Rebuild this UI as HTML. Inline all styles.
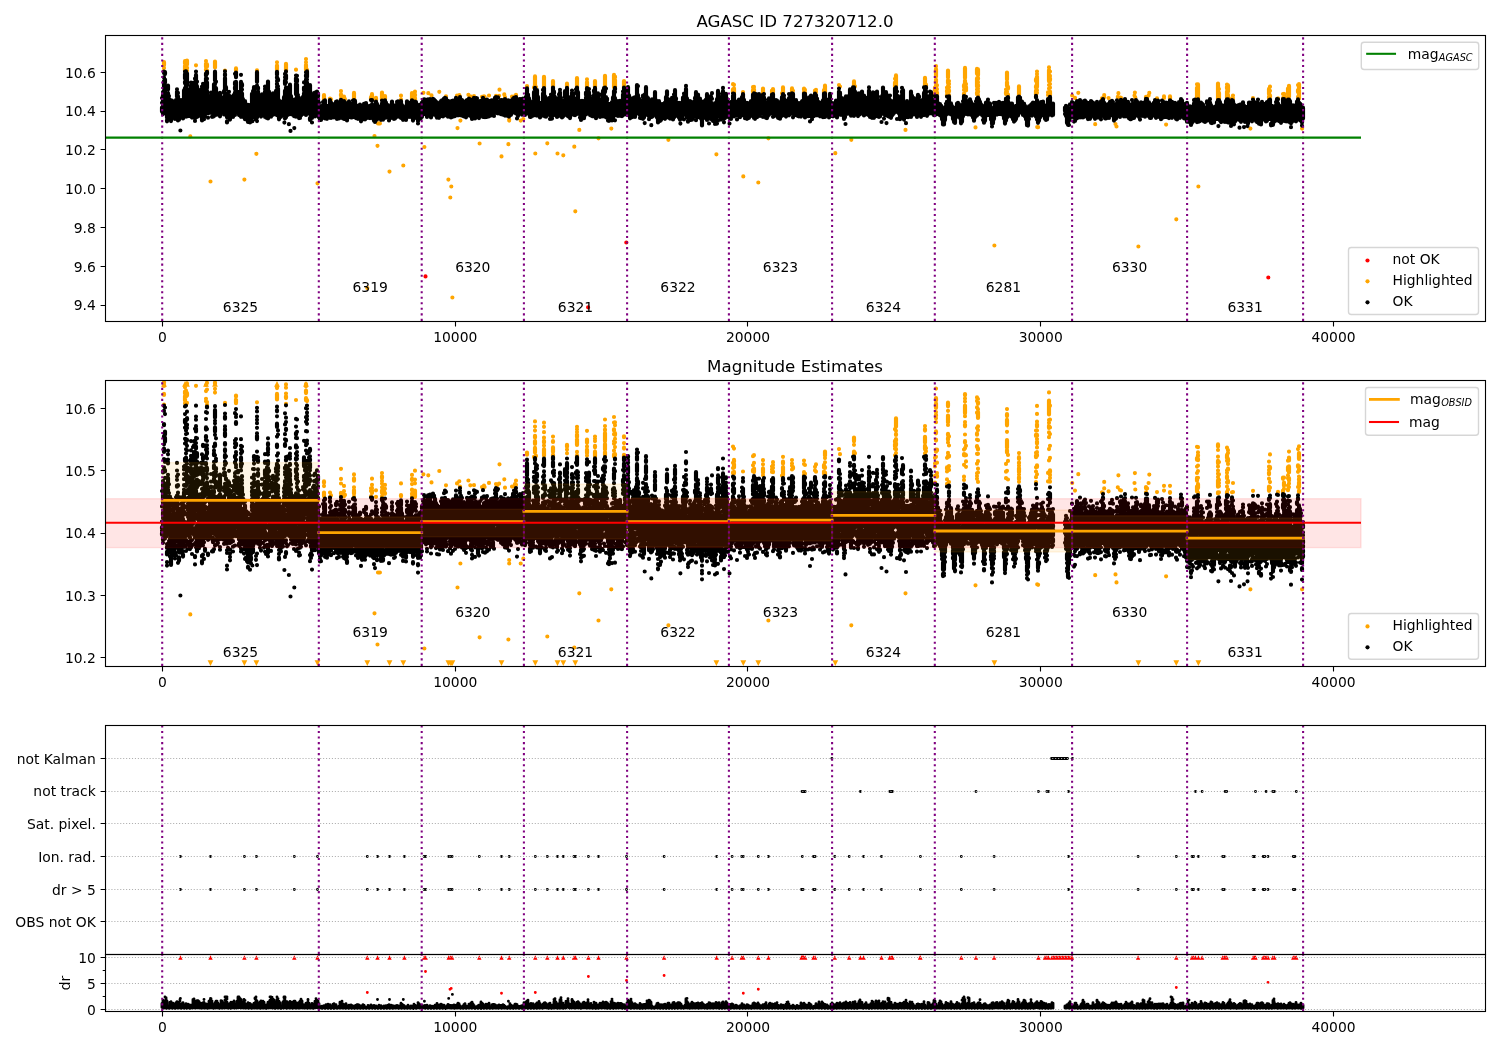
<!DOCTYPE html>
<html><head><meta charset="utf-8"><title>AGASC ID 727320712.0</title>
<style>html,body{margin:0;padding:0;background:#fff}svg{display:block}text{filter:grayscale(1)}</style></head>
<body>
<svg width="1500" height="1050" viewBox="0 0 1500 1050" style="font-family:'DejaVu Sans','Liberation Sans',sans-serif" fill="#000">
<rect width="1500" height="1050" fill="#fff"/>
<defs>
<clipPath id="c1"><rect x="105.5" y="35.5" width="1380" height="286"/></clipPath>
<clipPath id="c2"><rect x="105.5" y="380.5" width="1380" height="286"/></clipPath>
<clipPath id="c3"><rect x="105.5" y="725.5" width="1380" height="229"/></clipPath>
<clipPath id="c4"><rect x="105.5" y="954.5" width="1380" height="57"/></clipPath>
</defs>
<g clip-path="url(#c1)" fill="none" stroke-linecap="round" stroke-width="4.17">
<path d="M425.5 276.4v0M626.3 242.5v0M588.1 307.3v0M1268.3 277.5v0" stroke="#f00"/>
<path d="M164 62V65.3M164 68v0M164 71.2v0M185 61.2V63.5M185 65.8V70.7M186 66.8V68.6M186 71.2v0M187 60.6V64.6M187 67.6V68.4M187 70.6v0M196 65.3v0M206 61v0M206 63.7V67M206 69.3V70.1M207 64.4V66.5M207 70.4V71.2M215 61.6V67.4M225 70.6v0M236 68.4V70.7M257 70.4v0M277 62.3v0M277 65.5V69.6M286 63.8V70.9M296 69.7v0M306 59.1v0M306 62.3v0M306 64.8V69.8M307 69.9v0M324 95V99.7M330 98.5V99.8M331 99.4v0M341 91.1v0M341 94.3V95.7M341 98.6V99.9M344 96.5V99.7M345 99.2v0M354 92.9V99.8M371 97.2V99.8M372 94.2V98.6M376 97.8V99.8M382 92.5V99.7M384 98V98.7M385 96.1V98.9M401 95.7v0M401 99.5v0M412 93V99.8M415 91.7v0M415 94.5V95.6M415 97.9V99.9M460 96.8v0M474 96.2v0M482 96.8v0M484 96.4v0M496 95.9v0M497 96.3v0M505 97v0M512 96.7v0M515 96.2v0M516 94.8V96.1M527 86.1V86.7M534 87.4v0M535 76.4V87.5M536 87.1v0M544 76.8V87.1M553 81.1V87.3M567 83.7V86.3M577 78.1V87.3M587 79.3v0M587 82V87M595 81.1V87.2M605 75.8V86.8M614 74.9V87.3M615 76.7V77.6M615 80.1V86.9M624 81V87.4M733 84.2v0M733 89.3V92.5M734 84.8v0M734 88.4V92.5M743 92v0M753 87.2v0M753 90V92M754 86.9v0M754 89.3V92.1M763 88.5V93.2M772 90.5V92.2M773 89.1V92.2M782 93.3v0M783 87.4V93.1M792 88.4V91.4M793 90.8v0M804 88.6V89.7M804 92.2V93.2M805 89.9v0M805 92.7v0M815 90.5V91.6M816 89.8v0M816 92v0M824 90V92.7M825 85.7V93.4M839 85v0M840 86.6v0M854 81.4V86.8M855 86.3v0M895 78.8v0M895 82.5V87M896 75.4V86.2M925 77.8V87M926 84.7V85.8M935 87.7V90.4M935 93.3V95.4M936 66.2v0M936 69.1V76.6M936 79.5V82.3M936 85.2V87.4M937 85.3v0M937 89.2v0M937 92.5V93.6M947 87.7v0M947 90.7V92M947 94.4V95.8M948 70.6V77.5M948 80.2V82.9M948 86.2V87.2M949 81v0M949 83.9v0M949 87.2v0M949 90.3V91.5M949 95.2v0M964 85.2V86.9M964 89.9v0M964 93.6V94.7M965 67.9V77.9M965 80.5V86.9M966 84v0M966 86.9V90.5M977 68.9V73.7M977 78.4V86.5M977 89.5v0M977 92.5V94.2M978 69.4V75.3M978 77.9V79.1M978 82.2v0M978 84.8V86.5M978 88.8v0M978 91.1V92.3M978 95.2v0M1006 89.6v0M1006 92V94.1M1007 72.6V79.6M1007 82.2V86M1007 91.7v0M1008 86.8V88.7M1008 94.5v0M1019 86.3V95.2M1036 79.2V80.9M1036 86.2V87.5M1036 90.7V95.2M1037 71.6v0M1037 74v0M1037 76.5V87.1M1037 90.3v0M1037 92.8v0M1048 92.4v0M1048 95v0M1049 67.4v0M1049 69.9V81.3M1049 85v0M1049 88.5v0M1049 92.1v0M1050 71.5v0M1050 75.9v0M1050 78.3V80.3M1050 84v0M1050 87.7v0M1050 91.6V95.1M1102 98.4v0M1103 98.6v0M1120 97.7v0M1121 97.9v0M1146 96.8V98.4M1147 97.3v0M1157 98.4v0M1170 96.4V98.6M1197 84.3v0M1197 87.8V98.1M1198 84.4V98.5M1218 83.6V98.8M1219 89v0M1219 92.8V98.4M1227 84.6v0M1227 86.8V88.6M1227 91.6V98.8M1228 85.4V91.4M1228 94.9V97.6M1232 98.4v0M1233 95.5v0M1233 98.3v0M1253 98v0M1269 88.9V94.2M1269 96.7V98M1270 86.7v0M1270 90.8v0M1270 95.3V97M1278 98.3v0M1283 94v0M1283 98.1v0M1284 93.9V97.4M1288 88.6V94M1288 96.3V97.8M1289 85.8V96.8M1298 85v0M1298 90V92.1M1298 96.8v0M1299 84.2V88.1M1299 90.4V98.4M190.3 136.4v0M374.5 136.1v0M377.5 145.8v0M379.9 123.4v0M378 123.4v0M424.4 147v0M457.5 128.1v0M460.4 120.6v0M479.6 143.5v0M508.4 144.2v0M509.2 119.5v0M509.2 120.6v0M520.7 120.6v0M523.3 119.1v0M547.3 143.3v0M210.5 181.5v0M244.4 179.6v0M256.4 153.8v0M317.5 183.3v0M367.3 288.1v0M389.5 171.6v0M403.3 165.5v0M448.4 179.6v0M451.3 186.5v0M450.3 197.5v0M452.4 297.5v0M501.5 156.4v0M535.3 153.5v0M574.3 146.7v0M579.3 129.9v0M598.5 138.3v0M611.3 128.6v0M668.4 139.8v0M768.4 138.3v0M851.3 139.8v0M905.5 129.9v0M557.5 153.5v0M563.3 155.3v0M575.3 211.3v0M716.4 154.3v0M743.3 176.4v0M758.3 182.5v0M835.3 153.2v0M975.5 127.4v0M1038.1 127.2v0M1037.2 127.1v0M1095.2 124.2v0M1115.5 124v0M1116.5 126.5v0M1166.1 124.6v0M1250.4 128.6v0M1302.1 128.6v0M994.4 245.5v0M1138.4 246.5v0M1176.3 219.3v0M1198.4 186.5v0M423.4 92.8v0M428.3 93.2v0M431.5 95.4v0M439.3 91.8v0M446 96.3v0M457 95.7v0M459.3 95v0M468.4 94.8v0M470.3 96.3v0M484.6 96.8v0M489 95.5v0M499.5 89.7v0M499.1 95.8v0M504.3 94.4v0M1078.3 92.8v0M1072.2 95.5v0M1075 97.9v0M1104.2 95.2v0M1104.2 97.2v0M1108.6 98.1v0M1118.4 93.2v0M1117.8 96.9v0M1134.9 92.5v0M1134.5 95.5v0M1135.3 97.6v0M1149.3 92.9v0M1148.6 95.5v0M1147.1 97.2v0M1164 96.4v0M1164 97.9v0" stroke="#ffa500"/>
<path d="M162 98v0M162 102.8v0M162 107.6V111.6M163 92v0M163 94.9V101.8M163 104.1V114.1M164 71.5V73.1M164 77.4v0M164 81V88.1M164 90.7V91.9M164 97.8V98.6M164 109.6V112.8M165 72.1V74.1M165 79.5V82.7M165 88.4V89M165 91.5V96.2M165 99.8V107.3M165 109.9V112.8M166 96.3V108.6M166 112.2v0M167 97.9V112.1M167 114.5V117.8M167 120.2V121.3M168 85.5V89.4M168 93V103M168 106.3V111.5M168 114.7V115.9M169 96v0M169 98.7V111.3M169 113.6V114.7M170 99.8V118.4M171 106.5V121.1M172 100.7V101.9M172 105.8V118.1M173 102.5V114.4M174 105V114.9M175 103.5V105.4M175 108.1V119M176 100V115.8M176 118.1v0M177 89.3v0M177 91.7V96.7M177 99.5V113.6M178 92.9v0M178 96.2V113.1M178 120.4v0M179 105.8V119.7M180 104.5V117.2M181 100V115.1M182 100.8v0M182 103.2V115.7M183 101.8V104.1M183 106.7V118.4M184 90.4V105.4M184 108.2V109.7M184 113.6v0M185 71.7v0M185 74.1V78.4M185 81.8V83.3M185 88V90.6M185 102.8v0M185 105.3v0M185 107.7v0M185 110.7V112.4M185 115.4v0M186 71.4v0M186 76.1V93.6M186 96.3v0M186 98.7v0M186 107.8V116.7M187 73.4V85.4M187 88.6V98.4M187 105v0M187 111.4v0M187 114v0M188 90.8v0M188 93.4V106.1M188 108.3V111.9M188 116.1v0M189 101.1V115M190 95.4V108.3M190 112.4V116.1M191 82.5v0M191 85.4V99.8M191 102.9V106.9M191 110.9v0M191 114.9V115.6M192 91.7V93M192 97.1V115M192 117.6v0M193 84.4v0M193 87.6V89.3M193 92V111.3M194 82.6V89.5M194 92.8V96.1M194 98.3V101.5M194 104.1V104.7M194 107.7v0M194 111.7v0M194 114.6v0M195 78.7v0M195 82.3v0M195 85.7V102.4M195 106V106.8M195 109.8V114.7M195 118.5v0M195 120.9v0M196 71.5v0M196 74.9V84.8M196 88.7V92.7M196 95.7V99M196 101.8V103.4M196 106.4v0M196 109.3V115.6M197 81.7v0M197 86.2V97M197 100.2V101.7M197 105.3V106.4M197 108.9v0M197 111.6V116.9M198 91.9v0M198 96.2v0M198 99.7V116M199 92.7v0M199 95v0M199 99.1V115.8M200 102.6V115.3M201 89.3V92.7M201 95.6v0M201 99V114.6M202 86.7v0M202 89.4V92.7M202 97.4V101M202 104V113.5M202 118.2V120.5M203 83.9v0M203 87.5V99.9M203 102.6V104.3M203 107.2V110.6M203 113.8V114.9M203 117.8v0M204 96V114M204 119.2v0M205 96.7V103.4M205 105.8V112.7M205 116V116.6M206 73.5V75.7M206 78.3V93.6M206 96.3v0M206 105V110.5M207 71.8V73.7M207 78.8v0M207 82.4V87.9M207 90.8V98.5M207 101.2v0M207 103.4v0M207 106.3v0M207 109v0M207 111.3v0M208 97.5V100.5M208 103.2V113.2M208 117.7v0M209 99.6V101.1M209 103.4V113M210 99.5V112.7M211 92.7v0M211 95.1V112.6M212 98.7V99.5M212 101.7V112.6M212 116.8v0M213 98.1V114M213 116.7v0M214 84.3V100.9M214 103.2V110.6M214 116.1v0M215 71.7V80.5M215 83.3V84M215 86.9v0M215 92.3v0M215 106.9V111.6M215 114.9v0M216 81.7v0M216 88V96.9M216 99.9V110.6M216 113v0M217 101V114.6M218 101.3v0M218 104.4V114.3M219 97.8V112.1M220 92.9V101.5M220 103.9V105.2M220 109.9V113M220 115.4V116.3M221 101V112.8M222 102.8V112.7M223 100.4V113.1M224 91.1V93.1M224 96.8V112M224 114.5v0M225 71.3v0M225 73.9V75.5M225 77.9V89.9M225 92.4V93.3M225 95.8v0M225 104.8v0M225 108.6V110M225 113V114.4M226 87.2V89.4M226 94.2V99.1M226 101.4V113.1M227 101.7V105.4M227 108.1V117.3M227 121.3V122.4M228 95v0M228 97.3V115.7M229 91.8v0M229 95.4V107M229 109.9V114M230 104.3V119.6M231 99.2V111.1M231 113.3V114M232 96.5V112.1M233 101.5V108M233 110.7V116.9M234 94.9v0M234 97.2V111.9M235 73.8v0M235 82.4V84.4M235 87.1V89.2M235 92.5V97.8M235 100.2V111.2M235 115v0M236 72.6V77.2M236 81.8V92.2M236 94.6V98.2M236 104.4v0M236 107.5V109.3M236 112.1v0M237 95V108.9M238 91.8V112M239 100.6V115.1M240 94.6v0M240 98.3V111.3M240 113.7V114.4M241 74.8v0M241 81.9V91.6M241 94.5V96.1M241 99.2V101.6M241 104.3V116.8M242 84.2V85.9M242 89.6v0M242 93.4V101.3M242 103.6V113.6M243 99.2V101.7M243 104.4V114.5M244 104.6V117.5M245 101.1V115.6M245 119.2v0M246 104.3V116M246 118.8v0M247 105.5v0M247 107.9V116.8M247 119.7v0M248 104.8v0M248 108.1V121.9M249 105.2V118.8M250 105.3V119.4M250 122.5v0M251 106.5V120.5M252 93.8V111.9M252 114.5V115.8M253 91.2v0M253 93.9v0M253 98.3V100.4M253 102.9v0M253 106.5V117.1M254 87.1V100.5M254 102.8V114.4M255 98.1v0M255 102.2V113.8M256 96.1V111.2M256 113.8v0M256 118.2V119.4M257 72.2V82M257 85.7V88M257 95.3V96M257 98.7v0M257 101.2v0M257 107.2V114M257 117.5v0M257 121.1v0M258 87.6V89M258 91.3V105M258 108.2V114.4M259 96V99.2M259 101.8V114.4M260 101.4V115.7M261 101.3V114.2M261 116.6v0M262 94.3V96.1M262 98.8V109.2M262 111.9V112.7M263 100.4V114.2M264 97.2v0M264 99.6V106.2M264 108.8V112.8M264 115.6v0M265 86.6v0M265 89.1v0M265 91.6V104.7M265 107.4V108.3M265 110.6V116.9M266 96.4V107.5M266 111.2V112.7M266 117.6v0M267 90.6V109.4M267 111.8V112.4M267 114.8v0M268 81.6V96.5M268 109.4v0M268 113v0M268 115.2V118.4M269 91.7V106.3M269 109.1v0M269 111.6V113.2M270 102.5V114.4M271 101.3V114.3M271 116.7v0M272 95.5V98.2M272 101V115.2M273 93.3V110.5M273 113.2V114.6M274 101.6V114.3M275 95.5V97.8M275 100.1V111.4M276 90.9V103.8M276 106V110M276 112.9v0M277 71.8V74.8M277 77.1V78.1M277 81.1v0M277 83.6V84.4M277 87v0M277 89.6V94.6M277 106.5V108.4M277 111.8V115.2M278 79.2V80.4M278 86.3v0M278 88.6V102M278 104.4V111.5M278 114.4v0M279 100.3V119.3M280 101.5V115.8M281 104.9V116.8M282 102.9V114.7M283 101.1V115.3M284 97.2V109.7M284 112V113.9M285 73.9v0M285 77.3v0M285 80.4V84M285 90.8V102.4M285 108.5V112.1M285 118.5v0M286 71.4v0M286 75.2V79.1M286 82.3v0M286 87.5V90.1M286 92.5V96M286 107.7V114.3M286 117.3v0M287 91.9V94.6M287 96.8V98.8M287 101.1V111.3M287 115.2v0M288 87.5v0M288 90.5V106.3M288 108.8V110M288 114.8v0M289 94.5V112M290 84.7V95.4M290 99.5V100.5M290 103.4V109M291 96V114.2M292 100.5V114.4M293 99.6v0M293 103V114.5M294 100.6V116.1M295 99.9v0M295 102.2V114.4M296 75.6v0M296 78V81.5M296 83.8V94.2M296 98.8V109.3M296 112.2V116.7M297 75.8v0M297 79.6V81.6M297 84.5V96.9M297 99.1V111.5M298 95.1v0M298 97.6V113.1M298 115.9v0M299 97.9v0M299 100.2v0M299 102.6V113.7M299 117.1V118.1M300 100.2V102.7M300 105.1V115.7M300 118v0M301 99.7V115.4M302 104.5V114.3M303 96.8V113.5M304 82.4v0M304 87.6V90.3M304 93.3V96.9M304 99.5V103.9M304 106.5v0M304 109.7V112.7M305 89V105.4M305 107.9V109.7M305 114.1v0M306 72.3v0M306 75.1V76.5M306 79.4v0M306 82.6V85.5M306 89.3V96.7M306 104.2v0M306 109V111.6M306 114.9v0M307 71.4V77.1M307 79.5v0M307 82.4V83.3M307 86.4v0M307 88.7V96.1M307 98.9v0M307 102.6V105.2M307 107.9V109.1M307 111.7V113.7M308 93.3v0M308 99.1V113.3M309 86V87.6M309 92.7v0M309 95.9V112.9M310 85V95M310 97.8V105.2M310 112.8V114.1M310 118V119.9M311 98.4V99.1M311 102.8V118.8M312 103.2V118M312 122.5v0M313 96.9V111.6M313 116.1v0M314 93.2V113.8M314 116v0M315 92.6V94.8M315 97.9V116.4M316 98.9V115.3M317 91.6v0M317 94.4V111.8M317 114.3v0M318 93.3V96.6M318 98.9V112.9M319 102.8v0M319 105.4v0M319 107.8V117.5M320 108V119.9M321 106.6V119.9M322 107.3V117.2M323 102.1v0M323 105.2V117.4M324 101V109.3M324 111.9V116M325 100.4V118.5M326 107.8V117.4M327 107.9V118.8M328 105.8V115.5M328 117.9v0M329 106.2V117.5M330 100.1V117.4M331 102.6V118M332 106.9V115.7M333 104.6V115.6M334 104.2V114.9M334 117.4v0M335 108V115.9M336 101.9V116.5M337 101.4V115.7M337 118.9v0M338 105.1V117.4M339 108.4V118.5M340 102.5V103.7M340 107.4V116.8M341 99.9V112.8M341 115.7V117.3M342 102V116.8M343 108V118.5M344 101.1V111.4M344 114.3V118.9M345 102.3V116.4M346 107.7V119.2M347 109.6V120.4M348 108.3V117.2M349 101.4V115.5M350 106.9V116.9M351 110.3V117.4M352 107.9V117.4M353 100.5v0M353 102.9V114.1M354 100.2v0M354 102.4V110.4M354 113.4V114.5M354 116.8v0M355 100.8V115M356 106.5V118.1M357 105.5V116.5M358 107.5V118.8M359 106.4V118.1M360 104.7V116.7M361 106.7V116.6M361 121.3v0M362 109.2V119.5M363 107.8V117.8M364 103.9V104.6M364 107V117.4M365 107.4V119.4M366 103V115.2M367 107.8V117.9M368 106.2V117.3M369 106.2V117.8M370 108.4V118.1M371 100.1v0M371 105.3V115.8M372 100.1V100.8M372 104.4V105.2M372 108.3V117.5M373 107.5V118.6M374 112.6V120.8M375 104.9V116.7M375 122v0M376 101.5V115M376 117.2V117.8M377 103.9V119.6M378 106.2V117M379 106.6V115.5M380 109.1V117.9M381 107V119.8M382 100.6v0M382 103.3V119.5M383 101.5V104M383 107.6V119.7M384 102.1V115.2M384 118.1v0M385 100.3V117.1M386 102.7V117.6M387 105.4V116M388 105V116.5M389 107.3V117.6M389 120.5v0M390 106.8V117M391 107.8V117.9M392 101.6V112.7M392 115.4V116.6M393 105.5V116.8M394 105.4V114.9M394 117.7V118.9M395 106.2V118.6M396 107.1V108.6M396 111V117.3M397 101.9v0M397 104.2V114.2M398 101.4V114.4M399 104.1V116.7M400 101.6v0M400 104V116.5M401 101V114.2M401 117.9v0M402 105V117.7M403 106v0M403 108.2V119.8M404 107.5V117.3M405 108V118.3M406 107.6V120M407 101.3V113.6M407 115.9v0M408 106.7V117M409 103.4V115.8M410 102.5V117M411 104.5V114.4M412 100.3V116.3M413 106V120.6M414 107.5V116.8M415 101.5V103.7M415 106.5V114M416 102.1V117.9M417 106.9V117M418 105.6V121.2M418 123.4v0M419 105.2V117.2M420 104.7V118.8M421 106.5V118.1M422 102.7V114.1M422 116.8v0M423 101.2V112.7M424 99.3V114M425 99.7v0M425 102.2V114.1M426 101.5V114.6M427 104.7V116.9M428 99.4V113.5M429 100.5V111.6M429 114.2v0M430 99.2V113.1M431 102.2V117.5M432 101.7V115.2M433 98.8V99.8M433 102.9V112.7M434 99.5V114.2M435 100.5V108.4M435 111.8v0M436 101.8V115.8M437 102.4V104.6M437 106.9V117.7M438 104.3V115.2M439 103v0M439 105.2V117.8M440 103.3V116.2M441 101.2V114.9M442 100.3V114.9M443 101.5V116.4M444 98.7v0M444 101.4V114.5M445 97.9v0M445 100.1V113M446 98.3v0M446 102.3V115.3M447 100.8V112.1M447 114.8v0M448 100.9V112.4M448 116.7v0M449 101.7V112M450 102.5V115.9M451 101.3V115.3M451 117.5v0M452 101.2V113.5M453 100.7V114.1M453 116.6v0M454 101.3V113M455 103.9V116.1M456 97.9V110.1M456 112.8v0M457 99.9v0M457 102.6V114.8M458 100.3V113.1M458 115.3v0M459 101.1V114.1M460 97.2V111.8M460 115.2v0M461 99.5V114.5M462 100.2V115.6M463 101.6V114.7M464 101.5V116.4M465 101.9V114.8M466 104.9V117.3M467 100.2v0M467 103V112.8M468 100.6V113.1M469 98.6v0M469 101.2V113.1M469 115.5v0M470 100.2V113.2M471 103.7V116.3M472 99.7V119M473 101.7V114.3M474 97.8V113M475 98.9V100.1M475 103.1V115.6M475 118.5v0M476 98.2v0M476 101.3V112M476 114.5v0M477 98.3v0M477 103.8V113.9M478 103.9V117.5M479 101.9V115.4M479 118.1v0M480 101.2V115.3M481 102.9V114.1M482 100.3v0M482 103.3V115.9M483 97.8v0M483 103.1V117M484 99.7V112.2M485 102.1V112.9M485 117.2v0M486 100.4V115.7M487 99.7V102.5M487 105V112.1M487 116.8v0M488 101.7V116.3M489 101.2V116.3M490 101V112.6M491 100.5V112.5M491 115.4v0M492 100.4V115M493 101.8V115.3M494 100.3V112.8M494 116v0M495 97.8V112.7M496 97.1V110.3M497 97.9v0M497 100.4V113.1M498 97.4v0M498 102.8V113.3M499 102.5V113.2M500 101.3V112.5M501 100V114.2M502 100.2V111M503 100.9V114.7M504 100.4V111.8M505 99v0M505 101.4V115.6M506 100.9V114.4M507 101.5V115.7M508 100.3V114.1M509 100.5v0M509 102.9V114M509 116.6v0M510 101V113.6M511 101.5V114.8M512 100.1V112.6M513 98.9V112M514 97.9V111.5M515 98.3v0M515 100.6V113M516 97.1V107.1M516 109.7v0M516 113.4v0M517 103.2V114.1M517 118.4v0M518 101.1V116.1M519 99.3V113.7M520 99V112.1M521 99.3v0M521 101.8V113.9M522 100.7V114.7M523 98.7V112.8M524 100.6V113.3M525 100.1v0M525 102.3v0M525 104.9V114.9M526 96.8V98.3M526 102V113M527 88.3V96.7M527 101.1V103.2M527 106.6V107.9M527 112.3v0M528 94.5V107.9M528 110.5V111.9M529 98.3V109M529 111.3V114.2M530 104.1V117M531 104V116.8M532 103V115.3M533 101.1V115.7M534 92V98.6M534 101.8V109.8M534 112.3v0M535 87.8V89.4M535 94.2v0M535 105.9V112.3M536 89.9V104M536 108.2V112.7M536 115.3v0M537 90.2V99.5M537 102.2V111.2M537 115.6v0M538 96.9V115.5M539 103V114M540 106.4V117.4M541 102.8V114.4M542 102.5V115.7M543 89.9v0M543 93.6V113.9M544 88V97.3M544 103.9V107.2M545 96.3V116.4M546 103.3V116.7M547 104.2V113.8M548 101.2v0M548 103.6V114.4M549 98V114.1M550 99.2V115.3M550 119v0M551 94.7v0M551 97.4v0M551 100.1V102.1M551 104.3V115.3M552 95.2v0M552 98.8V109.8M552 112.4V115.1M552 118.6v0M553 87.5V92.5M553 95.9v0M553 98.3V99M553 101.9v0M553 107.9v0M553 112.1V115.6M554 91.7V93.3M554 95.6V108.9M554 111.3v0M555 97.2V114.6M556 100.7V113M557 106.4V117M558 102.7v0M558 105V114M558 116.5v0M559 94.4v0M559 97.7V110.9M559 113.4V114.2M560 89.8v0M560 92.3V100.6M560 102.8V104.2M560 108.4V111.7M561 97.9v0M561 101.3V113.3M562 100.6v0M562 105.3V117.4M563 103.7V116.6M564 103.3V114.7M565 91.2V97.8M565 100.5V112.6M566 92.6v0M566 95.3V102.2M566 104.7V107.8M566 111.1v0M567 87.9V100.2M567 102.5V109.3M567 112v0M567 115.4v0M568 96.8V98.8M568 101.1V116.3M569 102.9V115.2M570 106V118.1M571 97.2v0M571 100.3V114.4M572 90.6v0M572 92.8V109.4M573 93.6V111.8M573 114.1v0M574 103.3v0M574 105.5V114.9M575 101.6V115.2M576 89.3v0M576 92.4v0M576 98.3V111.8M577 87.5V94.1M577 98.5V99.2M577 102.5V104.3M577 113.9v0M578 92.2V109.4M578 111.8v0M579 100.5V113.9M580 104.1V114.7M580 117.6v0M581 104.3V119.9M582 100.8v0M582 103.5V112.6M582 118.5v0M583 103.2V118.2M584 105.7V118.2M585 100.5V112.5M586 92.5V95M586 97.4V99.4M586 102.1V110.5M586 113V114.4M587 88.2V89.8M587 92.6V93.4M587 97.1v0M587 101.7V111.5M588 92.8v0M588 95.4V108.6M588 111.2V112.4M589 89v0M589 92.3V110.7M590 96.1v0M590 101.7V115.1M591 98.8V101.6M591 105V113M592 101.8V116.1M593 101.8V116.2M594 90.5V91.7M594 94.9V96.6M594 99.2V108.7M594 110.9V111.8M595 87.9V96.4M595 99.9v0M595 103.6v0M595 106.1V108.3M595 113.4V116.5M596 97.4V118.2M597 95.2V105.5M597 108.2V112.9M598 93.4V112M599 101.9V103.8M599 106V115.5M600 100.3v0M600 102.9V116.9M601 94.9v0M601 99.2V100.3M601 102.7V113.5M602 94.1v0M602 99V112.6M602 116.1v0M603 90.8V106M603 109.5v0M603 116.4v0M604 88.2V104.3M604 108.7v0M604 112.2V114.4M605 87.5V92.1M605 108v0M605 111.4v0M605 115.1v0M606 88.6v0M606 97V99.4M606 101.6V111.9M606 117.3v0M607 98.6V100.3M607 102.7V105.1M607 107.4V112.5M608 103.6V105.3M608 107.9V115.3M608 120.6v0M609 104.4V117.6M609 119.9V120.8M610 104V119M611 103.7V115.3M612 102v0M612 105.7V112.8M612 115.2V117.4M612 120.5v0M613 97.4V99.4M613 101.7V113.8M613 116.4V117.5M614 91.1V100.4M614 105.6V109.2M614 113.1v0M614 115.7v0M615 87.9V89.6M615 91.9v0M615 98V107.5M615 110.9V115.5M615 120.3v0M616 100.9V112.7M617 102.2V112.1M618 101.2V116M619 102v0M619 104.3V114.5M620 100.8V110.8M620 114.6v0M621 103.2V116M622 102.7V113.6M622 116.1v0M623 91.5v0M623 94.6V98.9M623 102.7V111.9M623 115.3v0M624 87.7V93.7M624 96.3V97.4M624 105.4v0M624 108.5V112.3M625 94V110.9M625 113.9v0M626 100.1V114.1M627 94.3V109.3M627 112.4V114.9M628 87.2V100M628 103.8v0M628 111.5v0M629 95.3V109.1M629 112.4v0M629 115.2v0M630 103.6V118.3M631 98.3v0M631 101.4V116M632 104.1V117.2M633 98.9V116.3M634 97.7V113.1M635 101.2V108.9M635 111.2V116.9M636 96.8V109.8M636 114.1v0M637 85.1V99.4M637 111.1v0M638 86.1v0M638 95V113.2M639 98.5V109.3M639 111.6V113.6M640 101.4V112.7M640 115.3v0M640 117.9v0M641 100.6V118.2M642 103.3V115.8M643 95.5V97.2M643 99.9V110.7M643 113.5v0M643 118.8v0M644 103.6v0M644 105.8V117.6M645 94.3v0M645 97.7V98.4M645 101.2V114.3M646 87.2V100.3M646 102.6v0M646 108.2v0M646 112.2v0M646 114.6v0M647 97V114.6M648 98.1V111.9M649 104.4V116.5M649 119.2v0M650 103.2V115.7M651 102.1V117.1M652 99.4V100.4M652 102.6V116.8M653 102.6V116.1M654 100.2V113.7M655 92.1V106.9M655 111.9v0M655 114.5v0M656 100.4V113.5M657 102.4V117.6M658 104.4v0M658 107.8V116.9M658 119.2V122.4M659 101.2V114.8M660 105.9V121M661 104.1v0M661 106.6V120M662 104.2V117.6M663 104.2V117.8M664 104.4V118.1M665 102.6v0M665 106.1V115.9M665 118.8v0M666 97.1V114.1M666 117.1v0M667 91.3V95.3M667 97.9V102.5M667 105.2v0M667 109.5V114.7M668 99.2v0M668 102.6V114.8M668 117.3v0M669 103.2V114.5M669 117.3v0M670 105V118.6M671 99.4V114.4M671 117.7v0M672 97.9V114.7M673 104.7V119.4M674 94.5v0M674 97.4V110.9M674 113.3V115.3M674 117.6v0M675 90.2V103.7M675 108.5v0M675 111.7V112.8M675 116v0M676 98.3V99.3M676 101.5V114.3M677 103.9V114.4M678 103.3V116.2M679 102.8V117.7M680 108.1V119.7M681 106.6V118.9M682 102.7V114.1M682 117.6V118.4M683 97.7V115.4M684 93.7v0M684 96.3V113.2M684 119.3v0M685 95.5v0M685 97.9V113.8M686 85.9v0M686 88.8V103.7M686 107V107.8M686 112.3V113.4M687 98.4V99.8M687 104.5V117.3M688 107.9V117.9M688 120.8V121.7M689 105.5V115.6M689 120.3v0M690 101.1V115.2M691 103.9V119.9M692 102.8v0M692 105.5V119.7M693 103.1V117.5M694 101.7V116.3M695 97.9V98.6M695 101.2V111.9M695 114.6V115.3M696 92.2V105.7M696 111.3v0M696 113.8v0M696 116.6v0M696 120.2v0M697 96.6v0M697 101.1v0M697 103.6V117.8M698 94.6V112.8M698 115.3V116.8M699 100.5V117M700 98.7V114.5M701 101.3v0M701 104.1V118.7M702 103.2v0M702 106.4V125.5M703 103.6V118.1M704 101.4V102.3M704 106.7V116.6M705 100.8v0M705 103.6V116.6M706 99.5v0M706 103.6V118.2M707 94.2V109.5M707 114.5v0M707 119.9v0M708 98.7V114.3M709 105.4V117.7M710 102.5V118.7M711 96.1V99M711 103.8V112.4M712 93.2v0M712 98.8v0M712 103V119.7M713 104.6V117.7M713 121v0M714 106.9V120M715 105.5v0M715 107.8v0M715 110.7V121.2M715 124v0M716 102.5V103.4M716 105.9V117.9M717 99.2V115.5M717 123.6v0M718 90.9V105.1M718 108.9v0M718 115.5V116.7M718 120.7v0M719 93.8v0M719 96.1V102.5M719 105.1V113.6M719 116.2v0M720 97.7V98.5M720 100.9V107.9M720 110.3V114.9M721 105.8v0M721 108.4V119.6M722 97.9v0M722 100.1V117.8M723 87.9v0M723 91V102.3M723 108.1V109.3M723 111.8V116.2M724 95.5v0M724 97.7V118.6M724 122.3v0M725 102.5V118.1M726 93.8V114.9M727 98.9V115.6M728 102.7V114.6M728 117v0M729 103.1V115.7M730 102.4v0M730 105.4V118.4M731 104.3V116.2M731 119v0M732 101.7V114.3M733 93.6v0M733 95.8V101M733 103.3V113.8M734 93.8V108.5M734 110.7V113.5M734 116.5v0M735 101.5V113.2M736 103.5V114.7M737 103.4V115.6M737 119.5v0M738 101V115.2M739 99.7V113.6M740 105.7V117.2M741 103.3V114.9M742 97V98.2M742 101.6V110.8M742 113.6V115.5M743 94V110.6M744 99.8V113.7M745 103.3V115.6M745 118.2v0M746 103.5V115.2M747 102.9v0M747 105.6V116.2M747 118.8v0M748 104.6V118M749 105.4V117.8M750 102.8V115.7M751 101v0M751 104.3V114.3M752 101.6V113.2M752 115.8v0M753 94.7V105.7M753 108.7v0M753 111V114.5M754 93.4V107.3M754 110.3V114.1M754 117.9v0M755 100.8V113.9M755 117.4V118.8M756 94.2V113.1M756 115.4v0M757 99.9V103.4M757 105.9V117.2M758 101.2V115M759 94.2v0M759 96.7V108.8M759 112.7v0M759 115.6v0M760 96.5V113.7M760 116v0M761 98.4v0M761 102.9V111.9M762 96.4V113M763 94.6V106.2M763 110.9V112.1M763 117v0M764 94v0M764 97.4V109.1M764 112.5V114.2M765 103.2V115.3M766 103.6V117.8M767 102.8V114.4M767 117.4V118.1M768 99.8v0M768 102V112.3M768 115.1V115.7M769 98.4v0M769 101V114.8M770 98.3V111.5M771 103.5V112.6M772 94.5V110.3M772 113.5v0M773 94.1V108.8M773 111.1V111.9M773 116.8v0M774 105.4V116.3M775 103.5V115.2M776 100.1V112.3M777 100.7V115.2M778 103.4V117.8M779 103.8V116.9M780 104V118.7M781 101.4V114.2M782 97.1V108.5M782 112.6V115.8M783 94V95.9M783 98.3V99.5M783 106.2V110.8M784 95.7v0M784 98.3V114.4M785 102.5V115.3M786 105.5V116.6M787 100.7V113.1M788 101.5v0M788 104.3V114.8M789 94.1v0M789 98.2V99.1M789 101.5V115.3M790 96.9V114.2M791 97V110M791 112.4V113.2M792 93.4V104.3M792 108.8V110.6M793 93.8V98M793 101.1V112.5M793 117.3v0M794 101.3v0M794 103.6V114.9M795 100.8V101.4M795 104.3V114.4M796 100.1V115.2M797 103.8V115.6M798 103.7V116.1M799 103V116.5M800 104.1V115.2M801 104V116.6M802 101.3V115.7M803 100.5V113M804 93.5V106.4M804 108.8V111M804 114.4v0M805 93.8V109.1M805 115.8V117.5M806 101.9V114.8M807 98.8v0M807 101.7V114.5M808 102V113.8M808 116.2v0M809 97.3v0M809 100.1v0M809 102.9V112.6M810 98v0M810 101v0M810 104.8V116M811 95.5V114.1M812 102.2V113.9M812 116.3v0M812 119.2v0M813 101V115.6M814 99.4V113.9M814 116.1v0M815 93.7V104.9M815 107.2V114.1M816 95V113.1M817 98.6V106.9M817 109.3V115.3M818 101.7V113.2M819 102.4V114.1M820 103.6V116.3M821 104.8V113.8M822 102.4V115.4M823 100.3V114.3M823 117.2v0M824 93.7V101.5M824 104.5V113.2M825 93.4V100.9M825 103.5V104.1M825 106.4V110M825 116.9v0M826 99.7v0M826 102.4V114.1M827 99.7V115.5M828 102.8V116.1M829 103.7V117.5M830 93.9V113.2M831 102.4V115.8M832 105.9V115.6M833 104.3V116.3M834 103v0M834 105.3V115.9M835 103V114.8M836 100.7v0M836 103.1V113.2M837 104V117.5M838 100.4v0M838 102.7V115.1M839 88.5v0M839 91.5V103.5M839 105.9V106.7M840 92.7V109.5M840 112.3v0M841 98.9V114.8M842 98.1V99.5M842 103.2V113.4M843 101.3V114.3M844 105.3V118.9M845 99.3V112.7M845 116.6V117.3M846 96.3V107.7M846 111.2V113.9M847 99.9V100.6M847 102.8V113.6M848 101.2V113.6M849 95.9v0M849 98.3V112.8M850 89.4V112.1M851 99.1v0M851 102.4V115.7M852 99.5V114M853 87.4v0M853 92.8v0M853 95.8V96.9M853 99.6V108.7M853 111.9V113.6M854 87.3V93.2M854 96.7v0M854 109.7V110.7M854 115.8v0M855 91.7V109.4M855 114.2v0M856 93V94.5M856 97.9V108.7M856 111.4v0M857 97.6V112.2M857 114.7v0M858 97.7v0M858 101.3V116.1M859 93.4V105.1M859 107.7v0M859 112v0M860 99.4v0M860 102.6V114.3M861 96.7V113.4M862 91.5V107.4M862 110.3v0M863 96.2V108.2M863 112.9V113.6M864 95.6V111.2M864 113.6V115.4M865 97.7V114.2M866 99V111.8M867 103.4V114M868 97.3V112.3M868 114.8v0M869 87.4v0M869 90.6V102.2M869 104.4V105.6M870 93.7v0M870 96.6v0M870 99.3V117M871 99.8V114M872 99.1v0M872 102.2V113.9M872 117.8v0M873 92.4v0M873 95.9V110.3M874 103.4V117.8M875 99.7V109.9M876 92.5V107.1M876 109.9v0M876 112.2V114.5M877 91.5V108.4M877 112v0M877 116.2v0M878 96.7v0M878 99.4V108M878 110.2V114.5M879 102.9V104.1M879 106.6V117M880 103.3V114M880 116.4v0M881 102.1V114M882 96.2V113.2M883 87.5V98.9M883 101.3V103.1M883 108v0M883 111.9v0M884 93.3V94.4M884 98.6V107M884 109.3V114.1M884 118.6v0M885 103.3V115.2M886 92V113.1M887 95.2V96.5M887 100.6V112.6M888 99.6V116.2M889 98.2V110.6M889 113.2V116.7M890 95.6v0M890 100V116.6M891 103V117.8M892 103.1V115.4M893 101.2V114.2M894 101.2V112.9M895 88.5V107.2M896 87.4V93.8M896 97.4v0M896 103.3v0M897 91.6v0M897 96.2V109.1M897 112v0M897 119v0M898 96.1V111.2M899 99.9V113.6M900 104.9V119.2M901 102.6v0M901 105.8V115.2M901 117.8v0M902 87.8v0M902 91.3V92.7M902 95.2V106.4M902 108.8v0M903 90V108.3M903 111v0M904 102.5V116.4M904 119.6v0M905 104V116.7M906 103.7V114.2M906 116.8v0M907 101.2V115.6M908 102.7V112.5M908 115.8V117.2M909 102.6V115.1M910 102.9V114.3M910 116.5v0M911 91.7V104.1M911 108.7V111.3M911 115.3V116.9M912 95.8V99.9M912 102.3V111M912 114.9v0M913 98.1V113.8M914 98V114M915 103.2V114.4M916 100.3V110M916 112.5V113.9M917 100.9V116.9M918 94.8V106.2M918 110.3v0M918 112.8V113.7M919 96.3V97.7M919 100.6V115.1M920 100.8V114.3M921 102.4v0M921 106.6V116.8M922 102V113.1M923 99.6V114.1M924 87.4v0M924 92.9V109.1M924 114V115.1M925 87.4V91.5M925 97.2V98.5M925 102.9v0M925 109.7v0M926 87.1V88.4M926 91.1V92.7M926 95V103.8M926 106.3V112.8M927 98.1V115.8M928 97V113.7M929 101.6V112.5M930 91.7v0M930 95.5V108.9M930 113.3v0M931 92.1V105.9M931 110v0M932 100.3V111.9M933 100.9V101.6M933 104.2V114.1M934 103.8V115.2M935 95.9v0M935 99.1V112.5M935 115.1v0M936 104.8V113.9M937 96.1V114M938 103.2V113.5M939 104.3V114.6M940 104.1V115.2M941 105.5V116M942 108.1V119.2M943 110.5v0M943 112.7V124.5M944 108.9v0M944 111.9V124.4M945 107.1V120.1M946 103.8v0M946 106.1V114.8M947 96.6v0M947 101.7V112.8M948 106.4V109.9M948 112.4V113.7M949 96.3V112.2M950 104.3V113.1M951 103.4V114.4M952 106V114.2M953 107.4V119M954 112.4V122.1M955 110.7V123M956 107.4V117.4M957 103.7V114.5M958 102.8v0M958 105.2V115.4M959 104V115M960 105.4v0M960 107.7V117.9M961 109.2V123.3M962 107v0M962 110.3V121.7M963 101.3v0M963 103.9V116.2M964 96V99.3M964 102.2V110.8M964 114.4v0M965 106.6V112.2M966 96.8v0M966 100.2V113.2M967 103.3V114.1M968 104.9V111.8M968 114.4v0M969 103.6V112.8M970 99.3V114.3M971 101.9v0M971 104.5V113.3M972 103.9V115.3M973 104.7V117.5M974 110.1V120.7M975 108V117.3M976 101.4v0M976 104.5V114.3M977 98.5V100.4M977 104.2V111.4M977 115.6v0M978 97.5V98.7M978 105.8V112.8M979 99.4V113.9M980 101.8V113.5M981 104.3V113.4M982 105.4V114.9M983 107.4V115.9M983 120v0M984 111.8V122.7M985 106.2V120.7M986 102.6V112.7M986 115V115.7M987 103.3V113.4M988 99.7v0M988 102.3V111.6M988 114.8v0M989 103.1V114.8M990 103.7V114M991 107.1V119.4M992 113.5V124.1M992 126.5v0M993 110.1V110.7M993 113.5V123.3M994 102.9v0M994 108.5V119M995 104.6V113.9M996 102.9V112.1M997 104.3V114.6M998 104.9V113.6M999 101.9V113.9M1000 103.9V113.8M1001 103.2V113.5M1002 105V114.4M1003 102.9V114.5M1004 107V118.6M1005 112.8V123.6M1006 98.6V103.6M1006 107.3V113.1M1006 115.4V120.6M1007 108.6V113.9M1007 116.2V117.6M1008 97.1V98.7M1008 101.1V102.8M1008 105.2V112.4M1008 115.4v0M1009 103.8V114.3M1010 104.5V113.2M1011 103.5V116.4M1012 103.7V116.5M1013 108.7V119.3M1014 109.8V119.2M1014 121.6v0M1015 112.1V120.6M1016 105.8V119.1M1017 105.8V115.4M1018 97.4V115.6M1019 96.6V99.8M1019 105.3V112.3M1020 97.6V112.5M1021 101.2v0M1021 103.6V111.9M1022 101.7V112.7M1023 104.1V114.9M1024 103.6V114.8M1025 105.8V116.5M1026 109.5V119.2M1027 113.2V125.2M1028 110.5V125.6M1029 106.3V116.2M1029 118.9v0M1030 105.9V115.2M1031 104.9V114.3M1032 103.8V115.6M1033 102.6V114.5M1034 103.4V114.5M1035 102.8V113.7M1036 95.9V97.4M1036 102.6V116.8M1037 100.1V102.1M1037 105.6V116.2M1037 119.4v0M1038 103.7V108.5M1038 113V122.8M1039 109.2V120.7M1040 105.5V117.4M1041 102.1V115.2M1042 103.1V115.4M1043 101.6V111.6M1043 114v0M1044 105V113M1045 105.6v0M1045 108.2V118.8M1046 107.8v0M1046 110.2V119.9M1047 109.8V119.4M1048 99.1V103.9M1048 106.5V115.7M1049 98.6v0M1049 105.8v0M1049 108.2V111.8M1050 96.9V111M1051 104.5V113.7M1052 104.6V115.4M1053 103.6V114.9M1065 107.6V111.1M1065 114.1v0M1066 105.8V116M1067 106.5V123M1068 113.6V124.8M1069 110.9V120.7M1069 125v0M1070 104.3v0M1070 108.2V118.2M1071 107V115.3M1072 102v0M1072 104.8V113.8M1073 104.9V115.3M1074 103.6v0M1074 106.6V115.6M1074 117.9v0M1074 121.6v0M1075 104V118.3M1075 121v0M1076 102.9V114.2M1077 101.2V102.7M1077 105.1V116M1077 118.3v0M1078 104.5V114.5M1079 103.8V115.3M1080 100.1V114.5M1080 117.5v0M1081 101.9V114.4M1082 103.7V116.5M1083 105.8V117.4M1084 101.2V103M1084 105.4V114.6M1084 117v0M1085 100.7V112.8M1086 101.8v0M1086 104.1V115.8M1087 104.7V116.2M1088 104.7V119.1M1089 102.8V116.7M1090 104.3V118.8M1091 101.1v0M1091 103.5v0M1091 106.4V115.4M1092 103.5V113.1M1093 102.7V115.4M1094 105.1V114.1M1094 117.1v0M1095 104.5V115.5M1095 118.8v0M1096 104.5V116.6M1097 101.9V117.3M1098 104.6V115.2M1098 117.4v0M1099 104.9v0M1099 107.2V117.3M1100 103.7V115.6M1101 101.3v0M1101 105.5V117.1M1101 119.3v0M1102 100.9V114.2M1103 99V113.1M1104 102.6V114.4M1105 106.1V118.3M1106 104.6V118.4M1107 105V114.9M1108 104.2V117.2M1109 104.6V114.2M1109 118v0M1110 101.8V115M1111 103.9V115.2M1112 100.8v0M1112 105V114.7M1113 102v0M1113 104.2V113.5M1113 115.8v0M1114 104.5v0M1114 106.9V120.6M1115 106.8V119.2M1116 106.8V118.6M1117 100.3v0M1117 103V113.6M1118 104.2V115.7M1119 105.8V115.2M1120 101.4V117M1121 99.8V115M1122 103.3V115.2M1123 101.5V113.6M1124 100.5V116.5M1125 99V114.1M1126 105V116.3M1127 106V116.2M1128 101.9V116.2M1129 104.1V118.2M1130 104.8V119.1M1131 105.3V119.2M1132 100.1v0M1132 104.2V118.4M1133 103.1V115.7M1134 105.1V117.9M1135 104.3V115.9M1136 100.1V112.9M1136 115.5v0M1137 101.4V113.2M1138 104.8V115.8M1139 104.8V117M1140 104.5V115.9M1140 119.6v0M1141 102.3V115.7M1142 102.9V116M1143 103.4V113.6M1144 103.2v0M1144 106V115.7M1145 102V116.7M1146 98.9V115.4M1147 99V114.9M1148 102.6V114.2M1149 102.4V112.7M1149 116.5v0M1150 105.7V114.8M1150 118v0M1151 104.7V115.2M1151 117.9v0M1152 105.1V116.2M1153 104V115M1154 102.7V115M1155 100.2v0M1155 102.7V115.2M1156 106.8V117.8M1157 101.1V113.1M1158 100.7V115.5M1159 104.7V116.9M1160 105.5V115.8M1161 104.7V119.2M1162 100.5v0M1162 104.4V118.1M1163 101.6V113.1M1164 103.4V117.2M1165 105.6V114.9M1166 102.5v0M1166 105V115.4M1167 104.4V117.2M1168 104.5V116.4M1169 102.6v0M1169 105V118.1M1170 100.3V110.2M1170 115.8v0M1171 102.2V113.6M1172 101.8V115.2M1172 117.8v0M1173 104.4V116.1M1174 104.9V115.8M1175 102.9V115.5M1176 105.1V118.8M1177 105.4V117M1177 119.4v0M1178 103.6V114.5M1179 102.2V113.8M1179 116.7v0M1180 104.1V114.9M1180 117.8v0M1181 99.1V115.3M1182 100.4V111.6M1182 113.9V116M1183 104.5V115.1M1184 104.1V118.3M1185 106V117.1M1186 103.5V113.3M1186 116.4v0M1186 118.8v0M1187 102.9V121.7M1188 109.2V120M1189 107.2V121.9M1190 106.3V120.6M1191 110.3V119.2M1191 123V124.9M1192 106.5V122.8M1193 108.4V119.1M1193 121.6v0M1194 100v0M1194 103.4V116.1M1194 118.8v0M1195 99.7v0M1195 105.5V118.8M1196 104.5V116.6M1196 118.9V120.4M1197 101.3V107.4M1197 110.5V115M1197 117.5V119.1M1197 122.1v0M1198 99.3V103.5M1198 106.2V107M1198 110.4V111M1198 113.5V116.8M1198 119.1v0M1199 107.7V121.6M1200 106.5V121.1M1201 102.7V116.1M1202 103.5v0M1202 107.3V119.9M1203 104.7V119.9M1204 108.3V121.4M1205 108.8V122M1206 107.3V120.4M1207 101.3V103.3M1207 107.4V117.4M1207 120.6v0M1208 106.4V120.3M1209 101.4V102.8M1209 105.3V117.8M1210 99.2v0M1210 102.5V117.6M1211 105.1V118.7M1211 120.9V122.8M1212 108.3V123.1M1213 108.5V122M1214 107.8V122.4M1215 106.7V117M1216 106.9V119M1217 102.3V116M1217 118.8v0M1218 100.2V101.8M1218 107.2v0M1218 109.8V111.4M1219 100V102.4M1219 105.2V119.3M1220 102.2V105.8M1220 108.8V120.5M1221 104.9V117.5M1221 119.9v0M1221 122.1v0M1222 105.9v0M1222 108.7V118.8M1223 105.5V119M1223 121.3v0M1224 106.1V120.4M1225 105.6V121.9M1226 101.1V116.4M1227 99.3V101.8M1227 104.5V114.5M1227 118.8v0M1228 99.4V101.5M1228 104.5V115.1M1228 118V119.2M1228 122.4v0M1229 102.8V116.8M1230 106.5v0M1230 108.9V122.9M1231 105.1v0M1231 108.7V121.8M1231 126v0M1232 100V102.2M1232 104.6V116.9M1232 120.1v0M1232 123.5v0M1233 100.9V112.4M1233 114.8V119.3M1234 104.3V119.5M1234 124.3v0M1235 108.1v0M1235 112V121.6M1236 106.6V120.2M1237 105.9V119.4M1238 105.4V107M1238 109.4V118.9M1239 107.3V118.2M1240 104.5v0M1240 106.9V120.4M1241 106v0M1241 108.6V121.8M1242 104.2v0M1242 106.5V119.5M1243 102.3V118.4M1244 105.7V120.5M1245 108V121.9M1246 107V121.4M1247 107.9V121.3M1248 106.6v0M1248 109.5V123.6M1249 102.5V104.6M1249 107.1V117.7M1250 102.6V115.6M1251 107.3V120M1252 105.9V121.3M1253 99.5v0M1253 101.9V117.5M1254 102V118.6M1255 102.3V114.5M1255 119.1v0M1256 108.4V120.9M1257 107.4V122.1M1258 99.5v0M1258 102.9V120.5M1259 104.2v0M1259 108.2V123.7M1260 107.2V107.9M1260 110.4V120.3M1261 109.2V124.4M1262 101.9V118.8M1263 105.2V119.4M1264 106.5v0M1264 109.5V118.9M1265 103.8V105.6M1265 107.9V119.8M1266 107.9V118.6M1266 121.5v0M1267 102.2v0M1267 105V116.7M1267 119.2V120.8M1268 103.9V117.9M1269 100.4V106.7M1269 109.8v0M1269 115.5V118.8M1270 99.5V115.6M1270 117.9v0M1271 106.1V119.2M1271 123.8V125.3M1272 105.8V120.5M1273 109.2V124.8M1274 108V121.8M1275 106.4V121.1M1276 102.1v0M1276 105.1V120M1277 99.1V116.7M1277 119.1V120.2M1278 99.3v0M1278 103.3V120M1279 105.3v0M1279 108.5V121.1M1280 107.2V107.9M1280 110.1V120.1M1281 106.5v0M1281 109.3V122.8M1282 105.8V116.7M1283 99V103.3M1283 105.9V118.7M1283 121v0M1284 99.2V110.9M1284 113.2v0M1284 116.3V118M1285 101.4V121.1M1286 105V119M1287 106.3V121.5M1288 99.7V112.2M1288 115V117.8M1288 120.1v0M1289 99.6V107.1M1289 109.5V111.6M1289 117.9v0M1290 101.1V118.8M1290 122.6v0M1291 107.2v0M1291 111.5V123.2M1291 127.2v0M1292 107.2V121.8M1293 105.3v0M1293 110V116.2M1293 118.4V119M1294 106.2V119.8M1295 105.5V120.8M1296 105.2V117.5M1296 120.3V121.3M1297 101.5V115.8M1298 99.4V100.7M1298 104.4V118.7M1299 102.5V103.2M1299 105.8v0M1299 108.9V111.8M1299 114.7V117.2M1300 103.6V120.3M1301 104.9V117.8M1301 120.3v0M1302 108.4v0M1302 111.3V122.6M1302 125.6v0M1303 107.7V118.6M180.4 130.5v0M290.5 130.9v0M294.3 128.1v0M252.4 121.2v0M284.4 122.6v0M288.9 124.2v0M651.3 125.2v0M644.7 123.1v0M680.4 123.6v0M709 123.5v0M729.5 123.6v0M845.5 124v0M886.5 123.1v0M906 123.2v0M1218.4 126.1v0M1239.5 127.7v0M1244 127.1v0M1247.5 126.1v0M810 121.4v0M881.5 122v0" stroke="#000"/>
</g>
<g clip-path="url(#c1)">
<path d="M162.2 321.5V35.5M318.8 321.5V35.5M421.7 321.5V35.5M523.9 321.5V35.5M627.1 321.5V35.5M728.9 321.5V35.5M832.1 321.5V35.5M934.8 321.5V35.5M1072.1 321.5V35.5M1187.1 321.5V35.5M1303.1 321.5V35.5" stroke="#800080" stroke-width="2.08" stroke-dasharray="2.08 3.44" stroke-dashoffset="-0.6" fill="none"/>
<path d="M105.5 137.6H1361" stroke="#008000" stroke-width="2.08" fill="none"/>
</g>
<text x="240.5" y="312" font-size="13.889" text-anchor="middle">6325</text>
<text x="370.2" y="292" font-size="13.889" text-anchor="middle">6319</text>
<text x="472.8" y="272" font-size="13.889" text-anchor="middle">6320</text>
<text x="575.5" y="312" font-size="13.889" text-anchor="middle">6321</text>
<text x="678" y="292" font-size="13.889" text-anchor="middle">6322</text>
<text x="780.5" y="272" font-size="13.889" text-anchor="middle">6323</text>
<text x="883.5" y="312" font-size="13.889" text-anchor="middle">6324</text>
<text x="1003.4" y="292" font-size="13.889" text-anchor="middle">6281</text>
<text x="1129.6" y="272" font-size="13.889" text-anchor="middle">6330</text>
<text x="1245.1" y="312" font-size="13.889" text-anchor="middle">6331</text>
<rect x="105.5" y="35.5" width="1380" height="286" fill="none" stroke="#000" stroke-width="1.11"/>
<text x="162.5" y="341.8" font-size="13.889" text-anchor="middle">0</text>
<text x="455.3" y="341.8" font-size="13.889" text-anchor="middle">10000</text>
<text x="748" y="341.8" font-size="13.889" text-anchor="middle">20000</text>
<text x="1040.7" y="341.8" font-size="13.889" text-anchor="middle">30000</text>
<text x="1333.5" y="341.8" font-size="13.889" text-anchor="middle">40000</text>
<path d="M162.5 321.5v4.9M455.5 321.5v4.9M747.5 321.5v4.9M1040.5 321.5v4.9M1333.5 321.5v4.9" stroke="#000" stroke-width="1.11" fill="none"/>
<text x="95.8" y="310.4" font-size="13.889" text-anchor="end">9.4</text>
<text x="95.8" y="271.6" font-size="13.889" text-anchor="end">9.6</text>
<text x="95.8" y="232.8" font-size="13.889" text-anchor="end">9.8</text>
<text x="95.8" y="194" font-size="13.889" text-anchor="end">10.0</text>
<text x="95.8" y="155.2" font-size="13.889" text-anchor="end">10.2</text>
<text x="95.8" y="116.4" font-size="13.889" text-anchor="end">10.4</text>
<text x="95.8" y="77.6" font-size="13.889" text-anchor="end">10.6</text>
<path d="M105.5 305.5h-4.9M105.5 266.5h-4.9M105.5 227.5h-4.9M105.5 188.5h-4.9M105.5 149.5h-4.9M105.5 111.5h-4.9M105.5 72.5h-4.9" stroke="#000" stroke-width="1.11" fill="none"/>
<text x="795" y="27.2" font-size="16.667" text-anchor="middle">AGASC ID 727320712.0</text>
<rect x="1348.5" y="247.5" width="130" height="67" rx="2.8" fill="#fff" fill-opacity="0.8" stroke="#ccc" stroke-opacity="0.8" stroke-width="1.39"/>
<circle cx="1367.5" cy="260.5" r="2.08" fill="#f00"/>
<circle cx="1367.5" cy="281.3" r="2.08" fill="#ffa500"/>
<circle cx="1367.5" cy="302.3" r="2.08" fill="#000"/>
<text x="1392.5" y="263.8" font-size="13.889" text-anchor="start">not OK</text>
<text x="1392.5" y="284.7" font-size="13.889" text-anchor="start">Highlighted</text>
<text x="1392.5" y="305.7" font-size="13.889" text-anchor="start">OK</text>
<rect x="1361.3" y="42.3" width="117.4" height="27.2" rx="2.8" fill="#fff" fill-opacity="0.8" stroke="#ccc" stroke-opacity="0.8" stroke-width="1.39"/>
<path d="M1367.2 53.8H1395" stroke="#008000" stroke-width="2.08" stroke-linecap="square"/>
<text x="1407.7" y="58.5" font-size="13.889">mag<tspan font-size="9.72" font-style="oblique" dx="0.3" dy="2.0">AGASC</tspan></text>
<g clip-path="url(#c2)" fill="none" stroke-linecap="round" stroke-width="4.17">
<path d="M164 382.2V383.1M164 385.9v0M164 393.9V395M164 404.7v0M185 387.3v0M185 391.6V393.6M185 396.1V400.4M185 403.2v0M186 390.7V392.8M186 396.4v0M186 404.6v0M187 383.4v0M187 393V395.6M187 402.9v0M196 385.8v0M206 385v0M206 391.1v0M206 398.8v0M206 401.2v0M207 382.9v0M207 389.5v0M207 402v0M207 404.6v0M215 382.5V383.5M215 388.8v0M215 392.6v0M225 402.9v0M236 395.6V396.6M236 399.5V403.2M257 402.3v0M277 386.5V388.1M277 393.9V399.5M286 384.4v0M286 387.7v0M286 393.6v0M286 396.2V398.1M286 403.8v0M296 400v0M306 384.2V386.3M306 390.6V393.1M306 398.2V400.3M307 400.1V401.1M324 481.4V482.7M324 486.1v0M324 492.5V496.2M330 492.5v0M330 496.8v0M331 495.4v0M341 468.8v0M341 478.9v0M341 483.5v0M341 492.8V493.7M341 496.2V497M344 485.9v0M344 491.2v0M344 494.6V496.3M345 494.9v0M354 474.4v0M354 478.4V480.7M354 487.3v0M354 490.1V493.8M354 496.5v0M371 488.3v0M371 490.9v0M371 496.4v0M372 478.7v0M372 484.8v0M372 488.2v0M372 490.5V493M376 490.3v0M376 496.8v0M382 473.1v0M382 476.2V477.9M382 480.9v0M382 483.6v0M382 487.3v0M382 490.7V492.9M382 496.4v0M384 491V493.3M385 484.9v0M385 488.8v0M385 493V493.8M401 483.4v0M401 495V496.2M412 474.9v0M412 478.8V480.1M412 484.1v0M412 489.5V490.3M412 493.5V494.2M412 496.6v0M415 470.7v0M415 479.6v0M415 483.3v0M415 490.6V496.9M460 486.5V487.6M474 485.2v0M482 487.1v0M484 485.7v0M496 484.1v0M497 485.4v0M505 487.7v0M512 486.6v0M515 484.1V486M516 480.7v0M516 484.8v0M527 452.5V454.7M534 456.9v0M535 421.4v0M535 426.6v0M535 430.6v0M535 435.8V437.4M535 441.1V443.9M535 447.8V452.6M535 457v0M536 455.9v0M544 422.7v0M544 426.8v0M544 432.2v0M544 437.7v0M544 440.9V442.6M544 445.6v0M544 449.1V455.8M553 436.6v0M553 441.1V442M553 447.4V451.9M553 454.7V456.6M567 444.8V446.7M567 449.6v0M567 453.3v0M577 426.8v0M577 429.3v0M577 432v0M577 434.5V437.1M577 439.3V444.9M577 451.9v0M577 455.4V456.4M587 430.8v0M587 439.5V442.8M587 446.6v0M587 449.5V453.2M587 455.6v0M595 436.6v0M595 438.8v0M595 441.1v0M595 445.8V447.3M595 451.7V456.2M605 419.5v0M605 426.1v0M605 429.6V430.3M605 433V441.3M605 444V449.5M605 452.1V454.9M614 417v0M614 422.6v0M614 429.3V430.5M614 434.2v0M614 441.3v0M614 443.7v0M614 450.7v0M614 454.4V456.5M615 422.3v0M615 425.2v0M615 433.2V434.9M615 438.9v0M615 442.2v0M615 447.1v0M615 454V455.3M624 436.3V437.2M624 443.1v0M624 447.7V448.6M624 454.8V457M733 446.5v0M733 462.8v0M733 468v0M733 472.4V473.3M734 448.6v0M734 459.9V461.7M734 464.1V467.6M734 471.8V473.3M743 471.5v0M753 456.2v0M753 465.3v0M753 469.8V471.5M754 455.2v0M754 462.9v0M754 468.5V472.1M763 460.2v0M763 464.3v0M763 468.4V472.7M763 475.2v0M772 466.6v0M772 469.4v0M772 471.9v0M773 462.2v0M773 465.1v0M773 467.9v0M773 471.6V472.2M782 475.7v0M783 456.8v0M783 461.7V463.5M783 467V475.1M792 460.1v0M792 463.5v0M792 465.8v0M792 469.5v0M793 467.1V468.5M804 460.5v0M804 464.1v0M804 472.2v0M804 474.7V475.5M805 465v0M805 473.7v0M815 466.8v0M815 470.4v0M816 464.4v0M816 471.7v0M824 465.1V467.4M824 471.5V473.8M825 451.5V455.8M825 458.1v0M825 462.3v0M825 467.2V468M825 472.6V475.9M839 449.1v0M840 454.2v0M854 437.5V441.3M854 444.8v0M854 451.6V454.9M855 453.2v0M895 429.2v0M895 440.9V441.9M895 444.2V446.5M895 448.7v0M895 455.3v0M896 418.3V426.7M896 430.8v0M896 434.1V434.9M896 439V440.8M896 443.2V445.2M896 448.9V449.6M896 453.1v0M925 426v0M925 429.1V430.6M925 436.8V442.6M925 445.7V449.3M925 453.3v0M925 455.6v0M926 448.2v0M926 451.3v0M935 457.8v0M935 463.5v0M935 466.5v0M935 475.9v0M935 482.5v0M936 388.6v0M936 398V400.4M936 403.4V407.9M936 412.1v0M936 414.7V415.8M936 418.2v0M936 422.2v0M936 431.4V433.3M936 439.5V440.6M936 449.7V451.7M936 456.8v0M937 449.5V450.4M937 462.7v0M937 473.1v0M937 475.7V476.7M947 457.8v0M947 467.4V468.8M947 471.5v0M947 479.4v0M947 483.9v0M948 402.7V406.3M948 410.8v0M948 415.5V422.5M948 425v0M948 433.8V435.1M948 438V439.8M948 442.4v0M948 452.9v0M948 456.1v0M949 436.4v0M949 445.5v0M949 455.5V456.6M949 466.2v0M949 469.9v0M949 482v0M964 449.6v0M964 454.1V455.2M964 464.8v0M964 476.7v0M964 480v0M965 394.1V395.2M965 398.5v0M965 401.6v0M965 405.5V413.3M965 416.2v0M965 422v0M965 424.6V426.3M965 434.5v0M965 441.2V442.6M965 448.2v0M965 454.3V455.4M966 445.8v0M966 455.2v0M966 461.4v0M966 466.8v0M977 397.4v0M977 400.9v0M977 407.4v0M977 412.7v0M977 428v0M977 433.4V434.7M977 439.6v0M977 446V446.9M977 453.8v0M977 463.7v0M977 473.3v0M977 476.1v0M977 478.8v0M978 399v0M978 402.2V403.7M978 409.2v0M978 411.9V418M978 426.4v0M978 430.1v0M978 440.2v0M978 448.4V449.4M978 453.8v0M978 461.2v0M978 468.7v0M978 472.5v0M978 481.9v0M1006 463.9v0M1006 471.7v0M1006 478.2v0M1007 409.1v0M1007 414V416.1M1007 419.8V425.3M1007 431.8v0M1007 440V447.8M1007 450.1V452.5M1007 470.8v0M1008 454.9v0M1008 460.9v0M1008 479.5v0M1019 453.1v0M1019 457.2V458.9M1019 462.5V463.2M1019 465.7v0M1019 468V472.3M1019 474.6v0M1019 477.1V479.2M1019 481.8v0M1036 430.6v0M1036 434.8V435.9M1036 452.8v0M1036 455.6V457.2M1036 467.3v0M1036 471.5v0M1036 477.2v0M1036 482v0M1037 405.9v0M1037 413.9v0M1037 421.7v0M1037 424.3V426.5M1037 430.5v0M1037 434.9V436.1M1037 439.1v0M1037 441.6V443.6M1037 447.4v0M1037 452.2v0M1037 454.7V455.7M1037 465.3V466.9M1037 474.3v0M1048 472.9v0M1048 481.4v0M1049 392.4v0M1049 400.5V414.4M1049 420v0M1049 422.7v0M1049 425.8V427.9M1049 432.4v0M1049 437.2v0M1049 449.1v0M1049 460.4v0M1049 472v0M1050 405.7v0M1050 419.7v0M1050 427.4v0M1050 434.1v0M1050 445.8v0M1050 457.9v0M1050 470.3V471.9M1050 474.9v0M1050 477.9v0M1050 481.7v0M1102 492.3v0M1103 493v0M1120 490v0M1121 490.5v0M1146 487.1V488.2M1146 492.3v0M1147 488.6v0M1157 492.1v0M1170 485.8v0M1170 492.1V492.8M1197 446.8v0M1197 458.1V459.8M1197 466.6v0M1197 473v0M1197 477.9V480.7M1197 486.6V491.4M1198 447.2v0M1198 452.4v0M1198 455V456.1M1198 458.9V460.2M1198 465.6v0M1198 471.1v0M1198 477.8v0M1198 484.1V487.9M1198 492.5v0M1218 444.4V446.6M1218 450v0M1218 456.7v0M1218 460.8V463.2M1218 466.4v0M1218 470.5v0M1218 473.7v0M1218 477v0M1218 480.3V486.7M1218 492.3V493.5M1219 462v0M1219 474.3v0M1219 479.9v0M1219 483.1v0M1219 486.1v0M1219 492.3v0M1227 447.7v0M1227 454.9V458M1227 460.8v0M1227 470.4v0M1227 472.7v0M1227 476.2V478.2M1227 482.3v0M1227 486.6v0M1227 491.8V493.4M1228 450.2v0M1228 452.9v0M1228 458.8V461.2M1228 463.9v0M1228 468.7V469.7M1228 480.8V482.4M1228 489.5v0M1232 492.3v0M1233 483v0M1233 492v0M1253 490.8v0M1269 461.6v0M1269 466.7v0M1269 470v0M1269 472.6V474.2M1269 478.7v0M1269 486.7V490.8M1270 454.4v0M1270 467.1V468.5M1270 482.1v0M1270 487.7v0M1278 491.9v0M1283 477.5V478.8M1283 490.5V492M1284 477.7v0M1284 482.7V485.7M1284 488.9v0M1288 460.7v0M1288 467.1V470.4M1288 475.4v0M1288 478.2v0M1288 485.5v0M1288 489.2V490.2M1289 451.6v0M1289 457.5V460.5M1289 466.4V472.5M1289 478V480.4M1289 483.4v0M1289 487.1v0M1298 449.1v0M1298 465.3V466.8M1298 471.8v0M1298 487v0M1299 446.4v0M1299 453V459M1299 466.3v0M1299 469.5V470.8M1299 476.6v0M1299 478.9V480M1299 482.2V487M1299 490.6V492.1M190.3 614.4v0M374.5 613.3v0M377.5 644.5v0M379.9 572.5v0M378 572.5v0M424.4 648.5v0M457.5 587.5v0M460.4 563.5v0M479.6 637.3v0M508.4 639.5v0M509.2 560v0M509.2 563.5v0M520.7 563.5v0M523.3 558.7v0M547.3 636.5v0M535.3 669.3v0M574.3 647.5v0M579.3 593.3v0M598.5 620.5v0M611.3 589.3v0M668.4 625.3v0M768.4 620.5v0M851.3 625.3v0M905.5 593.3v0M557.5 669.3v0M835.3 668.3v0M975.5 585.3v0M1038.1 584.8v0M1037.2 584.3v0M1095.2 575.2v0M1115.5 574.4v0M1116.5 582.4v0M1166.1 576.3v0M1250.4 589.3v0M1302.1 589.3v0M423.4 474.3v0M428.3 475.3v0M431.5 482.4v0M439.3 471v0M446 485.3v0M457 483.4v0M459.3 481.3v0M468.4 480.5v0M470.3 485.3v0M484.6 487v0M489 482.9v0M499.5 464.3v0M499.1 483.7v0M504.3 479.3v0M1078.3 474.2v0M1072.2 483v0M1075 490.6v0M1104.2 481.9v0M1104.2 488.4v0M1108.6 491.3v0M1118.4 475.3v0M1117.8 487.3v0M1134.9 473.1v0M1134.5 483v0M1135.3 489.5v0M1149.3 474.6v0M1148.6 483v0M1147.1 488.4v0M1164 485.8v0M1164 490.6v0" stroke="#ffa500"/>
<path d="M162 491v0M162 506.4v0M162 521.6v0M162 527V528.4M162 530.7v0M162 532.9V534.7M163 470.9V472.4M163 481v0M163 484.7V486.2M163 488.5v0M163 493.7V498.4M163 501V503M163 510.5v0M163 512.7V515.6M163 517.9v0M163 522V526.3M163 529.4V530.6M163 534.5v0M163 538.6V540M163 542.8v0M164 405.7v0M164 410.9v0M164 424V425.2M164 436.2V437.3M164 444.3v0M164 448.7V452M164 459v0M164 467.4v0M164 470.2V471.4M164 490.2v0M164 492.9v0M164 528.1V529.9M164 532.7v0M164 538.2v0M165 407.5v0M165 414.1v0M165 431.5V434.4M165 437.7V441.7M165 459.9V461.9M165 470V471.5M165 477.8v0M165 483.5V485.2M165 496.7V499.4M165 505.3V506.2M165 509V512.3M165 516.4v0M165 520.8v0M165 529.1v0M165 534.3v0M165 538.6v0M166 485.5V493.8M166 498.2V512.4M166 515.2V519.1M166 524V525M166 536.6v0M167 490.5v0M167 497.2v0M167 502.9V506.6M167 511.2v0M167 515.1V519.4M167 521.7V527.3M167 529.8v0M167 532.3V536.1M167 544v0M167 546.9V547.9M167 551.8V554.5M167 562.2v0M167 565.6v0M168 450.7v0M168 454.3v0M168 459.5v0M168 462.2V463.4M168 474.8v0M168 477.8V483.7M168 487v0M168 489.6V491.1M168 497.1V497.8M168 504.4v0M168 506.9v0M168 517.6v0M168 521v0M168 528.2V529.3M168 534.2v0M168 544.5v0M168 548.5v0M169 484.3v0M169 493v0M169 498.6V501M169 504.1V508.1M169 511.6V514.8M169 518.9V521M169 524V529.6M169 531.8V533.7M169 541v0M169 544.4v0M170 496.7v0M170 501.6v0M170 505.8v0M170 510.4v0M170 514.4V528.3M170 531.1V532.6M170 538.8v0M170 541.8V546.1M170 551.4V552.3M170 556.6v0M171 518.3v0M171 521.3V522.8M171 525.8V531.3M171 535.5V553.9M171 556.4V565M172 499.6v0M172 501.9V503.6M172 515.8V516.4M172 519.7V521.7M172 524.1V527.9M172 530.4v0M172 532.8V533.9M172 536.2V538.9M172 541.8V545.2M172 547.9V549.7M172 555.6v0M173 505.4v0M173 508.6V511.7M173 514.5V515.4M173 518.8v0M173 521.4V523.8M173 526.6V528.4M173 530.6V535.4M173 540.4V543.7M174 513.5V514.4M174 517.8V519.1M174 521.3V523.1M174 525.6V535.4M174 537.8V545.3M175 508.4v0M175 513.9V514.7M175 523.3V525.8M175 528.4V533.6M175 536.7V539.3M175 541.9v0M175 544.4V548.7M175 552.1V555.7M175 558.5v0M176 497.3v0M176 500V505M176 507.3V508.1M176 513.2V514.1M176 518.1v0M176 520.7V525.4M176 528v0M176 530.6V532.8M176 535v0M176 537.5V540.5M176 546V548M176 555.4v0M177 462.9v0M177 470.5v0M177 476.3v0M177 479.8v0M177 485.6V486.7M177 495.6V505.9M177 509.4v0M177 513.1V516.9M177 519.1v0M177 524.4v0M177 527v0M177 529.5V530.4M177 533.5V535.9M177 538.7v0M177 541.1v0M178 474.5v0M178 485V485.7M178 492.7v0M178 496.4V499.8M178 504.3v0M178 508V512.3M178 514.6V520.2M178 524.5V526.4M178 528.9v0M178 531.5V535.2M178 539.3v0M178 562.8v0M179 515.9v0M179 522V522.6M179 525.4v0M179 528V540.4M179 544.1v0M179 547.1V552.5M179 557.3V560.7M180 511.8V513.2M180 518.5V521M180 523.5V531.1M180 533.9v0M180 536.4V539M180 541.6V545.4M180 548.8V552.6M181 497.4v0M181 503.8v0M181 508.7V510M181 512.9v0M181 515.4V519M181 523.3V528.2M181 530.8v0M181 533.3V534.2M181 536.7v0M181 541.3V543.6M181 546v0M182 500v0M182 507.7V519.6M182 523.7V527.6M182 531.1v0M182 533.6V535.7M182 538.8v0M182 541.3v0M182 546.3V547.9M183 503.1v0M183 505.6V507.2M183 510.5v0M183 518.9V522.2M183 525V530.4M183 532.6V534.8M183 537.7V544.3M183 551.3v0M183 554.5V556.6M184 466.7v0M184 469.5v0M184 474.1v0M184 479.2v0M184 485.2v0M184 489.5v0M184 492.2V501.6M184 505.8v0M184 508.1v0M184 511.6v0M184 514.6v0M184 523.5V528.6M184 541.2v0M185 406.4v0M185 414.1v0M185 419.8V422.5M185 427.7v0M185 438.8v0M185 443.5v0M185 458.6V461M185 465.6V467.2M185 506.3v0M185 514.3v0M185 522.1v0M185 531.8v0M185 537.3v0M185 546.8v0M186 405.5v0M186 420.4v0M186 424V425M186 427.8v0M186 430.4v0M186 434.1v0M186 439V440.5M186 444v0M186 449.3v0M186 453.3v0M186 457.5V460.5M186 466.5V468M186 473.9v0M186 476.7v0M186 484.6V485.9M186 493.1v0M186 522.3v0M186 527.4V529M186 532.3V533.7M186 539.8v0M186 544.9v0M186 551v0M187 411.7v0M187 418.1V419.5M187 424.5V425.3M187 428.1v0M187 433.5v0M187 439.9V440.6M187 445.8v0M187 450.4v0M187 460.6v0M187 463.5v0M187 470.4V471.7M187 478.7v0M187 481.8v0M187 484v0M187 490.5V492M187 513.5v0M187 534v0M187 542.3v0M188 467.9v0M188 476.2v0M188 480.8V482.9M188 489.6V493.3M188 497.9V500.9M188 503.6v0M188 506.5V510.2M188 512.7V514M188 516.9v0M188 524V527.9M188 531.1V535.7M188 549v0M189 501.2v0M189 504.6V509.4M189 511.8V513.3M189 516V523.7M189 526.5V529.7M189 533.9V536.1M189 541.8v0M189 544.5V545.6M190 482.5v0M190 486.9v0M190 491.2V493.1M190 496.1V508.5M190 510.9v0M190 513.5v0M190 515.8V520.4M190 523.2V523.9M190 537.1V538M190 542.5V543.2M190 549.1v0M191 441.1v0M191 450.4v0M191 455.9v0M191 458.8V462.1M191 464.6v0M191 468V472.8M191 477.5V480.5M191 483.7v0M191 489.6V492.4M191 496.7v0M191 506.8v0M191 510.7V512.3M191 514.8v0M191 518.1V519.3M191 531.5V533.3M191 545.3V547.4M192 470.8v0M192 474.2V474.9M192 488.1v0M192 490.5V491.9M192 498V499.2M192 504.3V509.1M192 512V514.9M192 518.3v0M192 521.3V523.2M192 527.3V530M192 533.5v0M192 540.1v0M192 545.6v0M192 554v0M193 447v0M193 457.4V459.4M193 463v0M193 471.7v0M193 477.6v0M193 480.9v0M193 484.6v0M193 491.4V498.8M193 505.8V507.7M193 511.4V513.9M193 517.5V523.9M193 529v0M193 531.9V533.7M194 441.3v0M194 445.4v0M194 452.1V453.7M194 457.7V459.3M194 461.8V463.7M194 474V476.8M194 481.2V484.6M194 492v0M194 494.9v0M194 497.8V499M194 502.1v0M194 510.5V512.5M194 522.1v0M194 535.1v0M194 544.1v0M195 428.8v0M195 440.5v0M195 451.5v0M195 457.3V459.1M195 462V462.9M195 468.2v0M195 471.5v0M195 475.2v0M195 482.3v0M195 485.5V491.1M195 493.8V494.8M195 500.7v0M195 505v0M195 516.5v0M195 519v0M195 529.1v0M195 534.1v0M195 537.7v0M195 544.5v0M195 556.1V557.2M195 564.4v0M196 405.7v0M196 416.5v0M196 419.7v0M196 426.2v0M196 428.5V431.4M196 437.9v0M196 443.1v0M196 446.5V448.5M196 460.8v0M196 463.5v0M196 465.7v0M196 470.9v0M196 473.9v0M196 483.5v0M196 490.4V494M196 503.2v0M196 508.2v0M196 517.3V518.7M196 527.4v0M196 532.1v0M196 535.2v0M196 542.2v0M196 547.3v0M197 438.3v0M197 453V457M197 461.6V463.2M197 467.5V468.9M197 471.5v0M197 474.9v0M197 479.5V480.6M197 487.3v0M197 497.9v0M197 502.7v0M197 514.3V517.8M197 525.2V526.7M197 534.7v0M197 539.9v0M197 543.5V546.1M197 548.9V551.5M198 471.2v0M198 484.4V485.4M198 496.3V497.1M198 500.8V501.7M198 505.2v0M198 508.2V511.4M198 513.8v0M198 516.1V518.9M198 523.5v0M198 525.9V526.6M198 530.3v0M198 532.8v0M198 536.4V539.1M198 542.3V544.2M198 548.6v0M199 473.8v0M199 481.2v0M199 494.5v0M199 498.2V499.9M199 503V505.3M199 508.5v0M199 512.9v0M199 516.1V529.8M199 532.3V538M199 541.6v0M199 548.2v0M200 505.6v0M200 509.2v0M200 513.5v0M200 516.2V519.7M200 522.4V526.2M200 529.2V537.2M200 540.3V541M200 543.6v0M200 546.3v0M201 462.9v0M201 467.4V468.9M201 471.6v0M201 474v0M201 482.6V484.1M201 494.1v0M201 499.6v0M201 503.5v0M201 506.2v0M201 511.4V513.5M201 519.8V527.2M201 532V544.2M202 454.4v0M202 463.3v0M202 469.4v0M202 473.7v0M202 489v0M202 494.3V495.5M202 498.1v0M202 500.7v0M202 510.2V517.3M202 521.2V525.1M202 529.1V530.5M202 533.2v0M202 536.1v0M202 538.7V540.8M202 555.7V556.5M202 561.2V563.3M203 444.9V446.1M203 457V459.3M203 462.6V463.5M203 468.5V470.5M203 473.3V476.7M203 479.2V479.9M203 482.8v0M203 488.4v0M203 491.9V493.7M203 497.1v0M203 505.7V507.1M203 510.5V511.2M203 520.3V521.2M203 524.3v0M203 530V531.4M203 541.6v0M203 545.3v0M203 554.7v0M204 484.4v0M204 490.2v0M204 492.8V494M204 500.3V503.7M204 506.4v0M204 510.1V515.4M204 517.8V523.6M204 525.8V531.7M204 538.7v0M204 542.3v0M204 558.9v0M205 486.8V495.9M205 500.9V502.3M205 506.3V508.1M205 515.9v0M205 518.6V523.8M205 527.1v0M205 529.5v0M205 532.4V538.2M205 548.8V550.8M206 412.2v0M206 419v0M206 427.4V429.6M206 436V437.7M206 439.9v0M206 445.3V446.8M206 449.8v0M206 455.4V456.9M206 463.2V464.6M206 468v0M206 470.7v0M206 476.9v0M206 485V486.1M206 513.3v0M206 517.4v0M206 523.5V525.6M206 531v0M207 406.6V407.4M207 412.8v0M207 429.1v0M207 440.8v0M207 445.3v0M207 448.7v0M207 451.6V453.7M207 458.5v0M207 467.9V470.8M207 474v0M207 478.1v0M207 482.4V486.6M207 489.4V492.4M207 501v0M207 508.2v0M207 517.6v0M207 526.2v0M207 533.7v0M208 489.4v0M208 494.3v0M208 498.9v0M208 507.7v0M208 511v0M208 513.8V517.2M208 520.4V522.5M208 526.2V531.6M208 536.2v0M208 538.7V539.8M208 553.6V555.1M209 496.1v0M209 500.7v0M209 508.4V512.5M209 515.2V527.9M209 531.9V533.5M209 539.1v0M210 495.7v0M210 500v0M210 503.4v0M210 505.6v0M210 508.1V511.6M210 516.3V525.1M210 527.8V531.2M210 533.6V535M210 538v0M211 474v0M211 481.6v0M211 486.7V487.5M211 491.6V495.2M211 499V505.6M211 507.9V515.9M211 519v0M211 524v0M211 528.6v0M211 531.2v0M211 537.7v0M212 493v0M212 495.6v0M212 502.9V507.7M212 510.5V516M212 518.5V530.2M212 533.6v0M212 537.9v0M212 551.4v0M213 491.2V495.3M213 500.6v0M213 505.3V508.7M213 511.2V515.8M213 518.2V523M213 529.1V530.3M213 533.2v0M213 537.9V542.2M213 550.3V551.4M214 446.7v0M214 450.7v0M214 453.2V455.2M214 461.9v0M214 465.5V468.4M214 472.8v0M214 475.2V475.9M214 478.5V479.2M214 481.8v0M214 487.1v0M214 491V492.5M214 495.9V497.3M214 500.4v0M214 507.6v0M214 510.2V512.7M214 515.5v0M214 518.3v0M214 524.9V526M214 531.3v0M214 549.2v0M215 406.2v0M215 410V417.4M215 420.8v0M215 423.3v0M215 427.4V431.5M215 434.8v0M215 443.7V445.9M215 455.3v0M215 472.6v0M215 519.5v0M215 522.9V525M215 531.1v0M215 534.5v0M215 545.4v0M216 438.3v0M216 458.8v0M216 461.1v0M216 468V469.4M216 471.7v0M216 474.4V475.9M216 481.5V487.5M216 496.9v0M216 500.6V504.2M216 506.7v0M216 509V510.3M216 513.8v0M216 518.9v0M216 521.1v0M216 525.1v0M216 529v0M216 531.5v0M216 539.1v0M217 500.6V508.9M217 512.2V515.2M217 519V532.5M217 535.8V536.6M217 541.1v0M217 544.4v0M218 501V502.1M218 511.4V517.2M218 519.9V522.8M218 526.5V539.9M218 543.1v0M219 490.2v0M219 495.7v0M219 498.7V500.2M219 504.3V518.7M219 521.3v0M219 523.6v0M219 526v0M219 531.1V531.8M219 536.1v0M220 474.5V490.6M220 494V496.6M220 500.2V502.1M220 509.8v0M220 513V514M220 529.2v0M220 534.4V539.1M220 547v0M220 549.7v0M221 500.7v0M221 504.1V507.3M221 509.8V514.6M221 516.9V519M221 522.4V524.3M221 529.2V535.3M221 538.4v0M222 506.4v0M222 508.8V528.9M222 531.9V533.7M222 537.9v0M223 498.5V500.3M223 502.6v0M223 506.1V513.9M223 516.3V519.9M223 524V531M223 535.7V536.5M223 539.4v0M224 468.8v0M224 473v0M224 475.2v0M224 487.2V488.5M224 490.8v0M224 496.4V503.6M224 506.1V508.9M224 513.5v0M224 517.5V518.9M224 524.2v0M224 527.5v0M224 532.7v0M224 535.8v0M224 543.8v0M225 405v0M225 413.5v0M225 416.5V418.7M225 426.4v0M225 428.9V430.4M225 432.8V436.1M225 443.1V444.7M225 449.4V451.2M225 454.9V457.6M225 461.6V462.5M225 464.9v0M225 472.8v0M225 475.1V475.8M225 483.8v0M225 512.6v0M225 525v0M225 529.6v0M225 539.2V540.4M225 543.6v0M226 456.3v0M226 463.2v0M226 478.5V479.6M226 484.8V487.6M226 491.7V494.5M226 501.9V508.6M226 512.3v0M226 515.4V521.9M226 524.7V526.4M226 529.1v0M226 533.6v0M226 539.4v0M227 502.9v0M227 507.4v0M227 511.8V514.7M227 523.3V536.9M227 541.9V543.7M227 550.3v0M227 553v0M227 565.7v0M227 569.5v0M228 481.2v0M228 488.7v0M228 493.6V495.1M228 500.8v0M228 503.8V505.6M228 512.1V513.9M228 516.9V525.9M228 528.6v0M228 533v0M228 535.5v0M228 538v0M228 541.4V542.6M228 547.8v0M229 470.8v0M229 482.4V485.2M229 489.4V494.9M229 497.4V503.1M229 506.3V507.5M229 510.9V513.4M229 516v0M229 519.9v0M229 529.3v0M229 531.9V534.2M229 537.3V538.9M229 542.2v0M230 511.2v0M230 515.1V528.9M230 531.8v0M230 534.6v0M230 537.3V543.1M230 549.7v0M230 553.6v0M230 556.9v0M230 560.3v0M231 494.7v0M231 498.2V499.5M231 503.6V507.8M231 511.2V520.5M231 523.2V525.5M231 528.1V533.1M231 540.2v0M231 542.4v0M232 486.1v0M232 491.2v0M232 497.3v0M232 500.1v0M232 504.1v0M232 506.8V508.4M232 510.8V529.2M232 534.6V536.2M233 502.2V505.8M233 510V522.9M233 531.7V532.9M233 536.6v0M233 541.2v0M233 546.7v0M233 551.5v0M234 480.9v0M234 488.4v0M234 494.8V495.7M234 498.7v0M234 503.7v0M234 506.2v0M234 512V518.7M234 521.3v0M234 524.1V531.9M234 535.5v0M235 413.2v0M235 440.6v0M235 443.4v0M235 447.2v0M235 456V457.2M235 462V462.7M235 473.2v0M235 476.4v0M235 480.9V484.3M235 487.5V490.3M235 497.9V500M235 503.4v0M235 507.2v0M235 514v0M235 518.9V520M235 523.6V525.7M235 528.6v0M235 531.8V533.4M235 545.5v0M236 409.1v0M236 414.5v0M236 417v0M236 422.2V423.9M236 439v0M236 443.5V445.6M236 452.2v0M236 454.7v0M236 459.7v0M236 464.9v0M236 467.2v0M236 472.2v0M236 479.9V480.8M236 483.2V485.6M236 491V491.6M236 511.6v0M236 521.3v0M236 527.2v0M236 536.1v0M237 481.3v0M237 484.9V486.5M237 489.4V491M237 497.8V499.3M237 502.2V503.2M237 505.4V506.4M237 508.9V513M237 515.7V516.6M237 519.3V525.8M238 470.8V472.4M238 477.5v0M238 479.7V480.4M238 484.1v0M238 486.5V489.8M238 493V493.6M238 498.1V500.2M238 506.3V511.5M238 514.3v0M238 517.5V519.2M238 521.6V523.1M238 526.6V527.7M238 531.4V535.9M239 499.4v0M239 503.2V504.3M239 507.4V510M239 513v0M239 515.5v0M239 517.9v0M239 520.1V520.8M239 523.7V526.2M239 529.9V539.4M239 543.6V545.8M240 480.1v0M240 491.8V495M240 497.7V499.3M240 505.3V507.3M240 509.8V516.9M240 519.7V521.4M240 524.6V526M240 528.7V529.8M240 532.6V533.8M240 541.3v0M240 543.7v0M241 416.4v0M241 439.2v0M241 445.8v0M241 449.6v0M241 453.3v0M241 457.4V460.7M241 463.7V466.7M241 470.4v0M241 479.7V481.3M241 484.6v0M241 494.6V495.6M241 502.6v0M241 511.1v0M241 513.5v0M241 519.5v0M241 525V526.2M241 529.6V531.8M241 537.6v0M241 544.4v0M241 548.7v0M241 551.4v0M242 446.6v0M242 451.1V451.9M242 463.8v0M242 476.1V476.8M242 480.3v0M242 483.3v0M242 487.1V493.3M242 498.3V501.5M242 508.8v0M242 514.1v0M242 516.9V519.9M242 522.8v0M242 526.9v0M242 532.1v0M242 535.2v0M242 541v0M243 494.7v0M243 498.7v0M243 501.1V502.9M243 511.5V513.5M243 516.4v0M243 520.6V530.1M243 533.1V537.9M243 540.4V544.1M244 512.3V513.5M244 516.5v0M244 519.3V524.1M244 526.4V528.8M244 531.4V537.9M244 540.4v0M244 545v0M244 549.3v0M244 553.6v0M245 500.7V501.7M245 505.5V508.3M245 511.1V518M245 520.5v0M245 523.1V531.6M245 534V540.8M245 544.4v0M245 547.5v0M245 558.9v0M246 511V511.6M246 516V517.5M246 520.6v0M246 523.9V542.1M246 548.7v0M246 557.7v0M247 515v0M247 522.7V537.8M247 540.4V543.4M247 546.8V551.2M247 560V561.2M248 512.7v0M248 523.5V527.4M248 532.1V539.3M248 543.2V544.7M248 548.3V559M248 562.5v0M248 566.8V567.7M249 514.2v0M249 518.9V521.9M249 525.1V526.2M249 528.8v0M249 533.9V537.2M249 539.9V540.8M249 543.7V550.4M249 552.6V554.8M249 557.8v0M250 514.4v0M250 520.5v0M250 523.3V525.5M250 528.6v0M250 533.4V534.9M250 537.2V547.6M250 550.4V556.8M250 559.1V559.7M250 569.7v0M251 518.2V520.2M251 523.6v0M251 527.2V531.6M251 534.8V554.2M251 557.2V559.7M251 563.4v0M252 477.5v0M252 483.5v0M252 487.6v0M252 490.9V492.3M252 495.3v0M252 499.2V502.2M252 505V507.7M252 510.2v0M252 514.2v0M252 516.4V518.1M252 524.9V526.5M252 529V535.4M252 544.1V548M253 469v0M253 477.7v0M253 491.8V493.7M253 498.6v0M253 506V507.3M253 518.2V524.2M253 527.3V531.7M253 535.3v0M253 541.7V546.3M253 548.6V552.2M254 456V457.8M254 460.1v0M254 463.6v0M254 469.2v0M254 474.7V476M254 479.1v0M254 482.3V483.7M254 486v0M254 493v0M254 496v0M254 498.8v0M254 506.4v0M254 513.3v0M254 515.9v0M254 519.6V524M254 528.1v0M254 531.3V534.5M254 537.9v0M254 543.8v0M255 490.7V491.8M255 504.4V512.8M255 515.4v0M255 517.9V524.2M255 529.1V530.7M255 535.1V538.1M255 541.7v0M256 484.9v0M256 491.3V493.1M256 496.6v0M256 500.5v0M256 504v0M256 508.3V518.7M256 523V525M256 529.7V530.8M256 533.2v0M256 541.7v0M256 556v0M256 559.8v0M257 407.8v0M257 411.4v0M257 416.6v0M257 419.8v0M257 423.2v0M257 427.8v0M257 433.4v0M257 435.8V439.3M257 451.6v0M257 456.8V458.6M257 482.3V484.4M257 493.1v0M257 500.7V501.9M257 520.4v0M257 523.5v0M257 527v0M257 529.7v0M257 532.5V534.6M257 537.9v0M257 541.7V542.5M257 553.5v0M257 565.1v0M258 457.4v0M258 459.9V462M258 469.4v0M258 473.1V475.8M258 481.9v0M258 485.9V490.4M258 492.8V495.4M258 497.7v0M258 503.3v0M258 505.9V508.1M258 513.3v0M258 523.5v0M258 526.7v0M258 529.6v0M258 535.1v0M258 539.8V540.6M258 543.7v0M259 484.5v0M259 491.4v0M259 494.8v0M259 503.1V514.9M259 518V521.3M259 524.1v0M259 527.4V530.5M259 534.6V536.5M259 539.6v0M259 542.3V543.7M260 501.9v0M260 505.6v0M260 508V509.1M260 512.5v0M260 515.8v0M260 518.4V525.3M260 528V529.4M260 534.3v0M260 536.7V540.6M260 544.7v0M260 547.8v0M261 501.5V502.9M261 506.4v0M261 513.3V519M261 521.6V538M261 542.8v0M261 550.6v0M262 479v0M262 484.6v0M262 493.6v0M262 499.6V503.6M262 506.4V515.9M262 518.2v0M262 520.8V527M262 535.5v0M262 538.2v0M263 498.5v0M263 502.1v0M263 507v0M263 513.6V515.5M263 518.3V538.3M263 542.9v0M264 488.3v0M264 496.3v0M264 499.7V504.1M264 507.1V512.6M264 515.1V517.2M264 525.5V530.1M264 532.6V538.5M264 547.6v0M265 454.2v0M265 461.5V463M265 470.3V474.9M265 477.3v0M265 481.8V484M265 486.9v0M265 491.3V492M265 494.9v0M265 498.1V499.3M265 502.4V503.9M265 508.8v0M265 511.2V512.6M265 521.3v0M265 524v0M265 531.7v0M265 537.8v0M265 540.5v0M265 546v0M265 551.8v0M266 485.7v0M266 491.4V492M266 495.4V497.8M266 500.6V502.1M266 505.4V511.9M266 514.9V518.5M266 521.5v0M266 533.3v0M266 536.2V538M266 553.9v0M267 467.4v0M267 474v0M267 478.3V479.3M267 482.3V483.5M267 485.8V488.9M267 492.1v0M267 496.5v0M267 502V512.1M267 515.4V519.7M267 525.3v0M267 527.7v0M267 535.2V537.2M267 544.9v0M268 438.3v0M268 443.4V445M268 447.9V449.9M268 452.2v0M268 454.6v0M268 461V464.2M268 468.1V472.4M268 475.9V477M268 480.5v0M268 483.6v0M268 486.2v0M268 527.6v0M268 539.1v0M268 546.3V549.8M268 552.9v0M268 556.5v0M269 470.6V471.3M269 476.8v0M269 479.6V480.5M269 485V487.9M269 492.5V495.3M269 499.9v0M269 503.7V505.8M269 509.7V514.1M269 517.5v0M269 526.4v0M269 534.7V539.8M270 505.3V526.9M270 529.1V533M270 535.2v0M270 538.5v0M270 541.1v0M270 543.5v0M271 501.4V504.8M271 508.2v0M271 510.7V514.7M271 518.4V520.8M271 523.5V525.8M271 528.8V532.5M271 534.8V538.4M271 541.3V543.3M271 550.9v0M272 482.8V484.9M272 488.4v0M272 491.4v0M272 500.6v0M272 504.5v0M272 508.2V509.6M272 513.1V519.4M272 524.4V534.2M272 537.9v0M272 540.4V546.1M273 475.8V479.1M273 483.7V484.7M273 487.1v0M273 490.2v0M273 496.6V499.2M273 506V507.9M273 510.4V512.6M273 516.3V517.6M273 521.6V524.4M273 526.6V531.1M273 539.9v0M273 544.4v0M274 502.4v0M274 505.7v0M274 509.1V509.8M274 512.8V534.9M274 537.3v0M274 543.2v0M275 482.9V483.9M275 487.4V490.4M275 497.8V504.8M275 508.9V510.5M275 514.2V520.3M275 522.5V525.6M275 528.4V529.7M275 532.3V534M276 468.2V469.4M276 471.8v0M276 478v0M276 480.6v0M276 483.9V485.6M276 487.9V489.2M276 492.5V493.2M276 495.6V498.3M276 503.4V506M276 508.3V509.4M276 516.5V519.5M276 521.8v0M276 527.1V529.4M276 538.7v0M277 406.7v0M277 410.3V411.3M277 416.3v0M277 423.7V427M277 436.6v0M277 444.7V447.1M277 455.6v0M277 463.8V465.6M277 470.1v0M277 475.7v0M277 480.1v0M277 518.3v0M277 524.3v0M277 535.2v0M277 541V542.8M277 546.1v0M278 430.4v0M278 434.5v0M278 453.3v0M278 460.5v0M278 465.5V468.6M278 471.2v0M278 474.6v0M278 479v0M278 485.5V488.7M278 491.2v0M278 494.5v0M278 498.4V499.8M278 503.5v0M278 511.6V518M278 522.6v0M278 526.3v0M278 532.6V534.4M278 543.7v0M279 498.2v0M279 503.9v0M279 506.8V508.3M279 510.7v0M279 512.9V513.7M279 516V528.2M279 532.6V535M279 537.4v0M279 539.7v0M279 544.8v0M279 550v0M279 553.9v0M279 557.7V559.5M280 502.1v0M280 506.5v0M280 509v0M280 512.5v0M280 515.3V524.2M280 527.3V538M280 541v0M280 544.9v0M280 547.5V548.1M281 512.9V516.7M281 519.3V528M281 531.1V531.8M281 537.2V542.1M281 546.4V548M281 551.3v0M282 506.8v0M282 511.6V526.4M282 529.1V531M282 534v0M282 536.6V538.5M282 541.2v0M282 544.6v0M283 501v0M283 505.8V506.7M283 509.8V512.2M283 516.1V525.7M283 528.8V536.5M283 539.9v0M283 546.6v0M284 488.3v0M284 491.9v0M284 496v0M284 498.9V499.7M284 503.7V506.1M284 508.6V510.3M284 513.1V528.6M284 535.9v0M284 542v0M285 413.3v0M285 424.4v0M285 434.2v0M285 439.3v0M285 444.1V445.9M285 467.7V468.5M285 472.1v0M285 474.5v0M285 481.1V482.3M285 485V489.7M285 492.2V495.5M285 497.8V499.5M285 505.1v0M285 524.8V527M285 533.5v0M285 536.1v0M285 556.9v0M286 405.3v0M286 417.7v0M286 422.1v0M286 428.8V430.1M286 439.9V440.7M286 457v0M286 459.4V460.4M286 465.5v0M286 473.4v0M286 477.6v0M286 484.5v0M286 522V524.8M286 530.6v0M286 534.7v0M286 540.3v0M286 543.2v0M286 552.1V553.8M287 471.3V476.8M287 480v0M287 487.2V489.3M287 493.4v0M287 500.7V504M287 510.2v0M287 514.2V523.5M287 527.1v0M287 530.2v0M287 533.6v0M287 546.3v0M288 456.4V457.7M288 466.8v0M288 469.9V472.5M288 475.2V475.8M288 478.6V481M288 487.4V494.1M288 498.2V500.4M288 505.2V507.8M288 514.7V517.5M288 525.7v0M288 529.3v0M288 545v0M289 479.6V482.3M289 485.7v0M289 488.1v0M289 494v0M289 498.2V500.5M289 504.1V504.9M289 508.3V510.5M289 517.4V518.5M289 520.7V522.4M289 525.8V535.8M290 448v0M290 453.7v0M290 456.2v0M290 458.7v0M290 463.9V465M290 470v0M290 473.3V476.5M290 479V482.4M290 495.8V498.8M290 508.2V510.2M290 512.8V516M290 518.3V521.2M290 526.3v0M291 484.6v0M291 489.3v0M291 492.7V493.6M291 498.1V500.3M291 503.1V504.9M291 507.5V510.5M291 513V514.4M291 517.1V519.1M291 522.7v0M291 524.9V531.2M291 535.2V536.9M291 539.5v0M291 543v0M292 498.9v0M292 502V504.1M292 507.3V531.3M292 533.9V534.5M292 537.1v0M292 540v0M292 543.6v0M293 496.1v0M293 506.9V508.6M293 511V513.4M293 516.6V520M293 522.3V523.8M293 527.1V533.3M293 538.4v0M293 541.9V544M294 499.3V501.1M294 504v0M294 506.8V514.3M294 519V523.2M294 527.1V529.1M294 532V534.7M294 540.2V542.3M294 549v0M295 497v0M295 504.5V511.4M295 514.4v0M295 517.6V525.1M295 527.3V529.1M295 532.4V533.6M295 540.4v0M295 543.7v0M296 418.9v0M296 426.6v0M296 433V434.6M296 437.9v0M296 445.4V447.6M296 453.7v0M296 458.1V459.5M296 463.6v0M296 469.1V472.2M296 476.3v0M296 478.8v0M296 493.4v0M296 498.8v0M296 503.1V504.4M296 507.5v0M296 510.5v0M296 515v0M296 517.9v0M296 520.3v0M296 527.1v0M296 536.5v0M296 539.9V541.8M296 544.5v0M296 550.9v0M297 419.5v0M297 431.8v0M297 438.2v0M297 447.3v0M297 452v0M297 455.5v0M297 458.8v0M297 465.3v0M297 469v0M297 473.9V475.2M297 477.5v0M297 479.7v0M297 483.3v0M297 487.2v0M297 494.3V495.4M297 498.7V501M297 506.8V509.2M297 514.3v0M297 518.1V522M297 527.4v0M297 530.7v0M297 534.3v0M298 481.5v0M298 489.7v0M298 494.4v0M298 500.4V513.5M298 516.8v0M298 520V523.5M298 528.2V531M298 534v0M298 539.5v0M298 548.5v0M299 490.6v0M299 497.9v0M299 505.9v0M299 509.2v0M299 512.8V523.5M299 527.9V529.4M299 532V534.9M299 539.3V541.3M299 552.5v0M299 555.6v0M300 498V499.2M300 504.2V505.8M300 513.8V516.6M300 519.3V528M300 530.3V532.7M300 535.5V536.4M300 539.1v0M300 542.5V545.1M300 547.7v0M300 555.1v0M301 496.2V497.4M301 502.6v0M301 505.1V522.7M301 525.9v0M301 529.3v0M301 532.2v0M301 535.1v0M301 538.1V540.1M301 543.2v0M301 546.7v0M302 512v0M302 514.7v0M302 517V523M302 525.3V529.3M302 532.1V539.2M302 541.5V543.2M303 487.1v0M303 489.6v0M303 496v0M303 498.5v0M303 501.7V509.3M303 512.6V517.6M303 522.1V529.8M303 532.9V534.7M303 539.6V540.8M304 440.8v0M304 457.3V466.2M304 475.8V477.6M304 480.5v0M304 487.5v0M304 495.6v0M304 498.2v0M304 501.1v0M304 504.8v0M304 509.9v0M304 517.6V518.6M304 528.6V529.4M304 532.5v0M304 537.4V538.2M305 462.1v0M305 464.7V467.4M305 469.8V470.5M305 476V480M305 483.4V487.3M305 490.4V492.3M305 496v0M305 498.9v0M305 503.7V506.9M305 513.7V514.8M305 522.6V524.3M305 528.7v0M305 542.8v0M306 408.2v0M306 417.2v0M306 421.8v0M306 431.2v0M306 441.5V442.4M306 445.2v0M306 450.6v0M306 462.9v0M306 469.9V471.3M306 474V474.6M306 481.2v0M306 484.2v0M306 486.6v0M306 510.8v0M306 526.2v0M306 529.8v0M306 534.5v0M306 545.3v0M307 405.5v0M307 408.6v0M307 412.7v0M307 416.2v0M307 419.4v0M307 423.8v0M307 431.4v0M307 440.7v0M307 443.7v0M307 453.5v0M307 460.9v0M307 463.7v0M307 467.7v0M307 473.2V478.8M307 481.1v0M307 483.7V484.9M307 493.9v0M307 505.5v0M307 510.4v0M307 514v0M307 522.6v0M307 526.7v0M307 534.9v0M307 541.2v0M308 475.8v0M308 494.3V494.9M308 499.1V504.5M308 508.4V510.4M308 513.4V514M308 517.4V521M308 524V527.3M308 530.3V531.2M308 534.7V535.6M308 540v0M309 452.3v0M309 457.5v0M309 473.5V474.4M309 484.3v0M309 491.2v0M309 494.5v0M309 497.9v0M309 500.6V502.4M309 506.3V508.5M309 510.9V515.8M309 519.7V520.6M309 523V526.3M309 532.4v0M309 534.8v0M309 538.8v0M310 448.9V450.7M310 456.3v0M310 459.2V460.4M310 463.5V468M310 470.3v0M310 475.6v0M310 479.7V481.3M310 490.2V493.9M310 497.7v0M310 500.7v0M310 503.2v0M310 505.5V507.9M310 513.9v0M310 538.6v0M310 542.6v0M310 555.1v0M310 561.2v0M311 492.3V494.5M311 506.5v0M311 511.3v0M311 515.5v0M311 518V520.9M311 524.7V534.9M311 537.6v0M311 542.5v0M311 545.4V546.8M311 553.4v0M311 557.9v0M312 507.6v0M312 511V512.5M312 516.9v0M312 521.5V531.6M312 533.9V536.9M312 539.6v0M312 542.5V545.5M312 548.1V550.8M312 555.1v0M312 569.6v0M313 487.3v0M313 492V498.3M313 502.2V517.7M313 520.9v0M313 524.2V525M313 528.3v0M313 531.3v0M313 534.7v0M313 549v0M314 475.3v0M314 481.1v0M314 485.6v0M314 488.3v0M314 494.1V503.1M314 505.9V506.8M314 512.2V513.9M314 518.7V520.4M314 523.4V527.5M314 531.5v0M314 534.2v0M314 538.1V541.5M314 548.7v0M315 473.6v0M315 480.6v0M315 490.7v0M315 493.6v0M315 495.9V497.7M315 502.5v0M315 505.2v0M315 508v0M315 512.9V514.4M315 517.7v0M315 520.9V528.8M315 531.9v0M315 535.2v0M315 539.2V542.3M315 545.6V546.7M315 550.2v0M316 493.7v0M316 497.4v0M316 500.3V514.8M316 518.7V519.8M316 525.3V534.1M316 537.1V540.5M316 545.5V546.6M317 470.4v0M317 479.3v0M317 482.8v0M317 487.8V488.6M317 491.1V492.3M317 495.9v0M317 500.6V502.7M317 508.8V509.7M317 514.8V516.2M317 519.1V520.4M317 522.7V529.2M317 532.1v0M317 534.3V535.1M317 543.3v0M318 475.9V480.1M318 486.4v0M318 493.6v0M318 497.8V498.7M318 505.6v0M318 509.5V515.1M318 517.5v0M318 519.9v0M318 522.3v0M318 526V528.5M318 531.5V534.5M318 537.3V538.8M319 506.4v0M319 514.7v0M319 522.5v0M319 528.2v0M319 532.4V535M319 538.1V553.4M320 523V525M320 527.8V530M320 534V539.1M320 541.7v0M320 545.2V556.5M320 559V561.4M321 518.6V521.1M321 524.8V529.2M321 531.6V544.5M321 549v0M321 554V555.7M321 561.2v0M322 520.8V522.9M322 525.7V526.9M322 529.3V530.4M322 533.2V539.7M322 541.9V543.5M322 546.5V552.5M323 504v0M323 514.1V515.3M323 518.8V520.7M323 523.9V537.9M323 540.6V541.2M323 543.4V544.3M323 548.6v0M323 553.4v0M324 500.4v0M324 504.3V509M324 511.7v0M324 514.6V524.2M324 527.3v0M324 535.4v0M324 542v0M324 544.9v0M324 548.7v0M325 498.5V499.5M325 504.1V513.5M325 518.1V524.3M325 527.6v0M325 531.2V532.6M325 535.1v0M325 538.1V541.4M325 546.6V547.7M325 552.7V553.9M325 556.8v0M326 522.4V533.3M326 535.7v0M326 538.1V543.7M326 546V551M326 553.3v0M327 522.6V525.8M327 529.3V533.5M327 535.8V542M327 544.8V548.3M327 551.8V553M327 557.7v0M328 516v0M328 518.9V520.4M328 523.4V543M328 545.3V547.1M328 554.8v0M329 517.2v0M329 524.1V526.3M329 529v0M329 531.4V544.6M329 547.6V549M329 551.9V553.5M330 497.6V498.3M330 501V501.9M330 507.6v0M330 512.5v0M330 516v0M330 519.2v0M330 521.6V522.2M330 528.1V536.6M330 539.2V542.7M330 545.4v0M330 548.5v0M330 553.4v0M331 505.9v0M331 511.3v0M331 514.1V516M331 518.3V520.2M331 522.6V524.1M331 527.7V534.8M331 537.5V541.9M331 544.7V546.6M331 550.5v0M331 555.2v0M332 519.6V525M332 527.2V547.9M333 512v0M333 516.4v0M333 519.1V521.7M333 523.9V527.7M333 531.4V539.2M333 541.7V547.6M334 510.8v0M334 515.6V545.2M334 553.2v0M335 522.9v0M335 525.2V528.8M335 531.8V548.5M336 503.5V505.2M336 509.6V514.6M336 519.9V524.3M336 531.1V533.3M336 535.5V541M336 543.3v0M336 550.3v0M337 501.8v0M337 504.1v0M337 510.5v0M337 513.4V514.1M337 518.7V535.1M337 537.7V541.4M337 547.8v0M337 558.1v0M338 513.7v0M338 515.9v0M338 522.1V526.9M338 530.4V542.8M338 545.9v0M338 549.3V553.4M339 524.3V525.6M339 528.1v0M339 531.6V532.9M339 535.2V538.1M339 541.8V550.6M339 556.9v0M340 505.2v0M340 509.1v0M340 521.2V523.9M340 527.3V530.3M340 532.9V537.1M340 540.1V543.3M340 545.7V546.7M340 549.7V551.5M341 497.2v0M341 500.1V501.5M341 504.3v0M341 509V510.7M341 513V514.8M341 518v0M341 520.7V521.7M341 524.8V526.6M341 532.6V534.8M341 537.3V538.5M341 547.9v0M341 551.2V552.9M342 503.9v0M342 507V508M342 510.6V518M342 520.3V522.4M342 524.8V526.9M342 529.5v0M342 532.7V534.8M342 539V543M342 546.5V551.5M343 523.2v0M343 525.8V552.9M343 556.8v0M344 500.8V506.1M344 510.1v0M344 514.1V516.1M344 519.5v0M344 521.8V526.1M344 529V530.8M344 534v0M344 543.2v0M344 547.9V548.9M344 555.5v0M344 558.1v0M345 504.7v0M345 509.9V512.6M345 516V518.4M345 520.8v0M345 524v0M345 526.2V539.6M345 542.1v0M345 544.4v0M345 546.8v0M345 550v0M346 522v0M346 525.2V527.4M346 530.5v0M346 533v0M346 536.7V542.5M346 544.7V547M346 552.6V553.8M346 556V559.2M347 528.2V537.7M347 540.3V545.7M347 548V554.6M347 557.1v0M347 560.9V562.9M348 523.9V552.7M349 501.8v0M349 507.4v0M349 512V514.3M349 517.4v0M349 520.2v0M349 522.8V537.2M349 542.6v0M349 546.2V547.3M350 519.6v0M350 523.8v0M350 526.1v0M350 529.5V546.6M350 549.4V551.5M351 530.5V536.3M351 538.5V546.2M351 548.4V553.2M352 522.8v0M352 527.8V538.9M352 541.6V546.1M352 548.7V549.5M352 552.9v0M353 498.9v0M353 506.5V508.1M353 511.9V515.4M353 520V529M353 533.8V537.4M353 542.8v0M354 498v0M354 505.1V512.8M354 516.5V518.2M354 521.9v0M354 526.7V527.4M354 530.8v0M354 540.3v0M354 543.8v0M354 551.4v0M355 500v0M355 504.3v0M355 507.6V514.2M355 516.5V518.7M355 522V523.5M355 526V528.1M355 530.6V531.6M355 535.3V540.9M355 545.4v0M356 518.2v0M356 521.4v0M356 524.4V536.6M356 539.7v0M356 542.2V544M356 548.2V551.9M356 555.5v0M357 515v0M357 518.9V540.5M357 545.7v0M357 548v0M357 550.4v0M358 521.5v0M358 524.3V537.6M358 540.1V543.1M358 546.2V550.2M358 554.7v0M358 557.9v0M359 517.8V518.4M359 522.3V525.5M359 529.4V532.7M359 536.4V537.3M359 539.6V540.5M359 542.9V546M359 551.1v0M359 553.3V555.5M360 512.5V514.4M360 520.9V525.5M360 529V541.3M360 547.2v0M360 551v0M361 518.9V540M361 542.3v0M361 546.1V550.6M361 565.9v0M362 526.9V529.6M362 532.5v0M362 534.8V546.7M362 550.2V559.8M363 522.3V524.1M363 526.5V528.1M363 532.1V537.1M363 540V545.7M363 548.9V554.6M364 509.9v0M364 512.1v0M364 519.8V523.3M364 527V529M364 532.4V545M364 547.2V548.3M364 553.2v0M365 521v0M365 525.7V526.4M365 528.7V529.5M365 532.3V534.1M365 536.8V550.3M365 552.8V553.8M365 556.4v0M365 559.7v0M366 506.8V508.9M366 513.5V514.9M366 518.2V521.6M366 525v0M366 527.6V542.1M366 546.1v0M367 522.4v0M367 526.5V543.4M367 545.9V550.2M367 554.7v0M368 517.3V519.1M368 523.6V524.8M368 527.9V530.2M368 532.6V545.9M368 550.3V552.9M369 517.2v0M369 521.9V524.2M369 528.8V532.4M369 535.2V550.5M369 553.1V554.7M370 524.4V531.6M370 534.5V537.5M370 540V548.1M370 552.8v0M370 555.6v0M371 497.6v0M371 514.4v0M371 518.7V520.4M371 522.8V540.1M371 542.6V543.5M371 545.8v0M371 548.1v0M372 497.7V499.8M372 511.3v0M372 514v0M372 524V530.1M372 532.3V541M372 544.9V547M372 553.7v0M373 521.4V528.2M373 533.7V539.9M373 542.9V546.4M373 549.1V553M373 557.2v0M374 537.7V547.3M374 549.7V558.2M374 564.2v0M375 513.2v0M375 519.9v0M375 525v0M375 528.4V531.2M375 533.5V550.9M375 568.1v0M376 502.1v0M376 506.3v0M376 509.2V510.7M376 513.8V515.4M376 518.6v0M376 523.3V527.8M376 530.9V532.5M376 535.8V538.5M376 541.8V545.6M376 552.6V554.7M377 509.8v0M377 512.7v0M377 517.3v0M377 520.4v0M377 523.2v0M377 526.1V535M377 537.4V544.8M377 547.6V548.6M377 552.8v0M377 555.7v0M377 559.3V560.2M378 517.1v0M378 521.4v0M378 524.2V527.4M378 529.9V540.9M378 544.3v0M378 547.5V552M379 518.5V531.4M379 533.8V538.5M379 542.9V547M380 527v0M380 530.3V547.8M380 551.1V554.9M381 519.8v0M381 526.2v0M381 529.1v0M381 531.5v0M381 535V536.1M381 539.9V541.7M381 545.3V552.8M381 555.8V561M382 498.5V500.3M382 508.1v0M382 512.2v0M382 515.1v0M382 519.1v0M382 524.4v0M382 530.2V532.9M382 535.9v0M382 538.1v0M382 541V541.7M382 545.3v0M382 551.8V555.5M382 560.1v0M383 502.3v0M383 505.3v0M383 510.3v0M383 521.8V526M383 528.2V540.7M383 544v0M383 549.5v0M383 555.9v0M383 558.5V560.6M384 504.2v0M384 510.8v0M384 515.6v0M384 518.2V531.7M384 535.2V537.5M384 540.2v0M384 543.6v0M384 546.3v0M384 555.5v0M385 498.6v0M385 504.5V508.5M385 511.6v0M385 515V517.3M385 522.4V525.8M385 532v0M385 536.1V543.4M385 546.5v0M385 552.1v0M386 506V508M386 514.1V519.5M386 522.1V524.6M386 527.5V529.7M386 534.5V540.7M386 543.5V545.9M386 550.5v0M386 553.3V554M387 514.7v0M387 517.2v0M387 523.5V527.4M387 530V534.2M387 537.3V548.8M388 513.5V514.2M388 517.4V521.2M388 523.5V528.9M388 532.4V533.8M388 536.4V544.5M388 547.4V550.5M389 520.7v0M389 525.7V528.3M389 531.3V535.6M389 538.2V554M389 563.2v0M390 519.2V522.8M390 525.4V531.4M390 533.6V536.3M390 538.7V542.8M390 545.4V548M390 550.7V552M391 522.3V523.2M391 526.4V527.5M391 529.7V541.8M391 544.3v0M391 551.2v0M391 554.7v0M392 502.4v0M392 506.2V507.2M392 509.4v0M392 513.2V519.1M392 521.8V522.9M392 525.2V535.2M392 538.1v0M392 546.9v0M392 550.8v0M393 515.2v0M393 518V519.4M393 522.4v0M393 526.5V539.9M393 543.2V545.3M393 550.4V551.2M394 514.5v0M394 517.4V521.4M394 523.6V539.2M394 543.2V545.4M394 554.2v0M394 558v0M395 517.4V522.5M395 525.3V543.2M395 546.5V547.9M395 551.1V553M395 557.1v0M396 520.2v0M396 522.5V525M396 532.8V536.6M396 540.2V548.8M396 551.4V552.8M397 503.5v0M397 510.8v0M397 516V526.9M397 530.3V542.9M398 501.9V505.7M398 509.1V517.9M398 521.6V525.8M398 528.6V532M398 534.5V535.2M398 538v0M398 543.6v0M399 510.4v0M399 516.6v0M399 520.1v0M399 522.5V524.8M399 527.5V534.8M399 537.7v0M399 542.2V550.9M400 502.6v0M400 510v0M400 514.9v0M400 520.8V524.8M400 528.5V546.8M400 550.5v0M401 500.4V505.3M401 507.6V520.2M401 522.7v0M401 529.7V530.3M401 535.8v0M401 542.2V543M401 554.8v0M402 513.4V515.3M402 518.1V520M402 522.3V530.9M402 533.6v0M402 536.4V541.8M402 545V549.8M402 553.8v0M403 516.5v0M403 523.8V543.3M403 546.3V551.2M403 554.3v0M403 556.7v0M403 560.9v0M404 521.4V526.3M404 528.7V531.7M404 534V541.4M404 544.1V548.9M404 553v0M405 522.9V523.8M405 526.1V527.2M405 530.1v0M405 532.9V537.9M405 541.2V553M405 556.2v0M406 521.6V524.4M406 529.2V543.1M406 548.5v0M406 552.6v0M406 555.4V557.7M406 561.5v0M407 501.6v0M407 505.4v0M407 509.8V512.3M407 516.3V524.5M407 529.2v0M407 532V533.3M407 535.9V541.1M407 548.3v0M408 518.9v0M408 522.1V534.1M408 536.7V543.8M408 547.6v0M408 552v0M409 508.3v0M409 512.2v0M409 515.7V524.9M409 527.8V531.2M409 535.2V540.5M409 542.7v0M409 545.6v0M409 548v0M410 505.5v0M410 508.9V514.3M410 519.8V521.8M410 526.8V538.1M410 543V547.1M410 549.4V552.1M411 511.8V531.6M411 536.6V537.6M411 543.5v0M412 498.4v0M412 501.1V504.9M412 508.4V511.9M412 518.2v0M412 520.8v0M412 523.7v0M412 528V528.9M412 531.9V533.2M412 536v0M412 539.7v0M412 544.9v0M412 548.8V549.7M413 516.7v0M413 522.6v0M413 526.8v0M413 529.5v0M413 532.7v0M413 535.7V539.6M413 541.9V543.9M413 546.6V556.8M413 562.2V563.6M414 521.4V523M414 526.2V541.8M414 545.8V551.2M415 502.2V509.2M415 518.3V523.7M415 528.3V531M415 536.1v0M415 541.1V542.2M416 504v0M416 506.5v0M416 511v0M416 515v0M416 517.3V523.1M416 526.5V531.5M416 536.7v0M416 539.1V544.1M416 548.2v0M416 551v0M416 555v0M417 519.5V520.4M417 525.2v0M417 528.4V535.5M417 537.7V552.1M418 515.4v0M418 520.8v0M418 525.2v0M418 527.8V529.4M418 532.1V533.1M418 536.3V543.3M418 547.4V557.9M418 564V565.3M418 572.6v0M419 514.2v0M419 518.5V531.5M419 534.7V537.7M419 539.9V544.2M419 546.7v0M419 550.2V552.5M420 512.5v0M420 516.5V517.8M420 520.7v0M420 523.1V524.3M420 526.7V531.5M420 534.6V539M420 542.4V543.9M420 546.7V548.1M420 551.2V552.4M420 554.9v0M420 557.7v0M421 518.4V525.5M421 530.9V533.1M421 535.6V542.1M421 545.1V549.8M421 555.5v0M422 506V508.5M422 511V517.8M422 520.5V526.7M422 531.1V540.3M422 542.8v0M422 551.3v0M423 501.1v0M423 504.9V507.4M423 510.9V524.9M423 529.1V531.8M423 534.9V538M424 495.1v0M424 499.4v0M424 504.2V505.1M424 507.9V512.2M424 515.4V518.8M424 523V526.7M424 529.3v0M424 531.8V534.2M424 537.8v0M424 542.2v0M425 496.5v0M425 504.3v0M425 509.5V521.4M425 523.8V526.1M425 529.2V539.6M425 542.6v0M426 502.2v0M426 507.4v0M426 510.5v0M426 512.9v0M426 515.4V526.3M426 531.4V538.4M426 540.9v0M426 544.3v0M427 512.5V530.5M427 534.8V540.4M427 543.5v0M427 548.8v0M427 551.5v0M428 495.3v0M428 497.5V505.4M428 511.5V515M428 520.6V529.4M428 534.3v0M428 540.7v0M429 499.1v0M429 502.6v0M429 506.6V522M429 527.7V530.8M429 533.4V534.6M429 542.9v0M430 494.6v0M430 497.2V501.3M430 505.6V513.4M430 516.4V519.5M430 523.8v0M430 529.7V531.2M430 533.9V535.1M430 539.5v0M431 504.6v0M431 507.4V509.8M431 513.1V518.2M431 521.6V533.3M431 537.2v0M431 541.2V543.2M431 545.9V547.3M431 553.5v0M432 502.7V503.5M432 507.4v0M432 512.9v0M432 515.5V517.6M432 522.8V540.3M432 546v0M433 493.5v0M433 495.9V496.7M433 506.6V507.8M433 510.5V521.9M433 524.9v0M433 527.4V529.6M433 532V533.3M433 536.7V538.2M434 495.6V496.8M434 502.1V516.3M434 519.1V522.2M434 525.3v0M434 528.4V535.1M434 537.5v0M434 541.8V542.8M435 498.8V504.5M435 507V511.1M435 513.5v0M435 516.2V517.1M435 519.5V524.3M435 534.5V536.1M436 503.1v0M436 505.4V507.2M436 509.5V516M436 520.1V524.2M436 526.5V530.4M436 533.3V538.9M436 544v0M436 548.1v0M437 505v0M437 508V512.1M437 519.7V533.7M437 536.5V537.9M437 541.6V544.3M437 547.4v0M437 554.1v0M438 511.2v0M438 514.1v0M438 517V520.7M438 523.4V530.4M438 533V543.5M438 546v0M439 506.9v0M439 514.3v0M439 517.1V533.4M439 536V544.4M439 547.5v0M439 554.5v0M440 507.8V508.5M440 510.8V513.4M440 517.3V540.2M440 544.2v0M440 547.6V549.4M441 501.3v0M441 506.6V508.7M441 511.4V522.2M441 524.5V529.2M441 535.5V537.8M441 544.4V545.2M442 498.3v0M442 501V506.1M442 512.9v0M442 515.7v0M442 518.4V534.6M442 537v0M442 542.4v0M442 545.2v0M443 502.3V503M443 509.3v0M443 512.8V521.5M443 525V530.9M443 534.5v0M443 537.3V539.9M443 544.2v0M443 546.7v0M443 550v0M444 493.2v0M444 502v0M444 506.3v0M444 511.3V526.9M444 529.4V533.8M444 537.2v0M444 543.9v0M445 490.5v0M445 497.8v0M445 500.2v0M445 504.4V506.3M445 510v0M445 513.4v0M445 515.7V533.4M445 537.8V539.1M446 491.9v0M446 504.7V514.3M446 517.6V522M446 525.6V526.5M446 528.9V535.4M446 538.1V538.9M446 542v0M446 546.6v0M447 500V504.8M447 509V529M447 531.4v0M447 533.8v0M447 536.3v0M447 544.8v0M448 500.1v0M448 504.4V509.2M448 512.1V512.8M448 515.6V522M448 524.3V537.3M448 551.2v0M449 502.7v0M449 505.4V512.3M449 515.3V533.1M449 536v0M450 505.5v0M450 507.9V510M450 512.9V514.4M450 518.9V521.5M450 524.9V534.6M450 538.1v0M450 541.2V541.9M450 548.3v0M451 501.4V502.6M451 509.5v0M451 511.9V528M451 531.9V536.6M451 540.8V546.4M451 553.7v0M452 501.1V507.5M452 511.2V521.8M452 524.3v0M452 526.9V533.8M452 536.6v0M452 539.4V540.8M453 499.4v0M453 502.7v0M453 505.3V518.9M453 522.9V524.6M453 528.2V533.9M453 538.4v0M453 541.6V542.8M453 550.8v0M454 501.3V508M454 511.7v0M454 514.4V515.3M454 519.1V521.8M454 524V526.3M454 530v0M454 533.3V539.2M455 509.9V512.3M455 514.8V519.3M455 522V533.3M455 539.9v0M455 542.2V545.1M455 549v0M456 490.6v0M456 495.3V496.9M456 500.2V503.2M456 506.1V508.3M456 511.3V522M456 524.8V527M456 529.9v0M456 538.4v0M457 497.1v0M457 505.8v0M457 509.5V518.2M457 520.6v0M457 523.7V528.6M457 531.1V534.8M457 538.9V542.7M457 545v0M458 498.3v0M458 501.6V507.8M458 510.2V515.8M458 518.9V526.1M458 533.1v0M458 537.6V539.5M458 546.6v0M459 500.9v0M459 506.6V507.7M459 511.4V512.2M459 515.1V519.3M459 523.4V529.6M459 532.8V533.4M459 535.7V540M459 542.8v0M460 488.2v0M460 490.8v0M460 493v0M460 499.1V509M460 511.8v0M460 517.9v0M460 520.3v0M460 522.8V530.2M460 532.8V535.1M460 546.3v0M461 495.9v0M461 499.5v0M461 502.7v0M461 505V508.3M461 510.8V513.1M461 516.7V522.2M461 525.2V528.6M461 532.2V533M461 538.3v0M461 544.1v0M462 497.9v0M462 502.5v0M462 507.4V509.6M462 513.4V515.4M462 519V526.8M462 531.7V535.5M462 538.3V543.2M462 545.6V547.6M463 502.5V506.6M463 510.7V518.8M463 521.1V522.3M463 526.3V534.4M463 537.1v0M463 540.1v0M463 544.6v0M464 502.2V516.3M464 520.2v0M464 523.7v0M464 526.6V527.9M464 531.2V534.6M464 537.8V539.4M464 542.2V543.9M464 550v0M465 503.4V505.5M465 508.1V516.5M465 518.9V522.2M465 524.5V528.2M465 531.4v0M465 536.5V538.5M465 541.3V545M466 513v0M466 516.4V518.1M466 521.1V525.3M466 529.8V531.9M466 534.3V540.2M466 545.8V548.1M466 552.8v0M467 497.9v0M467 506.8V512.4M467 514.9V519.4M467 525V527.1M467 529.5V538.3M468 499.4V506.1M468 508.7V510.3M468 513.2V516.1M468 518.7V520.7M468 523.8V524.6M468 528.1V528.9M468 532.1V534.9M468 538.6V539.5M469 492.9v0M469 501.3v0M469 505.2V507.1M469 511.6V526.5M469 529.6V531.8M469 536V539.5M469 547.2v0M470 497.9v0M470 501.7V509.1M470 511.7V512.3M470 515.2V516.2M470 518.5V525.8M470 530.8V539.6M471 509.2v0M471 511.6V513.1M471 516.8V526M471 529V533.4M471 537.2V541.5M471 544.2V549.6M472 496.5v0M472 499.8v0M472 503.3v0M472 507.7v0M472 513.6V528.4M472 531.1V533.2M472 535.8V537.3M472 540.1v0M472 545.9v0M472 550.6v0M472 554.8v0M472 558.5v0M473 502.9V504.1M473 506.6V511.1M473 514.9V527.2M473 531.5v0M473 534.6v0M473 537.6v0M473 540V543.4M474 490.3v0M474 496.3V498.3M474 504.1V505.8M474 508.3v0M474 510.9V511.7M474 514.9V518.1M474 521.6V529.9M474 533.7v0M474 537V539M475 493.7v0M475 497.6v0M475 507.3V511.3M475 514.5V518.2M475 521V529.2M475 531.6V532.8M475 535.2V541M475 547.3v0M475 556.9v0M476 491.4v0M476 501.4V503M476 505.5v0M476 508.4V509.2M476 511.4V512.3M476 514.7v0M476 517.5V520.4M476 523.2V528.6M476 534.2V535.8M476 543.4V544.3M477 491.9v0M477 509.6V518.3M477 520.6V521.8M477 525.4V534.2M477 536.5V537.2M477 542v0M478 509.7v0M478 513.1V519.9M478 525.3v0M478 527.6V543.2M478 548.1V553.7M479 503.6V506.3M479 508.7v0M479 511.4V521.1M479 526.2V527.9M479 530.4V535.3M479 537.7v0M479 540.4V542.3M479 546.7v0M479 555.6v0M480 501.3v0M480 507.1V512.3M480 514.5v0M480 517.1V532.9M480 536.8V538.5M480 545V546.6M481 506.7V513.7M481 519.3V526.9M481 531.2V532.4M481 535V537.2M481 540.7V542.7M482 497.6V498.8M482 508.1v0M482 510.9V514.2M482 518.5V525M482 528.1V530.2M482 534.8V537.8M482 541.2v0M482 546.2V548.4M483 490.2v0M483 507.1v0M483 511.1v0M483 513.5v0M483 517.2v0M483 519.6V524.6M483 526.9V531.9M483 534.8V536.6M483 539.9v0M483 543.5v0M483 546.3v0M483 552v0M484 496.4V497.2M484 503V509.2M484 511.4V514M484 517.1v0M484 519.9V528.9M484 532.8V536.7M485 504.2v0M485 507.4v0M485 509.8v0M485 512.4v0M485 517.4V522.3M485 524.7V533M485 535.8v0M485 538.5v0M485 552.7v0M486 498.6v0M486 501.8v0M486 505.5v0M486 509V514.3M486 517.9V518.8M486 523.7V526.7M486 530.6v0M486 533.4V535.9M486 541.9V543.5M486 547.7v0M487 496.2v0M487 502.7v0M487 505.4v0M487 513.5v0M487 517V524M487 526.3V536.2M487 551.3v0M488 502.9v0M488 505.9V510.3M488 512.6V516.9M488 520v0M488 524.3V527.7M488 531.4V533.5M488 535.7V537.8M488 542.5V544.3M488 549.6v0M489 501.1v0M489 506.3V507.7M489 512V512.7M489 515.1V517.4M489 520.2V527.6M489 530.7V537.3M489 539.7v0M489 542.5V544.5M489 549.7v0M490 500.7v0M490 503.8v0M490 507.2V511.5M490 513.7V519.7M490 522.4V524.4M490 528.4V537.7M491 499v0M491 502.3V514.8M491 518.1V525.8M491 528.1V532.2M491 536.3V537.5M491 547v0M492 498.5V501.6M492 507.8V510M492 512.6V517.7M492 520V521.8M492 525.2v0M492 527.9v0M492 530.8v0M492 533.6V540.1M492 544V545.6M493 503.1v0M493 505.9v0M493 510.4v0M493 513.2V527.2M493 530.4V536.7M493 539.6v0M493 542.1V546.6M494 498.1v0M494 503.2v0M494 507.7v0M494 511.6V516M494 518.3V523.3M494 528.4V538.6M494 548.7v0M495 490.2v0M495 493.5v0M495 498.5V502.2M495 504.9V511M495 514V515.4M495 520V524.4M495 529.4V531.7M495 535.2V538M496 488v0M496 493.4V498.1M496 500.7V507.5M496 511.3V524.2M496 529.7V530.5M497 490.6v0M497 498.6v0M497 503.5V506.9M497 509.1V512.5M497 515.7v0M497 518.9V525.1M497 528.8V539.3M498 489v0M498 506.2V525.1M498 527.3V528.4M498 532.6V534.3M498 537.2v0M498 539.8v0M499 505.5v0M499 508.9v0M499 511.7V514.7M499 517V526.7M499 528.9V535.1M499 538.3V539.7M500 501.3V503.3M500 505.6V510.1M500 514.1V523.8M500 526.4v0M500 529.6v0M500 533.5V537.5M501 497.2v0M501 500.3v0M501 502.8V510.6M501 512.9V516.7M501 520.7V525.3M501 528.2V530.7M501 533.9v0M501 538.9V540M501 542.8v0M502 498V503.9M502 506.5V509.4M502 511.7V518.4M502 522.4V529.1M502 532.4v0M503 500.3V503M503 506.5V508M503 510.8V528.1M503 531.3v0M503 536.1v0M503 540.3v0M503 544.5v0M504 498.6V520.5M504 525.5V526.3M504 531.8V535.4M505 494.2v0M505 501.7V505.7M505 508.2v0M505 510.8V515.3M505 519V525.9M505 529.5V531.7M505 537.7V539.8M505 543.6v0M505 547.5v0M506 500.2v0M506 505.5V507.4M506 511.8v0M506 515.9V530M506 533.1v0M506 537V543.6M507 502V503.2M507 506.4v0M507 509.1v0M507 514.3V516.3M507 519.2V538.9M507 541.8V547.8M508 498.4v0M508 500.8V504.2M508 506.9v0M508 509.2V512.3M508 515.6V523.3M508 527.9V534.2M508 539v0M508 542.5v0M509 498.8v0M509 506.8v0M509 509.9V529.1M509 531.4v0M509 536.2v0M509 538.9v0M509 542.5v0M509 550.6v0M510 500.9v0M510 505.5V510.8M510 513.8V522.6M510 526.1v0M510 528.7v0M510 531v0M510 534.2V541.2M511 502.3V504.7M511 507.1V510.8M511 515.4V524.3M511 528.7V532M511 534.8V538.6M511 545.1v0M512 497.5V498.5M512 503v0M512 506.5V508.9M512 512.3V538M513 493.8V496.9M513 499.7V502.3M513 507.3v0M513 511.9V518.6M513 521.5V529M513 533.3V536M514 490.6v0M514 494.4v0M514 499.4V500.2M514 503.3V506.3M514 512.1V521.9M514 525v0M514 528.2V530.7M514 533.4V534.2M515 491.8v0M515 499.2v0M515 501.7V504.2M515 507.5v0M515 510.7V515.9M515 519.9V524M515 526.6V529.8M515 533.9V536.2M515 539.2v0M516 488.1v0M516 491.4V492.7M516 496.9V503M516 505.6V514.3M516 517.6V520.1M516 527.6V529.2M516 540.3v0M517 507.5V510.6M517 513.1V523.9M517 526.7V528.5M517 531.5v0M517 536.3V542.8M517 556.6v0M518 500.9V502.6M518 505.6v0M518 511.6V521M518 523.4V525.6M518 528V529.4M518 532.6V534M518 538.2v0M518 542.6v0M518 549.1v0M519 495.2v0M519 499.4v0M519 502.4v0M519 506.4V511.9M519 514.3v0M519 517.1V523.8M519 527.3V532.6M519 539.5V541.3M520 494.1v0M520 498.7V502.5M520 505v0M520 507.2V519M520 525.1V531M520 536.3v0M521 495.1v0M521 503.1V506.3M521 511v0M521 514.1V517M521 520V523.4M521 526.8V528.9M521 531.4V534.5M521 537.2v0M521 542v0M522 499.7v0M522 502.2v0M522 505.1V510.6M522 513V528.4M522 531.4v0M522 535.8v0M522 541.1V544.6M523 493v0M523 497.7v0M523 501v0M523 505.6V517.6M523 522.3V525.4M523 531.1V531.9M523 535.8V538.6M524 499.3v0M524 502.7v0M524 506.5v0M524 512.9V515M524 517.4V529.7M524 532.3V537.8M524 540.1v0M525 497.5v0M525 504.7v0M525 513.2V514.5M525 517.9V527.6M525 533.3V537.4M525 540.8V545.2M526 487V487.9M526 491.8v0M526 503.8V515.2M526 518.3v0M526 522.1V530.9M526 536.6v0M526 539.1v0M527 459.7v0M527 463.1V475.5M527 477.8V481.6M527 484V486.8M527 500.9v0M527 507.7v0M527 518.6v0M527 522.9v0M527 536.9v0M528 479.7v0M528 482.6V487M528 490.1v0M528 492.5v0M528 496V500.6M528 503.8V505.3M528 508.5v0M528 511v0M528 513.4V522.8M528 531.4v0M528 535.4v0M529 491.8V498.9M529 501.1v0M529 503.7V513.8M529 517.2V519.3M529 521.9V523.5M529 526.4v0M529 533.7v0M529 539.3v0M529 542.8v0M530 510.6v0M530 513.3v0M530 518.7V522M530 524.9V531.3M530 533.8V539.1M530 545.2v0M530 548.5V551.9M531 510.3V511.9M531 518.5v0M531 520.7V529.3M531 531.9v0M531 534.2V535.2M531 538.3V545.3M531 551.2v0M532 506.9v0M532 511.4V517.6M532 522V525M532 527.5V539.8M532 542.7v0M532 546.5v0M533 500.7v0M533 505.5v0M533 507.8V509.4M533 515.3V521.8M533 524.3V534.9M533 540.6v0M533 542.8v0M533 545.1v0M533 547.7v0M534 471.9v0M534 476.9V477.8M534 481.1v0M534 487.1V490.4M534 492.8v0M534 503V508.1M534 511.4V513.3M534 516.3V521.6M534 525.7V526.4M534 529v0M534 536.8v0M535 458.1V460.1M535 463.4v0M535 478.6v0M535 516.3V518.5M535 522.8V524.3M535 527.6V528.7M535 533.6V534.5M535 536.9v0M536 464.7v0M536 467V469.8M536 476.2v0M536 480.6V482.2M536 486V488.2M536 490.9V497.6M536 500.2V501.6M536 507v0M536 510.1v0M536 523.6v0M536 526v0M536 532.1v0M536 536.9V538.2M536 546.6v0M537 465.7v0M537 468.6v0M537 473.9V476.9M537 480.8v0M537 486.1V488.5M537 491.9V495.6M537 504.2V505.7M537 509.8V516.6M537 518.9v0M537 524.4V526.1M537 531.7V533.5M537 547.4v0M538 487.5v0M538 492.1v0M538 496.8V500.8M538 503.5v0M538 506.4V511M538 513.5V516.9M538 519.9V521.9M538 524.8V532M538 538V538.8M538 541.2v0M538 547.3v0M539 507v0M539 509.7v0M539 513.6V519.8M539 522.1v0M539 526.3V538.2M539 541.4V542.4M540 517.9V527.4M540 532.3V533.4M540 535.7V541.7M540 544.8V553.3M541 506.4V512.3M541 515.2V519.7M541 523.4V540.4M541 543.8v0M542 505.4v0M542 510.8V519.8M542 522.5V524.2M542 526.5V527.2M542 529.6V531.1M542 533.3V538M542 541.8V543.6M542 547.7v0M543 465v0M543 476.8v0M543 482V483.8M543 488.5v0M543 495.5V498M543 502.7v0M543 505.2V506.2M543 508.8v0M543 511.4V514.1M543 520.2V523.4M543 525.7V526.6M543 529.1v0M543 534.7v0M543 538.4v0M543 542.2v0M544 458.7V466.1M544 471.4v0M544 475.2V476.2M544 480V481.8M544 487.5V488.7M544 509.7v0M544 513.8v0M544 520.4v0M545 485.4V490.1M545 493.9V495.6M545 501.7V504.6M545 509.9v0M545 512.7V515.3M545 518.8V523.3M545 526.6v0M545 532.4v0M545 536.7v0M545 540.8V543.6M545 550.1v0M546 508V509.2M546 513v0M546 517.6V524.5M546 526.7V534.4M546 537.5V540.8M546 544.6v0M546 547.7v0M546 551v0M547 510.8V511.4M547 514.3V515.3M547 517.6V541.8M548 501.2v0M548 508.9v0M548 514.5V537.5M548 541.2V543.7M549 490.9v0M549 495.6v0M549 501.6V502.7M549 505.4v0M549 509.9v0M549 512.2V513M549 515.3v0M549 517.6V530.2M549 535.1v0M549 539.2V542.6M550 494.7v0M550 497.2v0M550 503.1v0M550 505.6v0M550 510.6v0M550 516V517.3M550 519.7V523.3M550 526.7V537M550 541.1V543.7M550 546.3v0M550 558.4v0M551 480.4v0M551 488.3V489.5M551 497.7v0M551 504v0M551 511.2V519.9M551 522.8V527.9M551 530.5V532.8M551 537.5V541.6M551 546.5v0M552 482v0M552 493.3V497.1M552 502.1v0M552 505.9v0M552 509V521.5M552 524.2V528.7M552 537.2v0M552 542.2v0M552 545.9v0M552 557.1v0M553 457V459.5M553 462.1V466.5M553 471.7V473.1M553 484.2v0M553 492V494.2M553 503.4v0M553 522.7v0M553 536.1v0M553 541v0M553 543.6v0M553 547.4v0M554 470.6v0M554 473v0M554 475.8v0M554 483.1V486.2M554 488.6v0M554 492V502.6M554 506.1v0M554 508.9V512.8M554 517.7V518.8M554 521.9v0M554 525.4V526.1M554 533.7v0M555 488.2V491.5M555 494.1v0M555 497.8V499.3M555 503.1V511M555 513.2v0M555 516.4V519.3M555 521.9v0M555 525.1V526.5M555 529.3V532.3M555 534.9v0M555 541.4v0M555 544.2v0M556 499.8v0M556 505.8V509.3M556 511.9V520.7M556 523.3V525.4M556 528.5V536M556 539v0M557 517.9V519.7M557 522V524.1M557 528.1V536.3M557 538.5V547.6M557 551.8v0M558 505.9v0M558 513.4V525.5M558 529.2V530.5M558 534.3V535.1M558 538v0M558 540.3V542.2M558 550.5v0M559 479.4v0M559 489.9V491.6M559 494v0M559 496.8V499M559 503.7v0M559 507.2v0M559 510.9V514.6M559 517V518.8M559 523.1V532.2M559 540.3V542.8M560 464.4v0M560 472.6V474.1M560 477.1V479M560 482V488.7M560 493.9V499.1M560 506.4v0M560 511v0M560 524.4V526M560 531.6v0M560 534.9v0M561 489.8V491.5M561 501.4v0M561 506.4V507.3M561 511.1v0M561 513.5V520.8M561 525.5v0M561 528.6V534.8M561 539.2V540.2M562 499.3v0M562 514.3V515.7M562 519.8V536.7M562 541.2V541.9M562 548.5v0M562 553.2v0M563 509.3v0M563 513.7V514.4M563 517.8v0M563 521.8V528.3M563 530.6V545.8M563 550.5v0M564 507.9v0M564 513.4V531.8M564 534.2V539.4M564 544V544.7M565 469.1V475.8M565 480.6v0M565 484.2V485.4M565 488.4V490.1M565 499V502.2M565 504.7v0M565 510.7V511.7M565 514.7V521.7M565 524.4V527.1M565 530.3v0M565 533.9V537.9M566 473.3V474.1M566 482.2V483.9M566 489.1V490.3M566 492.8V500.3M566 502.9V504.5M566 512.3V513.7M566 519.7v0M566 522.5v0M566 533v0M567 458.5v0M567 463.1V469.3M567 471.7V473.7M567 476.3V478M567 480.7V485.6M567 491.3v0M567 498.1v0M567 505.4v0M567 510.6v0M567 513.7v0M567 516.2v0M567 522.8v0M567 527.2v0M567 535.9v0M567 547v0M568 487V488.6M568 493.5v0M568 501V502.7M568 504.9V508.2M568 511.8v0M568 514.4V515.3M568 519.3V528M568 531.5v0M568 535.8V538M568 540.5V541.4M568 544.1v0M568 549.8v0M569 506.8v0M569 510.2V511M569 514v0M569 518V539.9M569 544.4V546.3M570 516.7v0M570 521.2V535.1M570 538.8V545.5M570 548.2v0M570 551.5v0M570 555.6v0M571 488.3v0M571 498.2v0M571 501V511.2M571 514.3v0M571 516.9V519.8M571 523.6V525.9M571 528.5V531.6M571 534.5V537.1M571 539.3V540.6M571 543.6v0M572 467.1v0M572 474.2V475.4M572 478.1v0M572 482.3V484.2M572 486.8v0M572 489.3V494.7M572 497V505.6M572 511.2v0M572 516.1V518M572 520.5V523.1M572 527.5v0M573 476.8V478.1M573 482.4v0M573 484.7v0M573 488v0M573 494.3v0M573 497.1v0M573 501.4V504.9M573 507.2V508.8M573 511v0M573 514.6v0M573 521.3V523.7M573 526.1V527.4M573 532.5V535.4M573 542.5v0M574 507.8v0M574 515V521.6M574 524.1V529.9M574 533.1V538.5M574 541.9V545.2M575 502.4v0M575 505.8v0M575 508.6V509.3M575 512.1V514.3M575 517.2v0M575 520.7V527.9M575 530.3V534.4M575 536.8V546.2M576 462.8v0M576 472.3V473.4M576 491.8V493.9M576 496.5V498.7M576 501.4V504M576 507.5V514.8M576 518.2V527M576 533.1V535.2M577 457.2V465M577 471.2V472.4M577 474.9v0M577 477.4V478.3M577 492.4v0M577 494.8v0M577 505.3v0M577 511.1v0M577 542v0M578 472.2v0M578 475.4v0M578 478v0M578 482.1v0M578 485.5v0M578 489.3V493.3M578 497V498.8M578 501.9v0M578 505.2v0M578 508.4V519.4M578 523.4V527.6M578 535.3v0M579 498.8V500.9M579 506.9V517.3M579 520.4v0M579 523.7v0M579 526.2V528.4M579 530.9V538.3M579 541.2V542M580 510.6v0M580 513.7v0M580 516.9V527.8M580 530.6V537.5M580 540V540.7M580 543.3V544.6M580 554v0M581 511v0M581 515.9V527M581 529.5V542.2M581 545.2V547.1M581 549.7V551.8M581 557.8v0M581 561.3v0M582 499.8v0M582 508.8v0M582 512.7V518.4M582 522V527.6M582 530.1V532.2M582 534.5V537.8M582 556.8v0M583 507.7v0M583 512.2V516.1M583 519.2v0M583 522.4V528.3M583 530.8V532M583 536V540.6M583 543.3V544.7M583 550.5v0M583 555.8v0M584 515.8V520.9M584 523.3V524.4M584 526.6v0M584 528.9V540.9M584 543.6V545.3M584 549v0M584 555.8v0M585 498.9v0M585 501.6V504.2M585 509.5v0M585 512.3V523.8M585 526.2V532.2M585 534.6V537.5M586 473.1v0M586 477.5V478.4M586 481v0M586 489.1v0M586 495.3v0M586 504V505.4M586 508.6V512.6M586 515.4V524.6M586 529.1V531.1M586 539.1V540.4M586 543.7v0M587 459.3v0M587 462.1V464.6M587 473.6V476M587 488v0M587 502.9v0M587 508.2v0M587 515.1v0M587 521.8V523M587 529.2v0M587 531.8V534.3M588 474v0M588 482.6v0M588 485.2v0M588 487.6V488.7M588 492.3v0M588 494.8V495.6M588 498.8V503.7M588 508.8V509.4M588 513.6v0M588 516.4V522.2M588 524.8v0M588 533.3V537.2M589 462v0M589 472.5V476.9M589 479.9V483.9M589 487.2v0M589 490.7V493.7M589 499.3v0M589 501.6v0M589 507.9V508.9M589 513.7V515.2M589 521.1V525M589 527.7V528.7M589 531.6v0M590 484.6v0M590 502.8v0M590 506.4v0M590 511V517.3M590 519.8V529M590 533.6v0M590 538.1V540.6M590 543.5V545.7M591 493.7v0M591 500.2V502.4M591 513.5V515.2M591 517.6V525.8M591 528.8V529.5M591 531.8V539.2M592 503.2v0M592 507.4v0M592 510.2V514.1M592 518.7V519.6M592 522.1V537M592 541.5V543M592 545.8v0M592 549.1v0M593 503.1v0M593 508.3V517.1M593 519.9V525.6M593 528.4V530.3M593 532.5V533.5M593 535.7V539.8M593 543v0M593 545.6v0M593 549.3v0M594 466.8v0M594 470.7v0M594 481v0M594 486.4v0M594 494.8V496.5M594 500.6V508.3M594 510.6V517.9M594 520.9V522.1M594 524.4V525.2M594 532.4v0M594 535.1v0M595 458.4V463.5M595 466.7v0M595 470.2V474M595 481v0M595 485.6v0M595 497v0M595 508.9v0M595 516.9v0M595 523.9v0M595 540.3v0M595 543.4v0M595 550.4v0M596 488.9v0M596 495.7v0M596 501.2V505M596 508.9V520.7M596 523.7V530.5M596 537.1v0M596 540.4v0M596 547.2v0M596 550.8v0M596 556v0M597 481.9V483.9M597 488v0M597 490.9V498.1M597 501V509.2M597 511.6V515M597 523.5V524.2M597 530.8v0M597 533.6v0M597 535.8v0M597 538.9v0M598 476v0M598 481.6v0M598 487.4v0M598 494.2V496.9M598 503.4V507.9M598 510.5V521.1M598 523.8V530.2M598 533.8v0M598 536v0M599 503.5v0M599 506.4v0M599 509.4v0M599 516.7V522.5M599 525.1V534.8M599 539V542.4M599 547.3v0M600 498.2v0M600 506.5V507.9M600 512.5V516.3M600 519.3V521.1M600 525.5V530.8M600 533.2V534.2M600 539.5V540.3M600 543.3V544.4M600 546.9v0M600 549.6V551.7M601 481v0M601 494.7v0M601 498.3v0M601 506.1V509.4M601 514.2v0M601 516.8V520.9M601 525.5V532.9M601 535.1V536.6M601 540.4v0M602 478.4v0M602 494v0M602 497.2V498.1M602 500.8V502.9M602 507.3V515.1M602 518.9V522.6M602 526.6V530.5M602 533.5v0M602 537.9v0M602 548.8V549.4M603 467.8V469.6M603 475.9v0M603 480.4V481.7M603 484.2V485.3M603 488.6V494.3M603 497.3V500.7M603 503.5v0M603 506.3v0M603 510v0M603 516.4v0M603 527.5V528.4M603 550.1v0M604 459.4v0M604 466.3V470.8M604 475.4v0M604 479.2v0M604 485.9V494.8M604 498.9V504.1M604 511.1v0M604 525.2v0M604 536.7v0M604 543.5v0M605 457.2v0M605 461.7v0M605 466.3V468.2M605 471.9v0M605 522.2V523.8M605 534v0M605 546v0M606 460.6v0M606 487.7v0M606 490.5V491.3M606 495.3v0M606 502.5v0M606 505.4V506.3M606 509.4V511.6M606 513.9V515.7M606 518.6V530.1M606 535.1V535.7M606 552.8v0M607 492.9v0M607 498.3v0M607 506.2V513.6M607 521.1V522.5M607 524.8V528.9M607 531.3V534.3M607 537.6v0M608 508.8v0M608 512.2V514.3M608 522.6V525.3M608 530.2V542.3M608 546.3v0M608 563.4v0M609 511.6v0M609 513.8v0M609 516.6v0M609 523.6V526.5M609 529.3V532.3M609 535V535.8M609 539.4V546.9M609 549.6v0M609 553V553.8M609 561.4v0M609 564.2v0M610 510.3v0M610 514.1v0M610 517v0M610 520V524.4M610 527.9v0M610 530.3V536.3M610 542.3V553.1M610 555.6v0M610 558.2v0M611 509.2V518M611 521V521.9M611 524.8V532M611 536.5v0M611 540.7v0M611 543.2V544.2M611 546.6v0M612 503.7v0M612 515.6V520.4M612 523.4V538.4M612 546V553.2M612 563.1v0M613 489.1V490.5M613 492.7v0M613 495.4v0M613 502.9v0M613 507.8v0M613 513V516.4M613 518.9v0M613 524V535M613 538.5V541.6M613 550v0M613 553.6v0M614 468.7V470.9M614 473.2V479M614 483.2v0M614 488V490.3M614 494.6v0M614 498.5v0M614 515.2v0M614 520.1v0M614 527v0M614 539.3v0M614 547.8v0M615 458.5V459.6M615 464v0M615 471.2v0M615 491v0M615 493.4v0M615 496.3v0M615 502.9V503.9M615 507.8V512.1M615 518.2v0M615 521.3v0M615 532.5v0M615 536.3V537.9M615 543.5v0M615 547.1v0M615 562.7v0M616 500.3V503.8M616 506.1V518.8M616 524.6V532.3M616 535.4V538.1M617 504.4v0M617 510v0M617 512.4V536.3M618 501.1v0M618 507.8v0M618 510.9V516.5M618 519.8V520.8M618 524.9V527.5M618 533.9V546.4M618 548.9v0M619 503.8v0M619 511.2V520M619 523.4V536.8M619 539.2v0M619 543.8v0M620 499.8V519.2M620 521.6V526.7M620 529.4V531.9M620 544.1v0M621 507.6v0M621 512.6V514.2M621 516.7V530.2M621 533.1V534.2M621 536.5v0M621 539.2v0M621 542.9V543.5M621 547V548.8M622 505.9v0M622 510.9V527.4M622 530.1V534.6M622 537.5V541.1M622 549.1v0M623 470v0M623 479.9V482M623 484.4V485.3M623 489.8v0M623 493.1V493.8M623 505.9v0M623 509.6v0M623 516v0M623 519.1V523.4M623 525.8V535.6M623 546.4v0M624 457.6V460.5M624 463.4V466.9M624 469.5V471.1M624 475.2V477.1M624 485.4V488.8M624 514.8v0M624 524.7v0M624 527.4V529.2M624 532.5v0M624 534.8V536.9M625 477.9V479.5M625 484.8v0M625 490V495.1M625 497.7V500.4M625 503.4V504.1M625 508v0M625 511.6v0M625 514.7v0M625 517V528.5M625 532.1v0M625 542.1v0M626 497.6V499.7M626 503.1V513M626 517.2V527.5M626 531.9V532.8M626 536.6V537.4M626 541.8V542.5M627 479v0M627 484.9v0M627 487.3V488.2M627 493.2v0M627 496v0M627 499.2V502.8M627 505.5V507.5M627 510.3v0M627 513.1V527.3M627 537.2v0M627 539.9v0M627 545.2v0M628 456V457.2M628 460v0M628 462.2V463M628 466.4V473.3M628 475.7v0M628 478.1V479M628 481.3V486.8M628 490V492.6M628 495.4V497.4M628 509.7v0M628 534.3v0M629 482.2v0M629 488.4v0M629 493.9v0M629 500.3V504.1M629 506.6V507.6M629 512.3V526.6M629 537.3v0M629 546.3v0M630 508.8v0M630 511v0M630 514.4v0M630 518.2V521.1M630 524V526M630 528.6V530.5M630 534.5V541.6M630 543.9V546.6M630 549V551.6M630 555V556.1M631 491.8v0M631 501.9v0M631 506.4V512.3M631 515.7V529.8M631 532.2v0M631 534.9v0M631 537.7v0M631 543.4v0M631 545.9V548.7M632 510.6v0M632 514.1V516.9M632 521V529.5M632 534.1V535.5M632 538.2V544.7M632 548.5V552.5M633 493.9V495.1M633 497.8V501.5M633 506.7v0M633 510.6v0M633 513.9V520M633 524.5V527.2M633 534.1V535.8M633 540V545.8M633 548.7V549.7M634 490V491.9M634 494.2V495.6M634 499.8V505M634 508V513.5M634 517.1V519.4M634 526.3V528.1M634 532.7v0M634 536.8v0M634 539.5v0M635 501V512.4M635 515.1V526.1M635 533.2V535.8M635 538.4v0M635 545.2v0M635 551.7v0M636 487.1V492.4M636 495.8v0M636 499.2V507.9M636 510.3V520M636 523.9V525.6M636 528.7v0M636 542.5v0M637 449.5v0M637 452.4V454.2M637 456.4V459.7M637 464.2V471.5M637 474.3v0M637 478.2V481.3M637 483.8V487.1M637 490.4v0M637 495.3v0M637 532.9v0M638 452.6v0M638 481.3V484.5M638 487.9v0M638 491.4V492.5M638 496.6V506.4M638 511.8V516.9M638 520.3v0M638 523.9V525.2M638 528.9v0M638 532.1v0M638 538.9V539.8M639 492.4V494.2M639 497.1V499.1M639 501.7v0M639 505.3V507M639 509.5V519.6M639 521.9V524.1M639 527v0M639 534.5V535.6M639 538.5V541M640 501.9v0M640 506.2V508.3M640 510.8V513.9M640 517.4V518.9M640 521.9V532.5M640 534.8V538.3M640 546.6v0M640 555v0M641 499.4v0M641 502.4V504.5M641 508.9v0M641 512.9V515.1M641 518.4V520.1M641 523v0M641 525.6V539.4M641 544.7V547.4M641 551v0M641 555.7v0M642 507.8v0M642 510.9V512.8M642 517.9V520.9M642 524.7V540.6M642 543.7v0M642 547V548.2M643 482.8v0M643 488.4v0M643 496.9V502.8M643 505V505.8M643 508.1V512.8M643 517V519.7M643 522.1V525.6M643 528.4v0M643 531.8v0M643 539.9V541.7M643 557.7v0M644 508.9v0M644 516v0M644 520.9v0M644 524.5V525.8M644 528.2V541M644 547V554M645 479v0M645 489.8v0M645 492.1v0M645 501V501.9M645 505.1V505.8M645 508.7V513.8M645 518.9V522.4M645 528.8V530.6M645 533.3V537.5M645 539.7V540.3M645 543.2v0M646 456.2V457M646 460.2V462M646 466.1V472.8M646 476.1V478.9M646 484.2V490.8M646 494.6V498.4M646 505.6v0M646 523.8v0M646 536.4v0M646 544.2v0M647 487.6v0M647 490.2v0M647 495.7V500.6M647 503.2V509.8M647 514.9V520.3M647 525.5v0M647 529.4V530.5M647 533V533.7M647 538.6v0M647 544.2v0M648 491.3v0M648 496.4V501.4M648 505.6V511.3M648 513.5V519.3M648 522.2V524.4M648 526.7V532.1M648 535.5v0M649 511.3v0M649 516.8v0M649 519.3V526.3M649 528.5V532.5M649 536.7V550.3M649 558.9v0M650 507.6v0M650 514.4v0M650 517.8V522.7M650 525.7V540M650 544.7V547.8M651 504.2v0M651 509.5v0M651 513.5V523.2M651 526.7V533.9M651 536.4V541.7M651 545.5v0M651 552.4v0M652 495.5v0M652 498.5v0M652 505.9v0M652 509.9V514.1M652 518.3V527.2M652 531.1V537.3M652 540.4v0M652 545.9v0M652 551.4v0M653 505.7v0M653 511.2v0M653 514.9v0M653 520.4V524.1M653 527.4V534.7M653 538.2V543M653 546.5v0M653 549.2v0M654 497.8V498.7M654 504.5V519.5M654 522.6V526.1M654 529.6v0M654 532.6v0M654 535.3v0M654 541.4v0M655 472v0M655 474.8V477.4M655 480V481.9M655 484.3V490.1M655 496.7V502.6M655 506.6v0M655 510.7V512.8M655 519.6v0M655 535.6v0M655 544.1v0M656 498.6v0M656 501.9v0M656 507.2V514.2M656 516.7V521.3M656 525.3V527.7M656 529.9V530.9M656 533.4V535M656 537.2V537.9M656 540.5v0M657 505.1v0M657 512v0M657 514.4v0M657 516.7V523.8M657 526.3V530.1M657 533.3V534.9M657 538.8v0M657 541.8v0M657 545V548.2M657 554v0M658 511.4v0M658 522.4V529.6M658 532V540.6M658 543v0M658 549.3V551.7M658 559v0M658 564.2v0M658 568.4V569.3M659 501.3v0M659 504.8v0M659 508.3v0M659 511.1V513.3M659 518.5V522.6M659 527.1V530M659 532.2V533.3M659 535.7V545M660 516.2v0M660 520.3v0M660 525V528.7M660 531.6V534.8M660 538.5V541.1M660 543.9V551.5M660 554.8v0M660 557.2v0M660 564V564.9M661 510.3v0M661 518.5V521.1M661 525.2V526.2M661 530.3v0M661 532.8V540.8M661 543.3V550.5M661 554.3V556.2M661 561.7v0M662 510.7V512.7M662 518.2V518.8M662 521.6v0M662 524.2V533.2M662 539.4V543.5M662 546.4v0M662 548.8V550.1M662 553.8v0M663 511v0M663 514.5V519.4M663 523.4V536.3M663 540.1V544.5M663 550.2V551.8M663 554.6v0M664 511.5v0M664 514.6v0M664 517.5V531.1M664 533.9v0M664 536.2V538.8M664 544V548.2M664 554.1V555.5M665 505.7v0M665 516.8V517.9M665 521.2v0M665 524V525.2M665 527.6V539.4M665 542V548.6M665 557.7v0M666 488v0M666 494.7V498.9M666 502.2v0M666 505.4V507.8M666 510.7v0M666 513.1V517.9M666 520.3v0M666 524.1V525.1M666 527.7v0M666 530.5v0M666 532.9v0M666 537.9v0M666 542.5v0M666 552.3v0M667 469.5v0M667 474V482.3M667 490.4V491.7M667 494.8v0M667 497.1V505.4M667 514.1v0M667 527.9v0M667 532.4v0M667 538V540M667 544.7v0M668 494.6v0M668 505.7V513.9M668 518.2V525.8M668 528.7V531.2M668 538v0M668 541.7V544.8M668 552.8v0M669 507.7v0M669 512V520.2M669 523.3V536.1M669 539.2v0M669 543.9v0M669 552.6V553.2M670 513.6v0M670 517.3V521.9M670 524.7V525.3M670 528.1V534M670 536.5v0M670 540.9V546.8M670 549.7V550.5M670 557.1v0M671 495.5v0M671 501.7v0M671 507V508.5M671 511.3v0M671 514.4v0M671 517V522.5M671 525V535M671 538.1V543.6M671 554.3v0M672 490.6V491.2M672 495.1V496.9M672 502.2v0M672 505.1V507M672 510.9V512M672 515.5V518M672 520.4V539.9M672 544.6v0M673 512.5V521.7M673 524.1V531.4M673 534v0M673 537.3V538.5M673 540.9V542.6M673 546.7V548.2M673 553.4v0M673 559.5v0M674 479.7v0M674 489.1v0M674 491.3V492M674 495.6V497.2M674 500.1V507.3M674 509.6V512M674 516.7V523.5M674 526.5V528.5M674 532.5v0M674 540.2v0M674 546.6v0M674 553.7v0M675 465.9v0M675 469.3V474.7M675 477.3V479.8M675 482.7v0M675 486.5V488.5M675 491.4V493.8M675 497.3V501.2M675 504.3v0M675 509.1v0M675 524.6v0M675 535v0M675 538.6v0M675 548.9v0M676 492v0M676 494.9v0M676 502.2v0M676 505V518.1M676 522.8V528.7M676 533V534.3M676 540.6v0M676 543.3v0M677 509.9V513.2M677 516.1V522.7M677 526.7V531.7M677 534.9V537.4M677 542.5V543.5M678 507.8v0M678 511.2V513.6M678 516.3V521.6M678 525V542.5M678 547.1v0M678 549.4v0M679 506.2v0M679 509.2V515.4M679 518.4v0M679 521.1V522.6M679 525.3v0M679 528.7V532.6M679 535V536.4M679 539.4V543.5M679 549.1V551.1M679 553.7V554.4M680 523.2v0M680 527.2V538.6M680 541.2V543M680 545.3V550.1M680 552.9V557.7M680 560.5v0M681 518.7v0M681 522V524.2M681 527.8V532.9M681 535.7v0M681 538.7V540.9M681 543.1V549.2M681 552.1V558.2M682 506v0M682 510.8V512.2M682 515.1V516.8M682 519.2V529.3M682 532.2V539.9M682 542.7v0M682 553.8v0M682 556.4v0M683 490v0M683 496.5V502.4M683 506.7V509M683 513.3V519M683 525.4V527.7M683 530.4V535.4M683 538.6v0M683 542.8v0M683 546.8v0M684 476.9v0M684 485.3v0M684 489.8V491.8M684 494.8V499.8M684 503.7V507.4M684 511V516.2M684 519.4V528M684 530.3v0M684 535.7V536.9M684 539.8v0M684 559.3v0M685 482.8v0M685 490.5v0M685 494.4V502M685 504.5V506M685 509.7V515.6M685 519.6V524.5M685 530.2v0M685 533.3V534.1M685 539.4v0M685 541.8v0M686 452v0M686 461.4V463.3M686 470v0M686 475v0M686 479V479.8M686 482.8V484.7M686 491v0M686 494.3V495.7M686 498.6v0M686 501V502.2M686 508.4V509.2M686 519.8V522.3M686 536.9v0M686 540.3v0M687 492.5v0M687 496.6v0M687 512v0M687 516.8V536.9M687 540.4V543M687 549.9v0M687 553v0M688 522.8V524.5M688 527.7V528.3M688 530.6V547M688 551.8v0M688 554.7v0M688 564.2v0M688 567.1v0M689 515.2V518M689 521.2V525.7M689 529.3V531.1M689 535.6V547.4M689 562.7v0M690 500.8v0M690 503.9v0M690 508.2V522.2M690 525.2V530.9M690 535.2v0M690 537.5v0M690 539.8v0M690 543V543.8M690 546.3v0M691 510v0M691 513.1v0M691 518.7V524.8M691 530.1V536.1M691 539.6V547.7M691 551V554.4M691 561.1v0M692 506.4v0M692 514.9V518.5M692 524.5v0M692 527.4V538.8M692 542.7V544.4M692 546.7V549.6M692 554.5V555.2M692 560.7v0M693 507.2v0M693 513.8v0M693 520.2V531.1M693 534.9V537.3M693 539.9V547.4M693 551.7V553.7M694 502.9V503.9M694 506.4V508.4M694 511V515M694 518V527.5M694 529.8V536.5M694 539.7v0M694 542.8v0M694 549.8v0M695 490.7V492.8M695 501v0M695 505.1v0M695 507.4V509M695 512.8v0M695 516.2V526.4M695 530.6V531.6M695 535.6v0M695 544.4V546.4M696 472.1V480M696 484.3V487.6M696 490.3V500.6M696 506.3V509.1M696 511.7v0M696 515.7v0M696 533.5v0M696 541.7v0M696 550.8v0M696 562.4v0M697 486.4v0M697 500.7v0M697 509V512.3M697 514.7V518.3M697 524v0M697 526.5v0M697 528.8V534.8M697 537.4V540.7M697 546.2v0M697 549.4V552M697 554.6v0M698 480v0M698 483V485.1M698 489v0M698 491.9v0M698 496.8V498.4M698 501.3v0M698 505.1V506.6M698 511.3v0M698 514.8V532M698 535.6v0M698 538.4v0M698 546.4v0M698 551.3v0M699 498.8V500.1M699 503.2V505.6M699 509.7V513.2M699 517.4V518.2M699 520.9V531.5M699 534.3v0M699 537.7v0M699 540.8v0M699 543.9v0M699 548.1v0M699 551.9v0M700 493.3v0M700 495.5v0M700 498.2v0M700 500.7V507.3M700 513.9V517.6M700 520.3V521.9M700 525.4V532.8M700 537v0M700 544.1v0M701 501.5v0M701 510.6V513.6M701 519.2V523.3M701 525.6V528M701 531.1v0M701 533.9V541.2M701 543.8V545.8M701 548.3v0M701 551.5v0M701 554.8V557.6M702 507.5v0M702 517.8v0M702 520.3V525.8M702 530.2v0M702 532.5V534.1M702 537.9V539M702 541.3V549.1M702 553.2V557M702 559.2V560.8M702 565.7v0M702 570.8v0M702 573.4v0M702 579.3v0M703 508.9V509.6M703 515.9v0M703 519.1v0M703 521.7v0M703 524.4V542.4M703 547V548.5M703 555.2v0M704 501.8v0M704 504.6v0M704 518.9v0M704 521.4V532.3M704 536.6V537.4M704 540V542.8M704 546.2v0M704 550.3v0M705 499.9v0M705 508.8V510.9M705 513.5V517.7M705 521.3v0M705 523.9v0M705 526.5V527.7M705 530.2v0M705 532.5V536.3M705 540.4V544.6M705 550.8v0M706 495.1V496.3M706 508.9v0M706 513.6v0M706 516.1v0M706 518.9v0M706 521.6V524.6M706 526.8V530.2M706 533.5v0M706 537.3v0M706 539.9V540.8M706 543.3V546.1M706 549.4V550.6M706 554.1V555.9M707 478.6V479.3M707 481.8v0M707 484.5v0M707 487.4V491M707 493.5V499.1M707 501.3V502.3M707 506.1V507.6M707 511.4V514.9M707 519v0M707 521.7V523.1M707 527.9v0M707 544v0M707 561.3v0M708 493v0M708 498.5v0M708 500.9V502.1M708 505.1V507.7M708 511.2v0M708 513.8V518.2M708 522V524.9M708 527.2V528.6M708 532.3V536.4M708 540.4V543.2M709 514.8V517M709 523.5V526.1M709 529V541.1M709 544.3v0M709 547V550.4M709 552.9V554.4M710 505.5v0M710 510.2v0M710 513.5V515.5M710 519.1v0M710 523.4V526.7M710 528.9V535.6M710 538.5v0M710 541.8V553.1M710 557.5v0M711 484.6v0M711 488.5V491.2M711 494.1v0M711 509.5V510.5M711 516.1V528.2M711 531.2V537M712 475.4v0M712 493.4v0M712 506.9V508.8M712 513.1V514.5M712 518.9v0M712 521.3v0M712 528V533.4M712 537.2v0M712 541V543.7M712 546.2V550.1M712 554.8V555.9M712 560.4v0M713 512v0M713 515.4V517.2M713 521.7v0M713 525V527.6M713 529.9V550.3M713 554.2v0M713 565v0M714 519.6v0M714 524.7V530.4M714 534.5V536.1M714 540.4V546.7M714 549V553.2M714 559.3v0M714 561.6v0M715 514.9v0M715 522.4v0M715 531.8V536.9M715 539.9V547.6M715 551.2V556.5M715 558.9V560M715 562.2V565.4M715 574.5v0M716 505.5v0M716 508.4v0M716 516.3V519.6M716 523.2V525M716 528V541.2M716 544.3V550.3M716 554.7v0M717 494.7V502.5M717 505.1V511.9M717 514.2V515.1M717 519.9V520.8M717 524.9V531M717 536.6v0M717 540.6V542.7M717 547.1v0M717 573.2v0M718 468.1V469.2M718 475.4v0M718 477.6V483.3M718 487V489.1M718 491.6V502.1M718 505.6v0M718 509.1V513.6M718 526v0M718 547.3v0M718 551v0M718 563.8v0M719 477.3v0M719 484.6v0M719 487.2V489.3M719 492.3v0M719 497.6v0M719 500.1V505.5M719 513.9v0M719 517.4v0M719 521.9V522.9M719 525.2V529.5M719 532.7v0M719 536.8V538.1M719 541v0M719 549V549.7M720 489.8V492.5M720 500.1V507.7M720 512.5V513.3M720 517.9V522.6M720 530.6V537.2M720 540.7V545.1M721 515.9v0M721 524.2V528M721 531.4V536.5M721 539.4V541.5M721 544.4V549.8M721 552.8v0M721 556.6V560.4M722 490.6v0M722 497.8V503.3M722 505.7v0M722 511.5v0M722 516.1V518.8M722 522.1v0M722 524.6V533.4M722 538.2V541.5M722 545.8v0M722 551v0M722 554.6v0M723 458.5v0M723 468.5v0M723 473.4V482.8M723 485.3V487.4M723 490.3v0M723 493.4V496M723 502.4v0M723 504.7v0M723 523.4v0M723 527.3v0M723 535.2v0M723 541.2V543.1M723 549.4v0M724 482.7v0M724 489.9v0M724 493.8V495.8M724 499.2v0M724 502.1V504.5M724 508V512M724 514.4v0M724 516.7V519.5M724 523.3V527.6M724 533.8v0M724 536.9V541.6M724 544.3v0M724 549.8v0M724 553.6v0M724 557.2v0M724 569.1v0M725 505.4v0M725 511.9V515M725 519V519.8M725 522V523.5M725 526.5v0M725 529V533.2M725 535.6V536.4M725 541.6V545.6M725 549.2v0M725 552.3v0M725 555.5v0M726 477.3V478.1M726 482.6v0M726 485.8V488.6M726 491.1v0M726 493.6V497.2M726 503.1V509.4M726 511.7V513.8M726 520.4v0M726 522.9v0M726 526v0M726 529.4v0M726 536.2V537.9M726 543.8V545.4M727 493.6v0M727 497.4v0M727 500.7V503.9M727 508.9v0M727 514.5V515.5M727 518.9v0M727 522.3V537M727 540.9v0M727 543.5v0M727 547.4v0M728 506.1v0M728 510.7V529.8M728 532.8V539M728 542.6V544.3M728 551.9v0M729 507.4v0M729 513.1V514.3M729 519V522.6M729 525.5V539.1M729 543.8V545.2M729 547.8v0M730 505v0M730 514.7V531.5M730 536V540.2M730 542.7V543.4M730 547.1V549.1M730 556.3v0M731 511.2v0M731 515.1V516M731 518.9V519.7M731 522.7V531.8M731 534.3v0M731 536.9V541.4M731 546.7v0M731 549.5v0M731 558.3v0M732 502.9V504.7M732 508.5v0M732 511V520.7M732 523.3V527.5M732 530.7v0M732 533.3V536.2M732 538.8v0M732 543.3v0M733 476.7v0M733 483.8V485.7M733 489.2V491.8M733 496.3V500.6M733 508V509.8M733 515.9V517.1M733 520.8v0M733 523.3v0M733 525.5V526.3M733 530.2V534.9M733 540.4V541.8M734 477.3V478.8M734 483.4v0M734 488.5V493.2M734 499.1V500.1M734 506.3V507.7M734 510.2v0M734 516.2v0M734 521.3v0M734 523.9V524.5M734 531.7v0M734 538.4v0M734 540.8v0M734 550.4v0M735 502.3v0M735 508.1V509.1M735 511.6V512.2M735 515.1V534M735 539.1V539.8M736 508.5V513.5M736 517.3V518.2M736 520.5V533.7M736 536.6V540.1M736 544.7v0M737 508.3v0M737 512.9V524.7M737 527V537.2M737 539.4V541.1M737 543.7v0M737 547v0M737 560v0M738 500.5v0M738 504.8v0M738 510v0M738 515.4v0M738 518.4V520.3M738 524.2V543.4M738 546.3v0M739 496.3v0M739 500.2v0M739 502.7v0M739 505.1V509.2M739 513.6V521.2M739 524.4V527.5M739 532.1V533.5M739 536.8v0M739 539.8V541.1M740 515.6V519M740 522.9V525.9M740 528.4V545.6M740 548.5v0M740 552.7v0M741 508v0M741 510.5v0M741 514.4V516.1M741 519V524M741 527.9V545.2M742 487.6v0M742 491.6v0M742 502.4V515.4M742 520.4V523.6M742 526V532.1M742 540.9V542M742 547.2v0M743 478v0M743 480.9V481.7M743 488.6V496.3M743 499.3V502.1M743 504.5V508.1M743 511.8v0M743 514.7V520M743 525.3V526.4M743 530.4V531.5M744 496.8v0M744 499.9V501.7M744 504.4V511M744 514.3V517.9M744 522.7V527.2M744 529.4V541.5M745 508v0M745 511.9V513.6M745 518.1V520M745 523.1V537.9M745 540.6v0M745 543.7v0M745 547.2v0M745 556v0M746 508.7v0M746 512v0M746 514.5V517.7M746 522.2V535.8M746 538.1V540.6M746 543.4V546.1M747 506.6v0M747 515.3V517.2M747 521.1v0M747 524.1v0M747 526.7V544.5M747 547.9V549.5M747 557.9v0M748 512.2V513.2M748 516.1v0M748 519.5V522.5M748 526.5V527.2M748 530.7V537.7M748 539.9V544.7M748 547.7V549.6M748 551.8v0M748 555.1v0M749 514.6V524.7M749 527V532.8M749 535.3V537M749 539.4v0M749 545.1v0M749 548.6v0M749 554.5v0M750 506.3v0M750 509.9V512M750 514.9V517M750 520.3V524.5M750 527.5v0M750 531v0M750 533.6V542.9M750 546.1V547.9M751 500.5v0M751 511.2V520.5M751 525V536.5M751 543.1v0M752 502.4v0M752 507.6V513.7M752 516.5V519.5M752 522.4V527.4M752 531.3V534M752 537V539.7M752 547.5V548.9M753 480.4V481M753 485.1V491.4M753 493.6V494.4M753 498.9v0M753 503.7v0M753 509.1V510M753 512.7V515.7M753 525.1v0M753 532.6V535.8M753 538.2v0M753 544v0M754 476.2V479.8M754 485.2v0M754 488.6V489.7M754 495.3v0M754 498.3v0M754 502.5v0M754 508.3v0M754 511.4v0M754 513.9V514.6M754 517.1v0M754 520.9v0M754 530.5V533.5M754 536.6V538.8M754 542.6v0M754 555v0M755 499.9v0M755 502.5V503.9M755 511V517.5M755 520.2V532M755 538v0M755 541.8v0M755 553.2v0M755 557.9v0M756 478.7V479.8M756 482.4V485.6M756 488.3v0M756 492.5v0M756 495.8V499.1M756 503.2V508.5M756 512.8v0M756 516.9V520.2M756 524v0M756 530.5V533M756 536.4v0M756 539.3v0M756 546.7v0M757 496.9V498.1M757 503.1V508.3M757 516.3v0M757 519.3V535.7M757 538.1V540.9M757 545.5v0M757 552.7v0M758 501v0M758 503.5V504.6M758 507.2v0M758 510.4V511.2M758 515V530.3M758 532.7V534.1M758 538.4V540.1M758 543V545.5M759 478.6v0M759 486.8v0M759 490v0M759 494.6v0M759 496.9V521.9M759 524.3V525.5M759 538.3v0M759 547.4v0M760 486v0M760 491v0M760 494.3V499.5M760 502.3V508.1M760 512.9v0M760 515.4V523.2M760 525.8v0M760 530V532M760 536.9v0M760 541.4v0M760 548.7v0M761 492.1v0M761 506.6v0M761 510.5v0M761 513.2V518.3M761 521.4V535.7M762 485.8V489.7M762 493.4V502.6M762 505.8V507.3M762 510.7V518.3M762 525.1V525.9M762 531.6V533.4M762 539.2v0M763 480.1V481.9M763 484.1V495.7M763 499v0M763 501.5v0M763 504.8v0M763 509.3v0M763 513.5v0M763 517.3v0M763 532.4v0M763 535.2V536.2M763 551.9v0M764 478.1v0M764 489.1v0M764 492.3V495.8M764 499.9V502.1M764 504.3V512.8M764 515.2V516.1M764 520.2V521M764 525.8V526.7M764 537.6V543.1M765 507.5v0M765 512.3v0M765 514.9V515.9M765 519.3V538.4M765 540.8V542.9M765 545.9V546.6M766 508.8v0M766 513V515M766 520.7V536.5M766 539.5V543.8M766 549.5v0M766 554.5v0M767 506.3v0M767 511.5V518.5M767 521V524.1M767 526.5V528.5M767 530.9V531.7M767 534V536.6M767 542.1V543.6M767 553.1v0M767 555.5v0M768 496.5v0M768 503.8V504.9M768 508.5V522.4M768 525.9v0M768 528.6V533.3M768 535.8V536.9M768 545.8V547.7M769 491.8V492.5M769 500.5v0M769 504.8v0M769 507.7V512.2M769 514.5V515.7M769 518.6v0M769 522.1v0M769 524.9V535.9M769 539.8v0M769 542.7V544.8M770 491.7v0M770 495.9V499M770 503v0M770 506.1V509.8M770 513.3V521.8M770 524.2V526.6M770 528.8v0M770 534.3v0M771 508.6V509.9M771 512.5V537.9M772 479.5V481.5M772 486.6V489.7M772 495V502.3M772 506.5V509.9M772 512.5v0M772 515.3V518M772 522.8V525.7M772 529.5V530.5M772 540.6v0M773 478.2V484.1M773 486.4V490.9M773 493.7V495.4M773 500.9v0M773 506.4v0M773 511v0M773 517.6v0M773 519.9v0M773 522.6v0M773 525.7v0M773 533v0M773 535.6v0M773 551.2v0M774 514.8V527M774 530.2V533.5M774 536V538.3M774 540.8v0M774 543.8V546.9M774 549.6v0M775 508.5v0M775 513.9v0M775 516.5V522M775 525.2V538.4M775 542.1V542.8M775 545V546.3M776 497.7v0M776 501.9V504.8M776 507.7v0M776 511.6v0M776 514V532.9M776 536.8v0M777 499.5v0M777 502.7v0M777 505.5V513.1M777 515.6V518.5M777 521.1V522.6M777 526.9v0M777 530.6V535.7M777 538.4V546.1M778 508.3v0M778 511.5v0M778 516.5V522.8M778 526.3V531.6M778 534.2V538M778 541.4v0M778 547.3v0M778 550.5v0M778 554.6v0M779 509.5v0M779 514.4v0M779 518.4V530.7M779 534V537M779 539.7v0M779 543.3v0M779 549.2v0M779 551.6v0M780 510v0M780 514.8V515.4M780 518.5V520.6M780 523.1V527M780 530.6V548.7M780 552.6v0M780 556.3V557.5M781 501.7V506.3M781 511V514.1M781 516.7V527.4M781 529.9v0M781 533.3v0M781 535.7v0M781 539.1v0M781 541.6V542.8M782 488.1V488.9M782 493.1V495.4M782 500.8V502.6M782 505.9V509.7M782 512.6V514.5M782 516.8V517.6M782 520.3v0M782 523.3V524.6M782 537.7V539.4M782 545.4v0M782 548.2v0M783 478V481.1M783 483.8v0M783 491.8V492.7M783 495.4v0M783 517.5v0M783 521.2V523.7M783 528.1V532M784 483.5v0M784 491.9v0M784 494.4v0M784 496.9V499.7M784 505v0M784 510.6V512M784 514.9v0M784 517.7V519.7M784 523.1V527M784 529.2v0M784 533.4V536.3M784 539.1v0M784 543.6v0M785 505.2V508.2M785 510.9V521.3M785 524.4v0M785 526.7V533.6M785 536.6V538.4M785 541.7V542.4M785 546.4v0M786 515.1v0M786 518.2V522.2M786 526.2V529.6M786 532.7v0M786 537V550.7M787 499.4v0M787 502.2v0M787 505.4v0M787 509.1V516.4M787 519V520.4M787 523.7V536.6M787 539.3v0M788 501.5V503.1M788 511V519.2M788 521.8V533.5M788 536.5V538.6M788 544.7v0M789 478.5v0M789 491.6v0M789 494.5v0M789 502.2v0M789 507.1V507.8M789 510.6V516.9M789 519.3v0M789 523.3V525.5M789 527.8V530.2M789 532.8V534.8M789 537.4V539.4M789 542v0M789 546.3v0M790 487.2V488.7M790 491.2V493.6M790 496.6V500.4M790 504.4V510.1M790 513v0M790 515.7V516.4M790 518.7V523.3M790 526.8V528M790 530.5v0M790 534v0M790 537.7V539.9M790 542.9v0M791 487.9v0M791 491.7v0M791 497.9V499.7M791 502v0M791 505.6V511.1M791 515.1V519M791 523.3v0M791 528.1V529.6M791 537.3V539.6M792 476.2V487.7M792 490.1V492.4M792 495.5v0M792 498.7v0M792 504.8V505.9M792 511v0M792 525.8v0M792 529v0M792 531.4v0M793 477.2V478.5M793 481.8V483.4M793 485.8V488.1M793 490.8v0M793 500.9V502.5M793 506.7V514.7M793 518.9V523.6M793 527V528.7M793 533V534.3M793 537.4v0M793 552.9v0M794 501.5v0M794 508.9V510.2M794 515.3v0M794 518.2v0M794 521.7v0M794 525.8V531.5M794 535.7V539.9M794 542.1V545.3M795 499.9V501.8M795 511.2V514.8M795 517.4V518.5M795 520.7V522.7M795 527.8V536.4M795 540.5V543.6M796 497.5v0M796 500.6v0M796 507.2V514.2M796 516.6V525.4M796 529.7V533M796 539V539.8M796 542.3V546.1M797 509.5v0M797 513.3V514M797 518.9V524.6M797 527.3V539.7M797 542.6V547.3M798 509.4v0M798 513v0M798 515.4V519.5M798 523.1V536.9M798 539.8V544.2M798 549v0M799 506.9v0M799 511.5V513.8M799 516.9V526M799 529.7v0M799 533.8V537.9M799 540.2V545.3M799 550.4v0M800 510.5V513.4M800 516.9V521.1M800 523.6v0M800 526.6V531.6M800 535.8V539.8M800 542.7v0M800 546.2v0M801 510.2V512.6M801 516.9V529.7M801 533.4V534.3M801 537.4V539.6M801 542.2V545.2M801 548.8V550.6M802 501.7v0M802 505.5v0M802 507.8v0M802 511V515.8M802 521.5V524.9M802 527.8V535.9M802 539.8v0M802 543.6v0M802 547.6v0M803 499V501.5M803 504.2V506.5M803 510.4V516.5M803 519.1v0M803 521.4V526.9M803 530.3V531.8M803 535.5v0M803 539v0M804 476.6V488.4M804 490.8V493.1M804 497.8V499.9M804 502.8v0M804 505.1v0M804 510.8V512.8M804 517.7v0M804 525.7V527.8M804 532.6v0M804 543.7v0M805 477.4V478.1M805 483V485M805 490.5V491.2M805 495.4v0M805 498.1V502.2M805 506.6V513.1M805 518V520.3M805 526.4v0M805 548.2v0M805 550.5v0M805 553.4v0M806 503.5v0M806 509.2v0M806 515.2V520.6M806 523V529M806 531.3V544.9M807 493.3v0M807 502.7v0M807 505.1v0M807 510.2V515.7M807 518.8V526.1M807 529.1V532.5M807 536.2V539.3M807 543.8v0M808 503.7V504.5M808 508V508.9M808 511.9v0M808 514.7V533.2M808 536.4v0M808 538.8V541.7M808 549.5v0M809 488.6v0M809 496.6V498.4M809 506.7V511.6M809 513.9V515.2M809 518.4V520.5M809 522.9V527.1M809 529.8V537.9M810 490.9v0M810 499.7V501.3M810 512.6V536.5M810 543.3v0M810 548.7v0M811 482.7V487.8M811 492.6V493.5M811 498.7V502.1M811 504.6V505.7M811 508.7V513.9M811 516.3v0M811 519V519.9M811 523.4V525.8M811 532.6v0M811 535.9V538M811 542.8v0M812 504.4V505.9M812 509.1v0M812 513.3v0M812 516.6V518.9M812 521.8v0M812 524.1V542.1M812 549.6v0M812 559v0M813 500.6v0M813 507V515.1M813 517.4V519.7M813 522V530.6M813 534.4v0M813 537.4V539.8M813 542.5v0M813 547.4v0M814 495.5v0M814 500.2v0M814 505.8V525.2M814 527.9v0M814 532V534.4M814 537.4V542.1M814 549.2v0M815 477.1V481.1M815 485.4v0M815 488.3V497.8M815 500.9v0M815 507.2v0M815 510.7V513.2M815 520.6v0M815 523.9v0M815 527.8v0M815 531.3v0M815 535.8v0M815 538.3v0M815 542.5v0M816 481.3V483.7M816 490v0M816 493V494.5M816 498.9V500.9M816 505.3v0M816 509.7V515.8M816 520.6v0M816 524.9v0M816 529.7V531.9M816 535.6V536.8M816 539.4v0M817 492.7v0M817 495.5v0M817 498.6v0M817 502.4V504.6M817 507.8V508.8M817 511.6V512.2M817 516.7V519.4M817 527.1V531.2M817 533.5V534.4M817 536.9V538.4M817 541v0M817 546.3v0M818 502.6V505.6M818 509.5V518.3M818 521.1V525.4M818 527.9v0M818 530.5V533.4M818 536.3v0M818 539.8v0M819 505V506.4M819 509.3V516.3M819 519.2v0M819 522V526M819 528.4V532.3M819 534.7v0M819 537v0M819 539.8V542.6M820 508.9V514.2M820 516.6V525.9M820 528.3V533.4M820 535.7v0M820 538.2V541.3M820 546v0M820 549.6v0M821 512.7V516.3M821 519.3V541.5M822 504.9V507M822 509.6V511.2M822 515.4V518.7M822 521.3V530M822 532.4V535.6M822 539.3v0M822 542.9V546.9M823 498.2v0M823 500.9V502.4M823 504.8v0M823 508.1V511.1M823 514.1V516.7M823 520.2v0M823 524.3V526.3M823 528.9V533.2M823 537.2v0M823 540.8V543.2M823 552.5v0M824 477.1v0M824 483V484.8M824 488.9v0M824 491.2V491.9M824 495.3V499.5M824 502.1v0M824 511.8V513.4M824 516.3v0M824 519.8V520.6M824 524.4v0M824 529v0M824 534.1V536.4M824 539.6v0M825 476.1V477.6M825 482V486.5M825 492v0M825 494.4V495.7M825 500.1v0M825 508.4V510.6M825 518v0M825 521.7v0M825 525.5v0M825 529.3v0M825 551.6v0M826 496.4v0M826 505V510.5M826 514.6V516.6M826 518.9V519.7M826 522.8v0M826 525.6V536.2M826 541.5V542.7M827 496.3V497.1M827 502v0M827 505.1V506.1M827 512.1V520.6M827 523.7V530.5M827 532.8v0M827 537.3v0M827 541.9v0M827 547v0M828 506.2v0M828 509.6v0M828 514.2V515.2M828 519.4V521.5M828 525.1V540.4M828 545.2v0M828 549.2v0M829 509.3v0M829 514.7v0M829 518.6V526.4M829 530V533.8M829 537.6V540.2M829 542.7V543.6M829 550.7V553.6M830 477.9v0M830 485.1v0M830 489.3v0M830 493.2v0M830 496.6v0M830 501.2V503.1M830 506.2V508.8M830 512.1V513.6M830 516.4v0M830 519.1V521.9M830 525.7V526.7M830 531V533.2M830 539.8v0M831 505V506.6M831 510.4V519M831 522.5V526.4M831 529V530.3M831 532.8V538.2M831 543.4V544.8M831 548.2v0M832 516.2V518.4M832 521.1V534.4M832 538.9V542.2M832 545.6V547.4M833 511V514.8M833 517.3V524.4M833 527.4V530.8M833 533.4V535.2M833 538.6v0M833 540.9V545.7M833 549.6v0M834 506.9v0M834 514.6v0M834 517.3V521.5M834 523.9V542.1M834 547.2V548.4M835 507V509.3M835 513.3V514M835 518.1V519.1M835 521.9V528.3M835 531.4V538.6M835 543.9V544.8M836 499.7v0M836 507.3V512.8M836 515.6v0M836 518.7V524.2M836 526.5V528.6M836 532V535M836 539.6v0M837 510.3v0M837 514.9V519.2M837 524.4V525.9M837 530.5V547.6M837 551.5V553.4M838 498.7v0M838 505.9v0M838 509.1v0M838 512.5V514.2M838 516.6V535.3M838 540.4V543.3M838 546v0M839 459.6V461.3M839 469.9V473.3M839 477.8V478.9M839 485.8V489M839 491.8V493.5M839 496.2v0M839 498.6V508.4M839 516.4v0M839 518.7v0M840 474v0M840 478.3V479M840 482.4V485.7M840 488.6V492.6M840 495.8v0M840 500.8V504.1M840 508V509.1M840 511.9v0M840 516.2v0M840 519.5v0M840 522.1V524.7M840 527.8v0M840 536.9v0M841 493.9v0M841 500.5v0M841 505.5v0M841 509.4V512.8M841 515.9v0M841 518.5V531M841 534.9V538.1M841 544.6v0M842 491.2v0M842 494.6V495.6M842 507.5V509.7M842 512.9V522.2M842 528.2V531.7M842 534.2V536.9M842 540.3v0M843 501.5V506.1M843 510V511M843 513.6V514.5M843 517.5V523M843 525.6v0M843 528.9v0M843 531.3V536.1M843 539.4v0M843 543v0M844 514.5v0M844 517V521M844 524.5V526.9M844 529.2V531.6M844 537.1V540.5M844 542.7V549.2M844 553.1v0M844 555.8v0M844 558.1v0M845 495.1v0M845 498.7v0M845 504.1V505.7M845 508.2V510.6M845 513.1V515.1M845 518.5V522.2M845 524.4V526M845 528.4V535M845 538v0M845 550.6v0M845 553v0M846 485.5v0M846 489.1V490.4M846 493.7V494.6M846 497.7V504M846 506.7V508.3M846 511.5V518.7M846 521.9v0M846 533.3v0M846 536v0M846 542.1v0M847 497.1V499.1M847 506.5v0M847 509.4V530M847 533V537M847 540.3V541.1M848 501.2v0M848 504.3v0M848 507.3V517.4M848 519.9V529.3M848 533.6V538.7M848 541.1v0M849 484.2v0M849 491.8v0M849 495.1V498.3M849 501.2V502M849 504.6V511.4M849 513.9V518.2M849 521.6V524.6M849 526.9v0M849 531.4v0M849 533.9v0M849 538.3v0M850 463.2v0M850 465.8v0M850 472.1v0M850 474.9V477M850 481.4v0M850 486.1V488.3M850 492.4v0M850 495.9V504.4M850 506.9V510.7M850 513.6V516.1M850 519.7v0M850 523.2v0M850 527.8v0M850 530.7V532.3M850 536.2v0M851 494.5v0M851 505.2v0M851 509.1V512.1M851 515v0M851 518.2V521M851 524.6V536M851 539.2v0M851 543.6V547.7M852 495.8v0M852 498.8v0M852 501.3v0M852 503.7V505.8M852 512V514.9M852 518.1V526.1M852 530.8v0M852 534.1v0M852 536.5v0M852 540.3V542.4M853 456.8v0M853 474.3v0M853 483.7v0M853 486.3V487.5M853 496.3v0M853 503.2v0M853 505.6V507.4M853 510.5v0M853 513.5V521.2M853 523.6V525.2M853 535.6v0M853 541v0M854 456.6V459.5M854 464.8V466.6M854 469.6v0M854 472.7V475.5M854 486.7v0M854 528.4v0M854 531.6v0M854 548v0M855 470.6v0M855 475V477.9M855 483V484.5M855 488.5V491.3M855 493.8V501.4M855 506.6V516.2M855 520.6v0M855 526.6V527.5M855 542.8v0M856 474.9v0M856 478.1V479.8M856 490.6V495.7M856 498V500.1M856 504.5v0M856 507.4V508.9M856 512.7v0M856 515.4V522.5M856 525.4v0M856 534v0M857 489.6V491.7M857 494.8V496.9M857 502.4V505.9M857 509.6V517.7M857 522.5V526M857 531.4V533.8M857 536.6v0M857 544.7v0M858 489.9v0M858 501.6v0M858 504.7v0M858 507v0M858 509.3v0M858 511.9v0M858 514.4V521.5M858 525.4V527.1M858 530.9v0M858 534.1V538.1M858 540.3V541.2M858 543.5V545.4M858 547.7V549.1M859 476V479.5M859 483.8V485.2M859 488.3V490.3M859 492.7V500.7M859 503.2V511.5M859 513.8v0M859 521.2V522.9M859 535.9v0M860 495.3v0M860 505.6v0M860 510.3v0M860 512.6V518.1M860 521v0M860 523.3V534M860 537v0M860 541.4V543.3M861 486.8v0M861 492.9v0M861 497.7v0M861 501.8V509.7M861 512.8v0M861 518V532.2M861 535.3V537.6M861 540.3v0M862 470.1v0M862 475.6v0M862 482.4V498.4M862 501.6v0M862 504.1v0M862 506.7V512.6M862 518.2V521.2M862 530.6v0M863 485.2V489.2M863 493.2V501.1M863 503.4V507.9M863 511.2V515.5M863 518v0M863 522.1V523.6M863 538.8v0M863 541.2v0M864 483.1v0M864 486.8v0M864 490.6V491.5M864 496.1V499.4M864 501.9v0M864 505.8v0M864 510.7V518.7M864 521.2v0M864 525.7V526.5M864 530.5V533.4M864 541.1V543.6M864 546.8v0M865 489.9v0M865 494.6V495.6M865 498V499.3M865 501.7V507.1M865 511.6V512.3M865 516V518.4M865 520.8V522M865 524.9V527M865 531.4v0M865 535.4V542.9M866 494v0M866 497.7v0M866 502.4v0M866 506V510.3M866 512.6v0M866 515.1V528.3M866 531.1V533M866 535.4v0M867 508.4V513.4M867 517.5V519M867 521.4V523.8M867 526.1V528.2M867 530.5V534M867 537.9v0M867 540.3V542.4M868 488.5v0M868 495.5v0M868 498.4V501.5M868 505.4v0M868 507.8v0M868 510.9V526.1M868 529.6V537M868 544.8v0M869 456.8v0M869 467.2v0M869 471.1V474.9M869 477.3V481.8M869 484V494.1M869 499.6V501.6M869 504.3v0M869 511.4v0M869 515.4v0M870 476.9v0M870 486.5v0M870 495.1v0M870 500.7V502.7M870 508v0M870 510.6v0M870 513.1V514.2M870 517.5V522.5M870 524.9v0M870 527.6V532.9M870 535.7V536.4M870 540.6V543.8M870 548.8v0M870 552.1v0M871 496.5v0M871 503.4v0M871 508.7v0M871 515V531.3M871 534.4V537.4M871 541V542.5M872 494.3v0M872 504.4v0M872 508.8V510.2M872 512.8v0M872 516.2V532.5M872 535V537.1M872 539.9V541.9M872 554.4v0M873 472.9v0M873 484v0M873 486.4v0M873 493.1v0M873 496.7v0M873 500.6V501.7M873 504.8V517.1M873 519.9V523.2M873 529.3V530.5M874 508.3V509.5M874 512.5V523.2M874 526.4V536.9M874 541.4v0M874 547.4v0M874 554.4v0M875 496.4v0M875 499V500.8M875 506V513.2M875 516V519.1M875 521.9V529.2M876 473.3v0M876 479.9V481.1M876 483.7v0M876 487.7V498.5M876 501.4V505.2M876 507.9V509M876 513.5v0M876 515.9V517.9M876 520.2v0M876 529.2v0M876 536.7v0M876 539.1v0M876 543.9v0M877 469.9v0M877 472.9V474.2M877 477v0M877 482.5V483.8M877 489.2v0M877 492.9v0M877 495.3V504.9M877 507.8v0M877 512.5V516M877 520.5V524.3M877 535.9v0M877 549.3v0M878 486.8v0M878 495.4v0M878 498.5v0M878 502v0M878 504.9V506.9M878 509.2V510.6M878 513.5V515.3M878 518.2V523M878 530.2V532.7M878 536.6V538.2M878 543.9v0M879 506.8v0M879 510.4v0M879 518.4V520.3M879 523.3v0M879 525.7V529.4M879 531.7V537.2M879 539.5V543.5M879 545.9v0M879 548.4v0M879 551.8v0M880 508v0M880 511.7V512.5M880 515.7V517.5M880 519.8V521.6M880 524.8V536.2M880 539.1V542.3M880 549.7V550.4M881 504.1V508.5M881 511.2V517.1M881 520.1v0M881 522.9V526.6M881 529.1V531.3M881 534.1V537.9M881 541.3V542.4M882 485.1v0M882 489.8v0M882 492.9v0M882 499.9V502.4M882 506.8V515M882 517.3V518.9M882 522.8V528.4M882 531.8v0M882 535.5V536.5M882 539.8v0M883 457.1V459.2M883 463.5V466.4M883 468.9V470.2M883 473.1v0M883 478v0M883 481.4v0M883 483.9V493.8M883 501.4v0M883 506.2V507.2M883 522.9v0M883 535.7v0M884 475.6v0M884 479.3v0M884 492.9V497.6M884 500.3V503.7M884 506.3V510.2M884 515.1V515.7M884 518.7V519.9M884 527.2V531.1M884 536v0M884 538.2v0M884 541.1V542.5M884 557.2v0M885 507.8V510.3M885 512.7V513.3M885 516.4V526.9M885 530.2V535.4M885 538.2V541.3M885 544.4V546.2M886 471.6v0M886 474.6v0M886 481.3v0M886 487.8v0M886 490.7V493.7M886 497.4V498M886 500.3V505.5M886 511v0M886 513.4V515.1M886 521.9v0M886 524.5v0M886 527.1v0M886 529.4v0M886 535.7V537.2M886 539.5v0M887 481.8v0M887 486v0M887 499.2V500.1M887 503.7v0M887 507V508.9M887 513.6V524.8M887 529.7V532.1M887 537.8v0M888 496.2v0M888 498.9V501.3M888 507.8v0M888 511.9V518.6M888 521V522.9M888 527.9V533M888 536.3V537.9M888 542.6V546M888 549.4v0M889 491.6V492.6M889 494.8V500.1M889 502.9v0M889 505.5V506.8M889 509.6V510.6M889 514.2V518.8M889 521.2V522M889 525.5V528M889 531.3v0M889 539.9V542.8M889 545.3v0M889 551v0M890 483.2v0M890 497.2v0M890 501.9v0M890 505.1V509.3M890 512.6V519.6M890 522.8V526.8M890 530.4v0M890 533.8v0M890 536.6v0M890 540.8v0M890 543.4V545.5M890 550.8v0M891 507v0M891 511.8V517.5M891 520.4v0M891 524.3V530M891 532.2V533.3M891 537.5v0M891 541.4V542.8M891 546v0M891 548.8V551.4M891 554.6v0M892 507.4v0M892 511.1v0M892 514.4V530.6M892 532.9V535.7M892 538.2V539.6M892 542.1v0M892 546.1V546.9M893 501.1v0M893 503.5V504.2M893 506.6V510.6M893 513.6V516.4M893 518.9V527.9M893 533.6V536.6M893 539.1v0M893 542.8v0M894 501.1V502M894 505.9V518.4M894 521.2V524.9M894 527.3v0M894 533.1V533.8M894 536.2v0M894 538.7v0M895 460.2V461.3M895 465.9v0M895 471.8v0M895 475.3v0M895 477.6V478.8M895 484V486.9M895 491.3V495.3M895 498.4V500.1M895 506.9v0M895 510.9V512.8M895 518.1v0M895 520.6v0M896 456.7V457.6M896 460.3v0M896 464.1V467.2M896 473.7v0M896 476.4V477.4M896 489.1v0M896 508v0M897 470.2v0M897 485.2v0M897 488.7V490.9M897 493.8V495.2M897 499.8v0M897 502.5V516.3M897 520V526.5M897 535.3V536.3M897 558.2v0M898 484.8v0M898 488.3V496.5M898 501.4V523.4M898 528v0M898 532.3V533.3M899 496.9v0M899 501v0M899 503.5v0M899 507V509.1M899 512.1v0M899 517V526.6M899 528.9V531.9M899 534.8v0M899 537.6v0M899 541v0M900 513V515.5M900 517.9V524.3M900 528.2V537.1M900 539.8v0M900 542.2V546.6M900 549.5V550.6M900 555.9v0M900 559v0M901 505.8v0M901 516V521.7M901 524.2V541.1M901 544.2V546.2M901 553.9V555.1M902 458.1v0M902 469.3V474M902 482V484.5M902 487V492.1M902 495.7v0M902 498.7V502.9M902 505.5V507.4M902 511.5V512.9M902 515.1V517.9M902 525.5v0M903 465.2V469.2M903 474.5v0M903 481.2v0M903 484.4V488.1M903 491.8V495.6M903 497.9V498.8M903 502.1V503.1M903 506.1V511.1M903 517.6V519.1M903 524v0M903 532.7v0M904 505.2V507.2M904 511.7V519.1M904 521.8V534.8M904 537.3V540.3M904 542.5v0M904 546.5v0M904 550.1v0M904 560.3v0M905 510.3V518.4M905 521.2v0M905 523.5v0M905 526.1v0M905 528.4V533.6M905 538.5V551.1M906 509.2v0M906 514.5V516.7M906 519V523.5M906 526V536M906 541.4V543M906 550.6V551.9M907 501.1v0M907 505.9v0M907 509v0M907 511.3v0M907 515.6v0M907 518.3V522.4M907 524.6V533.5M907 536.1V541.3M907 544.1V545.2M907 547.5v0M908 506V509.8M908 512.6V513.7M908 516.7v0M908 519.2V526.7M908 529.7v0M908 533V537.4M908 548v0M908 552.8v0M909 505.8V507.4M909 510.5v0M909 515.1V522.5M909 525V538M909 540.5v0M909 544.3V545.8M910 506.6V513.7M910 516.3V527M910 529.3V534.2M910 536.5v0M910 539.5v0M910 543.3v0M910 550.5v0M911 470.7V471.5M911 476.9v0M911 480.2V481.4M911 484.5V485.7M911 488.3V499.8M911 505V506.7M911 508.9V510.4M911 525.2v0M911 527.5v0M911 533.4v0M911 546.7v0M911 551.7v0M912 483.9V485.7M912 490.5v0M912 497v0M912 504.6V518M912 520.7V526M912 528.5v0M912 530.7V532.6M912 545.2v0M913 491.1v0M913 496.4V498.9M913 505.9v0M913 508.6V513.8M913 516.9V520.1M913 524.2V529.7M913 534.1v0M913 539.8V541.5M914 490.8v0M914 494.4v0M914 501.1V502.7M914 504.9V506.7M914 512.4V514.6M914 517V518.9M914 523.9V531.1M914 533.5v0M914 535.8V542.2M915 507.7v0M915 511.4V516.1M915 518.4V520.5M915 523v0M915 525.7V539.4M915 543.4v0M916 498.2V500.3M916 507.3V523.3M916 526.4V529.5M916 537.4v0M916 542.1v0M917 500.1V502.2M917 506V510.5M917 513.5V516.8M917 520.3V521.2M917 524.3V526M917 528.2V532.4M917 535.9V537M917 541.9V543.7M917 546.2v0M917 551.6v0M918 480.7V484.6M918 489.4V498.4M918 501.6V513.7M918 517.3v0M918 530.5v0M918 538.6v0M918 541.4v0M919 485.4v0M919 490.1v0M919 499.2v0M919 501.8V502.7M919 507.6V508.8M919 511.6V514.5M919 517.5V518.8M919 521.2v0M919 523.7V526.4M919 528.9V534.4M919 538V539.6M919 545.8v0M920 499.9V503.4M920 506.5V509.2M920 511.7v0M920 514.6V519.4M920 521.6V529.5M920 532.9V534.1M920 536.9v0M920 539.1v0M920 542V543.2M921 505.1v0M921 518.4V529.9M921 535V545.7M921 551.5v0M922 503.8V504.6M922 507.1V509M922 512.5v0M922 514.7V519.8M922 523.7V527.9M922 531.7V539.4M923 495.9v0M923 498.5V501.5M923 504.7V506.2M923 509.3V511.9M923 514.3v0M923 516.6V529.2M923 532V532.9M923 536.4v0M923 542.6v0M924 456.9v0M924 474.5v0M924 481.5V483.2M924 487.2V497.9M924 503.5V504.1M924 506.9V507.9M924 510.2V512.9M924 516.8V520.9M924 523.2v0M924 526.6v0M924 542.2v0M924 545.8v0M925 456.7V458.7M925 464.3V466.6M925 469.2V470.1M925 488.4v0M925 492.4v0M925 506.6v0M925 527.8V529M926 456v0M926 458.5V459.9M926 468.6v0M926 472V473.9M926 481.4V484.4M926 486.9V490.1M926 495.3v0M926 499.6V500.7M926 504.2v0M926 509.4v0M926 517.5V519.7M926 523.1V526.2M926 529.7V531.7M926 538.4v0M927 491.1v0M927 496.3V498M927 501.2V505.6M927 508.1V515.9M927 520.1V522.4M927 527.7V529.3M927 532.1V534.9M927 538.2v0M927 540.4v0M927 543v0M927 548.1v0M928 487.7v0M928 490.2v0M928 493V498.3M928 502.3V505.4M928 510.5V511.1M928 513.6V524.7M928 527.9V529.5M928 531.7v0M928 535.2v0M928 541.4v0M929 502.5v0M929 505.6v0M929 507.9V510.4M929 512.8V514.3M929 516.7V518.4M929 520.8V529.6M929 532.5V537.4M930 470.1V471.5M930 482.8V485.3M930 487.5V491.3M930 493.8V498.3M930 502v0M930 505.1V506.1M930 508.5V511.5M930 517.2V520.4M930 523.5V525.9M930 540.2v0M931 472v0M931 475.4v0M931 479.4V486.8M931 492.5v0M931 495.2V499.7M931 501.9V504.9M931 507.3v0M931 510.8V512.1M931 515.3V516.2M931 529.5v0M932 498.2V499.6M932 503.4V524.7M932 528V529.4M932 532.6v0M932 535.6v0M933 500.2V502.4M933 510.7V513.7M933 517.4V519.5M933 522.2v0M933 525.2V542.6M934 509.7v0M934 514.1v0M934 516.7V521.5M934 524.6V536.1M934 541.1V543.6M934 546.2v0M935 484.2v0M935 494.4v0M935 496.7v0M935 499.6v0M935 501.9v0M935 505.2v0M935 509.7V510.7M935 514.4V519.5M935 522V530.1M935 533.5v0M935 537.6v0M935 545.8v0M936 512.9v0M936 517.8v0M936 520.1v0M936 526.6V527.7M936 531.4v0M936 536.5v0M936 542.2v0M937 484.9v0M937 489.7V492.2M937 496.9V498.6M937 501.9V504.1M937 507.5V510.2M937 513.2V517.6M937 521.4V523.9M937 527.6V530.5M937 533.5V535.9M937 542.3v0M938 507.5V508.7M938 513.9v0M938 516.5V518.4M938 521.3V522.6M938 525.4V540.8M939 511.3V513.7M939 517.5v0M939 521.2V531.6M939 534.2V534.9M939 537.5V538.8M939 542.7V544.4M940 510.5v0M940 514.6V537.6M940 539.9V541.3M940 545.6V546.3M941 514.9v0M941 521.6V538.7M941 542.5V543.9M941 548.9v0M942 523.4V525.2M942 529.6V537.6M942 540.1v0M942 542.6V555.9M942 559.1v0M943 531v0M943 538.2V540M943 543.7V550.9M943 553.4V558.3M943 562.4V569.8M943 573.8V576.1M944 525.9v0M944 535.6V539.3M944 542.8V544.5M944 550.7V551.6M944 553.9V569.4M944 573.4v0M944 575.6v0M945 520.3v0M945 523.2V538.8M945 541.6V552.2M945 557v0M945 561.9v0M946 509.6v0M946 517.1V545M947 486.5v0M947 502.7V504.1M947 507v0M947 513V516.7M947 520V521.2M947 525V531.3M947 533.6v0M947 537.5V538.6M948 517.8v0M948 522.6v0M948 525.2v0M948 529.3v0M948 537v0M948 541.4v0M949 485.5V487.1M949 491.4V493.6M949 495.9v0M949 499.5V501.5M949 504.8V505.4M949 511.4v0M949 514.1v0M949 516.8v0M949 520.3V522M949 526.4V530.1M949 535.2V536.5M950 511.1V517.7M950 520v0M950 522.5V523.7M950 526.1V535.6M950 539.3v0M951 508.1V520.8M951 523V530.7M951 533.4V535.8M951 538.1V541.5M951 543.7v0M952 516.5V542.9M953 521.2V533.8M953 538.2V548M953 550.3V553.9M953 557.4V558.5M954 537.2V548.1M954 550.3V568.4M955 531.6V534M955 539.2V542.6M955 545.2V546M955 548.4V549.5M955 552.4V560M955 563.2V565.4M955 570.1V571.3M956 521.1V522.2M956 526.3V527.3M956 530.9V546.4M956 548.7V553.3M957 509.1v0M957 514.9V543.9M958 506.4v0M958 514V517.7M958 520.5V529M958 531.3V535.6M958 539.3V541.7M958 546.9v0M959 510.2v0M959 514.4V522.8M959 525.2V529.1M959 531.7v0M959 534.2V537M959 539.7V545.4M960 514.6v0M960 522V523.3M960 527v0M960 530.3V537.2M960 542.4V554.9M961 527v0M961 532.8v0M961 536v0M961 541.8V547.1M961 550.5V561.5M961 566.3v0M961 572.4v0M962 519.9v0M962 530.6v0M962 532.8v0M962 537V562.7M962 565.1V567.1M963 501.5v0M963 509.9v0M963 512.6V521.9M963 525.8V529.3M963 531.7V537.9M963 540.6V542.3M963 549.3v0M964 484.5v0M964 488.2v0M964 492.7V495M964 504.4v0M964 508.2V515.7M964 521.2V526M964 531.8v0M964 543.2V544.2M965 518.6v0M965 522.5v0M965 525.5V532.5M965 536.4v0M966 486.1V487.7M966 498v0M966 500.7V501.8M966 505.3V507.6M966 511.3v0M966 514.9v0M966 518.7v0M966 521.8v0M966 524.9V528.6M966 531V532.5M966 537.1v0M966 539.9v0M967 507.9v0M967 510.2v0M967 514.8V538.6M967 542.7v0M968 513.2V515.4M968 517.7V525M968 527.7V535.2M968 543.7v0M969 508.9v0M969 511.4V518.8M969 522.2V526M969 528.4V538.4M970 495v0M970 498v0M970 501.9V506.3M970 512.1V523.2M970 525.8V527M970 529.5v0M970 532V534.1M970 538.9v0M970 543.3v0M971 503.4v0M971 511.7v0M971 514.8V525.1M971 527.8V530.1M971 534.4V535.6M971 539V539.9M972 509.8V516.8M972 521.1V526.7M972 529.3V533.7M972 536.1V538.1M972 541.3v0M972 546.6v0M973 512.6v0M973 515.1v0M973 518.1V532.4M973 534.9V536.3M973 539.9V541.7M973 544.2V545.5M973 547.9V553.7M974 529.7V530.6M974 534.8v0M974 537.4V558.7M974 563.7v0M975 523.1v0M975 528.9V538M975 540.4V552.9M976 501.3V502.3M976 511.8V515.4M976 519.3v0M976 522.2V537.4M976 542V543.4M977 492.5v0M977 496.2V498.5M977 510.9v0M977 515.7v0M977 519V522.4M977 524.7v0M977 530.5v0M977 533.8v0M977 547.5v0M978 489.4v0M978 491.8V493M978 516.1v0M978 521.2V522.6M978 527.5v0M978 534.6V535.4M978 538.2v0M979 495.3v0M979 501.5v0M979 505.2V514M979 516.4V520.7M979 522.9V534M979 540.5V542M980 503.2v0M980 508.9V525.1M980 527.9V531.9M980 536.2V537.5M980 539.9V540.6M981 511.1v0M981 514.4V519.6M981 522.1V529.5M981 532.4V534.1M981 537.4V540.5M982 514.8v0M982 517.9V519.9M982 522.4V523.3M982 526.4V537.3M982 540V541.3M982 543.9V545.1M983 521.1v0M983 526V548.3M983 561.5v0M984 535.1V537.6M984 541.1v0M984 543.9V563.9M984 569.1V570.4M985 517.2v0M985 519.5v0M985 525.2V536.1M985 539.1V548.3M985 552.8V554.1M985 559.9v0M985 563.9v0M986 505.5v0M986 511.9V517.2M986 520.3V522.4M986 525.2V534.4M986 538.1v0M986 545.4v0M986 547.9v0M987 508v0M987 511.8v0M987 514.9V519.6M987 522V535.1M987 537.5V540.5M988 496.4v0M988 504.8v0M988 508.6V510.9M988 513.6V521.4M988 523.7V534.5M988 545v0M989 507.2v0M989 513.9V527.7M989 530.1V533M989 538.3v0M989 541.3V544.9M990 509.2v0M990 514.8v0M990 518.2v0M990 521.4V522.6M990 525V538.6M990 541.6V542.3M991 520.1V536.9M991 539.7V545.2M991 548.2V552.4M991 555.6V557.4M991 559.6v0M992 540.7V547.3M992 551.1V565.1M992 567.3V568.5M992 574.7v0M992 582.4v0M993 529.8V531.8M993 540.7V544.5M993 547.3V560.2M993 562.6V564M993 568.6v0M993 572.2v0M994 506.6v0M994 524.7V530.5M994 533.5V542.9M994 547V548.3M994 550.7V552.5M994 555.9v0M994 558.4v0M995 512.1V514.6M995 518.9V537.2M995 541.9v0M996 506.8v0M996 511.4V512.4M996 515.6v0M996 520.8V529.3M996 531.5V536.1M997 511v0M997 514.2V515.9M997 519.6V523.9M997 526.7V538.5M997 544.3v0M998 513V514.1M998 517.5v0M998 519.7V535.8M998 540.1V541M999 503.5v0M999 506.8v0M999 512.2V520.1M999 523.4V535.3M999 537.8v0M999 542.2v0M1000 510V528.3M1000 532.3V541.7M1001 507.5v0M1001 510.5V514M1001 516.5V526.8M1001 530V540.7M1002 513.4v0M1002 516.5V521.7M1002 524.4V525M1002 527.9V537.5M1002 540.5V543.5M1003 506.7V507.8M1003 512.6V521.9M1003 524.6V528.2M1003 530.6V537.8M1003 540.3v0M1003 543.9v0M1004 519.8v0M1004 523.4V525M1004 528.7V532.7M1004 535.3v0M1004 538.4V548.5M1004 552.1V557.2M1005 538.4V541.6M1005 545.5V556.1M1005 559.2V570.2M1005 573.1v0M1006 492.7v0M1006 498.7V502.4M1006 508.8v0M1006 520.7V524.3M1006 527.2v0M1006 531.7v0M1006 534.1V535.8M1006 539.5v0M1006 547v0M1006 551.8V555.1M1006 559.4V560.2M1006 563.7v0M1007 525v0M1007 528.1v0M1007 535V537.2M1007 540.7V542M1007 549.4v0M1007 553.9v0M1008 488v0M1008 491.4V493.2M1008 500.9v0M1008 506.5v0M1008 514v0M1008 517.9V537.2M1008 546.4V547M1009 509.5v0M1009 513.5v0M1009 515.9V527.7M1009 530.7V543.2M1010 511.9V516.2M1010 518.8v0M1010 521.7V530M1010 534.4V539.7M1011 508.6V510.4M1011 513V518.5M1011 521.9V530.3M1011 535.2V536.5M1011 539.1V542.3M1011 545.7v0M1011 550.1v0M1012 509.3v0M1012 511.6V516M1012 518.5v0M1012 522.3V527.2M1012 530.7V541.2M1012 544V544.7M1012 547.6V550.3M1013 525.2V542.6M1013 545.1V553.7M1013 559.3v0M1014 528.9v0M1014 531.7v0M1014 534.8V550.6M1014 553V553.9M1014 557V559.1M1014 566.6v0M1015 536.2V550.6M1015 553.3V554.5M1015 557.1v0M1015 560.4v0M1015 563.4v0M1016 515.9v0M1016 521.9V525.6M1016 527.9V534.3M1016 536.8V539.4M1016 542.1v0M1016 545.6V551.9M1016 558.8v0M1017 516V517.4M1017 523.6V527M1017 529.4V543.5M1017 546.2V546.8M1018 489v0M1018 492.8v0M1018 497.3V498.4M1018 501.8v0M1018 507.5V515.2M1018 517.9V521.9M1018 526.4V530.3M1018 532.9V534.7M1018 540.5V541.4M1018 547.4v0M1019 486.4V488M1019 492.6v0M1019 496.8v0M1019 514.4V516.2M1019 522.2V524.3M1019 528.6v0M1019 535.4V536.8M1020 489.8V491.6M1020 495.1V495.9M1020 498.4v0M1020 500.6V504.4M1020 506.9V508.2M1020 510.9v0M1020 513.6V521M1020 524.9v0M1020 527.3V532.1M1020 537.4v0M1021 501.2v0M1021 508.9V511.7M1021 516.2V530.2M1021 533v0M1021 535.6v0M1022 502.9v0M1022 508.9v0M1022 512.3V538.3M1023 510.7V512.3M1023 516.1V529M1023 532.8V536.9M1023 541.5v0M1023 545.2v0M1024 509v0M1024 512.9v0M1024 515.4V516.3M1024 519.3V535.7M1024 538.2V540.1M1024 544.9v0M1025 516v0M1025 523V544.5M1025 547v0M1025 550.3v0M1026 527.7V537.2M1026 540.9V550.2M1026 553.1V553.8M1026 556.8V558.9M1027 539.9V543.1M1027 545.7V550.1M1027 552.8V563.4M1027 565.7V571.2M1027 574.8v0M1027 578.3v0M1028 530.9v0M1028 537.4v0M1028 541.2v0M1028 543.4V545.5M1028 547.7V554.4M1028 556.7v0M1028 559.5V567.3M1028 571.7V573.6M1028 579.5v0M1029 517.7v0M1029 522.6V544.8M1029 548V549.4M1029 558.2v0M1030 516.3V526.8M1030 529.6V537.6M1030 539.8V540.5M1030 543.7V546M1031 513.1V514.3M1031 516.6V517.5M1031 520.4V539.5M1031 541.8V543.3M1032 509.6V511.5M1032 513.9V521M1032 526.8V537.2M1032 543.9v0M1032 547.4v0M1033 505.6v0M1033 510.6v0M1033 512.9V534.9M1033 537.8V539.2M1033 544.1v0M1034 508.1V508.9M1034 512.9v0M1034 515.9V534.2M1034 539.2v0M1034 544v0M1035 506.2V508.7M1035 511.1v0M1035 514.8V527.5M1035 530.6V538.6M1035 541.4v0M1036 484.2v0M1036 488.7v0M1036 505.8V507.3M1036 510.4v0M1036 513.8V516.3M1036 520.9v0M1036 527.2v0M1036 532.9V537M1036 542.1v0M1036 544.6v0M1036 548.2V549.1M1036 551.3v0M1037 497.9v0M1037 504.1v0M1037 515.3v0M1037 521.6v0M1037 526.3v0M1037 532v0M1037 534.9v0M1037 538.2V542.3M1037 549.2v0M1037 559.6v0M1038 509.3v0M1038 515.2v0M1038 521v0M1038 524.6v0M1038 539V543.1M1038 545.6V548.4M1038 551.6V555.8M1038 558.2v0M1038 562.4V568.3M1038 570.7v0M1039 527v0M1039 529.9V535.2M1039 537.7V543.7M1039 546v0M1039 548.9V556.1M1039 562.3V564M1040 515.1v0M1040 521.4V525.8M1040 528.7V543.1M1040 546.4V548.3M1040 553.3v0M1041 504.1v0M1041 510.7v0M1041 514.7v0M1041 519.1v0M1041 521.5V523.9M1041 526.7V535M1041 537.2V538.4M1041 540.9v0M1041 544.9V546.2M1042 507.2V508.8M1042 513.8V516.6M1042 519.1V522.2M1042 524.9V532.2M1042 534.7V540.1M1042 543.7v0M1042 547v0M1043 502.5v0M1043 509.5V516.8M1043 519V528.3M1043 530.8V531.7M1043 534.6v0M1043 542.3v0M1044 513.8v0M1044 516.4V517.8M1044 520.2v0M1044 523.1V527.5M1044 531.3V539.2M1045 515.4v0M1045 523.9v0M1045 526.8V546.6M1045 550.8V553.4M1045 557.7v0M1046 522.3v0M1046 530V534.3M1046 538.7V548.3M1046 551.1V556.9M1046 561.1v0M1047 528.7v0M1047 532.6V545.6M1047 547.8V550.9M1047 555.6v0M1047 559.8v0M1048 494.3v0M1048 499.1v0M1048 505.7v0M1048 509.9v0M1048 518.2V520.3M1048 524.4V535.4M1048 539.7V547.7M1049 492.8v0M1049 516.1v0M1049 523.5V526.1M1049 530.5v0M1049 535.4v0M1050 487.3v0M1050 493.6V498.8M1050 502.1V502.8M1050 509.7V511M1050 513.5v0M1050 516.1V519.5M1050 522.2v0M1050 525.3V528.9M1050 531.1V532.6M1051 511.8V513M1051 515.6V532.9M1051 536.9V537.6M1051 541.3v0M1052 512V515.5M1052 518.1V523.3M1052 525.6V538M1052 541.5V543.3M1052 545.6V546.9M1053 509v0M1053 514.4V522.1M1053 525.1V526.9M1053 529.6V535.4M1053 539V541.8M1053 545.3v0M1065 521.8v0M1065 524.5v0M1065 529.5V533M1065 542.8v0M1066 515.8v0M1066 518.8V521.9M1066 526V530M1066 532.3V535.3M1066 538.3V546M1066 548.8v0M1067 518.1v0M1067 521.1V524.2M1067 527.5v0M1067 529.9V535.5M1067 538.2V545.2M1067 548.3V549.5M1067 554.2V559.3M1067 563v0M1067 568.3v0M1067 571.3v0M1068 541v0M1068 546.2V554.2M1068 558.7V570M1068 572.6V577.2M1069 532.4V533.7M1069 536.6v0M1069 543.3V563.7M1069 577.8v0M1070 511v0M1070 523.6v0M1070 526V539.7M1070 542.2V552.7M1070 556v0M1071 520v0M1071 522.5V539.4M1071 541.6V543.9M1071 546.5v0M1072 503.7v0M1072 512.7V520.9M1072 524.8V538.9M1072 541.8v0M1073 513V521.9M1073 524.9v0M1073 527.3V533.2M1073 535.9v0M1073 539V540.4M1073 542.7V546.4M1074 508.8v0M1074 518.7v0M1074 522.9v0M1074 526.1V529.5M1074 531.7V542.2M1074 545.3V547.5M1074 554.7v0M1074 566.6v0M1075 510.3v0M1075 513.3V514.5M1075 518.7V522.4M1075 525.1V528.9M1075 531.6V541.2M1075 546.2v0M1075 551.2v0M1075 556v0M1075 564.8v0M1076 506.5V507.7M1076 511.6v0M1076 514.3V519.7M1076 522.3V532.4M1076 534.7V536.4M1076 540.7v0M1076 543v0M1077 501V503.7M1077 505.9v0M1077 513.6v0M1077 516.1V522.6M1077 524.9V532.2M1077 534.7V535.8M1077 540.8V542.8M1077 548.8v0M1077 556.1v0M1078 511.6V513M1078 516.5V539.5M1078 543.9v0M1079 509.4V510.3M1079 514.8v0M1079 517.9v0M1079 520.5V526.3M1079 529.1V546.6M1080 497.6v0M1080 503.8v0M1080 507.3v0M1080 510.8v0M1080 514.4V517.8M1080 520.1V529.9M1080 536.7V539.7M1080 543.8v0M1080 552.9V554.3M1081 503.4V504.6M1081 507.2V530.2M1081 532.7V536.4M1081 540v0M1081 543.7v0M1082 509.3v0M1082 513.8v0M1082 516.3V518.2M1082 523.6V536.1M1082 539.3V544.2M1082 546.7V548.1M1082 550.5v0M1083 516V517.8M1083 521.6V522.8M1083 526V530.5M1083 534.6V550.1M1083 553.4v0M1084 501V502.2M1084 507.1v0M1084 514.6V515.8M1084 518.4V528.8M1084 534.2V536.5M1084 539.5V540.8M1084 543.1V544.3M1084 551.4V552.5M1085 499.7v0M1085 504.3v0M1085 507.2V509.1M1085 512.7V517M1085 521.4V528.5M1085 531V534M1085 538.5v0M1086 503v0M1086 510.3v0M1086 514.3V539.3M1086 541.7v0M1086 548v0M1087 512.5V515.7M1087 518.5V520.1M1087 522.6V527.4M1087 531V545.4M1087 549.3v0M1088 512.4v0M1088 514.8V527.6M1088 530.2V534.1M1088 539.1V541.3M1088 544.1V545.8M1088 548.7v0M1088 551.6v0M1088 558.6v0M1089 506.4v0M1089 512.2V513.6M1089 516.1V523.6M1089 525.9V536.4M1089 539V543.4M1089 545.8v0M1089 550.9v0M1090 511.1v0M1090 516.1V518M1090 520.5V521.2M1090 524.8v0M1090 528V532.5M1090 536.5V538.2M1090 540.7v0M1090 543.3V547.8M1090 552.9V553.7M1090 557.8v0M1091 500.8v0M1091 508.6v0M1091 517.9V534.2M1091 537.7V542.2M1091 545.3V546.7M1092 508.4V509.9M1092 513.5V522.6M1092 524.9V535.9M1092 539.3v0M1093 506.1v0M1093 509.2V509.8M1093 513V523M1093 525.7v0M1093 528.8v0M1093 533v0M1093 536.6V540.7M1093 544.2V546.9M1094 513.6v0M1094 515.8v0M1094 518.8V534.8M1094 537.4V542.6M1094 552.3v0M1095 511.9V513.2M1095 516.5V523M1095 525.4V540.3M1095 542.9v0M1095 545.7V547.3M1095 557.6v0M1096 511.9v0M1096 516v0M1096 519.3V531.2M1096 536.6v0M1096 539.8V541M1096 544.1V550.6M1097 503.4v0M1097 508v0M1097 512.8V516.1M1097 521.2V523.2M1097 525.7V528.2M1097 530.5V531.5M1097 534.5V542.7M1097 546.2V548.2M1097 550.8V552.9M1098 512.1V513.5M1098 516.2v0M1098 518.6V519.4M1098 522V522.6M1098 525.2V530.8M1098 534.2V540.6M1098 543.9V546.1M1098 553.1v0M1099 512.9v0M1099 520.4v0M1099 523.3V530.5M1099 532.9V535.3M1099 538.8V544.7M1099 547.2V552.8M1100 509.1V512.3M1100 514.8V518.9M1100 522.3V523.9M1100 526.5v0M1100 528.7V531.9M1100 534.6V535.4M1100 538V541.3M1100 545.9V547.4M1101 501.5v0M1101 514.9V522.1M1101 524.6V525.7M1101 528V530.8M1101 534.1V541.9M1101 547.5v0M1101 552.1v0M1101 559.3v0M1102 500.3v0M1102 502.6v0M1102 508.4v0M1102 513.1V520.9M1102 523.7V527M1102 530.3V533M1102 536.1V543M1103 494.1v0M1103 497.6V499M1103 503.7V509.3M1103 512.4V516.4M1103 518.9V520M1103 523.5V525.5M1103 531.4v0M1103 534.6V536M1103 539.6v0M1104 505.6V506.4M1104 510.7v0M1104 514V527.8M1104 531.6V533.4M1104 535.9V540.9M1104 543.6v0M1105 516.9V519.1M1105 521.8V535.9M1105 538.8V541.1M1105 545v0M1105 549.4V550.5M1105 556.1v0M1106 512.2v0M1106 516.4V543.1M1106 545.4V546.4M1106 551.7v0M1106 556.4v0M1107 513.2V538.1M1107 540.9v0M1107 543.2V545.3M1108 511v0M1108 515.4V521M1108 523.4V530.5M1108 533.5v0M1108 536.3V537M1108 540.2V544.4M1108 547V549.5M1108 552.2v0M1109 512.2V513.6M1109 517.4V528.5M1109 531V543M1109 555.2v0M1110 503.2v0M1110 508.8v0M1110 513v0M1110 515.7V517.5M1110 520.2V527.3M1110 529.8V532.2M1110 534.8V535.8M1110 538.1v0M1110 540.7v0M1110 542.9V545.5M1111 509.9V513M1111 515.9V531M1111 536.2V538M1111 543.4V546.3M1112 499.9v0M1112 513.5V522.6M1112 526.2v0M1112 529.1V539.2M1112 544.7v0M1113 503.7v0M1113 510.9V512.3M1113 516.2V517.7M1113 520.3V522.8M1113 525.3V536.5M1113 540.5v0M1113 548v0M1114 511.6v0M1114 519.4v0M1114 523.9V529.4M1114 532.6V533.3M1114 536V544.5M1114 548.9v0M1114 553.4V554M1114 556.5v0M1114 563.4v0M1115 519.2v0M1115 523.1V524.3M1115 526.9v0M1115 529.9V534.3M1115 536.6V540.3M1115 542.6V546.1M1115 549.4V553.3M1115 556.1v0M1115 559v0M1116 519.3V524.5M1116 527.3V550.5M1116 554.5v0M1116 557.1v0M1117 498.2v0M1117 506.8v0M1117 510.1V511.6M1117 515V524.6M1117 527V532.5M1117 535.6V541M1118 511v0M1118 517.1V523.1M1118 527.5V533.9M1118 537.4V547.8M1119 516.1v0M1119 518.7V527.9M1119 530.2V531.5M1119 534.8V535.7M1119 538.1V546M1120 501.7V502.3M1120 508.8V510.7M1120 514.4V519.5M1120 523.8V526.3M1120 531.1V536.9M1120 541.5v0M1120 543.8V547.3M1120 552v0M1121 496.5v0M1121 501.1V506.3M1121 508.7V510.7M1121 515.7V520.5M1121 524.7V527.2M1121 531.3V534.7M1121 537.6V538.7M1121 545.4v0M1122 507.9v0M1122 510.4V514.7M1122 521.8V534.6M1122 536.9V546.1M1123 502.3V504.3M1123 506.9v0M1123 509.2v0M1123 512.3V514.9M1123 517.9V534.2M1123 538.8V541.2M1124 499V503.7M1124 506V509.3M1124 512V513.4M1124 516.7v0M1124 519.9V522.2M1124 525.3V526.7M1124 530.2V535.4M1124 538.9v0M1124 542v0M1124 547.2v0M1124 550.4v0M1125 494.2v0M1125 498.1v0M1125 501v0M1125 504.8V508.1M1125 511.1v0M1125 513.4V525.5M1125 528.7v0M1125 531.2v0M1125 534v0M1125 536.5V539.7M1125 542.6v0M1126 513.5v0M1126 517.1V525.5M1126 528.5V538.7M1126 542.8V546.9M1126 549.8v0M1127 516.5V518.5M1127 521V525.4M1127 528.6V538M1127 541.9V545.1M1127 548.6V549.5M1128 503.4v0M1128 506.9V508.7M1128 514.1v0M1128 516.5V522.9M1128 525.2V531.1M1128 533.6V535.5M1128 538.3V541M1128 544.1v0M1128 549.6v0M1129 510.4V514.8M1129 518.3v0M1129 524V529.4M1129 534.3V538.3M1129 540.5V543.1M1129 547.3V552.3M1129 555.8v0M1130 512.6v0M1130 515.5v0M1130 520.6V528.8M1130 531.1V537.5M1130 539.9V543.8M1130 546.6v0M1130 551.8V556.2M1130 558.8v0M1131 514.4v0M1131 516.8V520.3M1131 523.5V544.9M1131 550V550.7M1131 553.3V555.3M1131 559.1v0M1132 497.5v0M1132 510.9V516.4M1132 520.4V523.8M1132 526.2V529M1132 533V534.3M1132 537.4V542.4M1132 548.9V550.9M1132 556.4v0M1133 507.4v0M1133 510.4V511.2M1133 515.9V517.1M1133 519.4V520.1M1133 522.9V527.8M1133 530.5V540.9M1133 547.9v0M1134 513.7v0M1134 516.7v0M1134 519.1V532.3M1134 534.7V542.1M1134 545.9v0M1134 548.3v0M1134 554V554.8M1135 511.1v0M1135 515.6V516.3M1135 522.4V538.8M1135 542.7V544.5M1135 548.3v0M1136 497.8v0M1136 502.6v0M1136 505.4V511.1M1136 514.2v0M1136 516.8V521.1M1136 524V532.9M1136 535.3V538.8M1136 547.1v0M1137 502V504.7M1137 509.1v0M1137 513.7V517.9M1137 520.7V539.6M1138 512.7V513.5M1138 516.1V528.6M1138 531.8v0M1138 534.6V542.1M1138 545.5V548.2M1139 512.8v0M1139 517.4v0M1139 521.8V523.4M1139 528V532.8M1139 535V552M1140 511.9v0M1140 514.9V515.8M1140 521.6V523.9M1140 526.3v0M1140 529.2V534M1140 536.7V538.4M1140 542V544.5M1140 546.9V548.3M1140 560.2v0M1141 504.7V506.5M1141 511.2V511.9M1141 514.6V530M1141 533.5V536.4M1141 539.1v0M1141 543.2V547.9M1142 506.8v0M1142 510.5V516.1M1142 520.5V539.9M1142 545.4V548.7M1143 508.2v0M1143 511.7V517.6M1143 520.5V523.3M1143 526.7V534.2M1143 537.8V541.2M1144 507.7v0M1144 516.7V518.4M1144 520.9V537.2M1144 541.1V543.9M1144 547.7v0M1145 503.8V509M1145 511.6V514.1M1145 516.7v0M1145 519V521.5M1145 525.2v0M1145 529.6V532.3M1145 535.6V537.1M1145 541.3v0M1145 547.5v0M1145 551.1v0M1146 493.8v0M1146 498.6V511.4M1146 514.4V523.2M1146 528v0M1146 531.4V533.7M1146 536.7v0M1146 540.9v0M1146 546.9v0M1147 494.2v0M1147 498.6V504.3M1147 509.3V513.4M1147 516.9V522.4M1147 525.8V527.7M1147 530.8v0M1147 535.8V542.6M1147 545.2v0M1148 505.6V509.8M1148 512.8v0M1148 515.4V519.1M1148 522.4v0M1148 524.8V535M1148 538.1V539.5M1148 542.9v0M1149 505V517.6M1149 520.4v0M1149 523.3V538.3M1149 550.3v0M1150 515.6V524.4M1150 527.3v0M1150 529.9V535M1150 537.4V539.3M1150 541.6V544.9M1150 555.2v0M1151 512.3v0M1151 515.2V516.2M1151 522.6V525.4M1151 528.1V529.6M1151 532.1V546.3M1151 554.9v0M1152 513.9v0M1152 517.2v0M1152 520.4V521.7M1152 524.2v0M1152 526.8v0M1152 530V534.1M1152 536.8V544.4M1152 546.9V549.3M1153 510.2v0M1153 515V525.4M1153 527.9V536.8M1153 539.7V545.7M1154 506v0M1154 508.5V510.3M1154 514.2V525.7M1154 529.1V538.9M1154 541.6v0M1154 545.5v0M1155 497.9v0M1155 506.1v0M1155 508.6v0M1155 511.4v0M1155 515.4V518.2M1155 520.5V527.4M1155 532.6V536M1155 538.6V540.8M1155 546.1v0M1156 519.2V533.7M1156 537.6V548.9M1156 554.6v0M1157 500.9V504.3M1157 506.7V509.1M1157 511.8V527.7M1157 530.2V531.1M1157 535.4V537.1M1157 539.5v0M1158 499.5V503.2M1158 506.1v0M1158 511.7V513.4M1158 516.2V517M1158 519.5V533.3M1158 539.9V540.9M1158 545.1V547.2M1159 512.5V513.5M1159 519.4V525.2M1159 527.4V541M1159 543.5V545.5M1159 549.4V551.5M1160 514.9v0M1160 520.3v0M1160 522.6V526.4M1160 529.1V540.7M1160 543.5V548.1M1161 512.5v0M1161 518V520M1161 522.7V525.2M1161 530.6V531.9M1161 534.1V544.4M1161 547.3V548.6M1161 555v0M1161 559v0M1162 499.1v0M1162 511.5V515.2M1162 517.8V524.4M1162 530.3v0M1162 532.5V533.1M1162 535.5V541.9M1162 544.2v0M1162 546.6V547.3M1162 552V552.7M1162 555.4v0M1163 502.5v0M1163 506.7V510.5M1163 515.3V518.8M1163 521.4V534.4M1163 536.7V539.6M1164 508.1v0M1164 513.7v0M1164 516.4V520.8M1164 523.7V525.3M1164 528.6V529.9M1164 533.6v0M1164 537V544.8M1164 550.6V552.6M1165 515.3V523M1165 527V540.6M1165 543.1V545.2M1166 505.3v0M1166 513.3V518.6M1166 521.5V532.8M1166 538.7V540.4M1166 542.7V544.2M1166 546.9v0M1167 511.5V516.5M1167 519.5V523.5M1167 527.9V531.6M1167 535V539.6M1167 542.7V544.7M1167 548V549.3M1167 552.5v0M1168 511.6V517.7M1168 521.7v0M1168 524.1V532.9M1168 535.5V543.5M1168 549.9v0M1169 505.5v0M1169 513.4v0M1169 515.9V522.7M1169 527.2V534.1M1169 536.5V546M1169 552.6V555.4M1170 498.2v0M1170 501.2V502.5M1170 507.1V519.3M1170 522.9V525M1170 528V530.1M1170 548v0M1171 504.5V512.6M1171 515.2V521.5M1171 525V528.1M1171 532.6v0M1171 538.2V541.2M1172 503V504.2M1172 511V519.5M1172 522.6V539.5M1172 543.8V546.2M1172 554.7v0M1173 511.4v0M1173 514.3V516.1M1173 519.4V521.9M1173 524.7V532.8M1173 535.8V540.5M1173 543.8V549M1174 513.1V514.6M1174 521V523M1174 526V527.5M1174 530.5V536.9M1174 539.4V544.6M1174 546.8V548M1175 506.7v0M1175 512.5V517.9M1175 520.2V522.8M1175 525V529.5M1175 532V538.7M1175 541.4v0M1175 545V547.2M1176 513.6V517M1176 520.2V521.2M1176 524.5V530.4M1176 532.9V539.7M1176 542.8V545.1M1176 551.6v0M1176 557.7v0M1177 514.8V527.4M1177 533.7V544.7M1177 549.5V551.8M1177 559.7v0M1178 509v0M1178 511.3V516M1178 518.5V529.1M1178 531.4V540M1178 543.9v0M1179 504.5V506M1179 512.2V513.8M1179 516.2v0M1179 519.2v0M1179 522.5V539M1179 541.7v0M1179 551.1v0M1180 510.6v0M1180 513.1v0M1180 517V530.4M1180 534V537.6M1180 542V543.1M1180 545.3v0M1180 554.7v0M1181 494.5v0M1181 497.2V498.7M1181 505.1v0M1181 510.1V511.4M1181 516.5v0M1181 518.9V525.6M1181 528V535.6M1181 538V541.3M1181 546.4v0M1182 498.6v0M1182 501.8V505.8M1182 510V527.4M1182 530v0M1182 532.4V534.5M1182 542.1v0M1182 548.7v0M1183 511.8V517.5M1183 520.2V527.5M1183 529.9V531.3M1183 534V535.6M1183 538.5V540.6M1183 544.1V545.7M1184 510.4V512.5M1184 516.3V529.4M1184 533.6V541.3M1184 543.9V547.5M1184 550.1v0M1184 556.2v0M1185 516.5V523M1185 528.9V531.2M1185 534.1V535.8M1185 539.9V547.7M1185 551.7V552.4M1186 508.6V509.8M1186 513V519.4M1186 521.8V531.7M1186 534.3V540M1186 549.9v0M1186 557.6v0M1187 506.7V507.5M1187 509.7v0M1187 516.7V517.7M1187 522.8V532M1187 534.9V537.8M1187 544.1v0M1187 546.5v0M1187 549.4V553.8M1187 557.5v0M1187 561.1v0M1187 567.1v0M1188 527v0M1188 531V535.7M1188 538.8V552.4M1188 554.7V556.5M1188 559.7V561.7M1189 520.4V528M1189 530.2V533.5M1189 536.7v0M1189 538.9V542M1189 547.3V549.4M1189 552.1v0M1189 555.4V556.4M1189 560.3V561.9M1189 567.6v0M1190 517.4v0M1190 521.2V524M1190 528.4V529.6M1190 532v0M1190 534.8V537.7M1190 540.1V548.5M1190 554.2V556.1M1190 558.7v0M1190 563.4v0M1191 530.7v0M1191 535.4V544M1191 546.4v0M1191 549.5V558.9M1191 571.3V573.1M1191 577.2v0M1192 518.3V519.8M1192 523.6v0M1192 527.7V534.4M1192 538.2V559.8M1192 564.8v0M1192 570.5v0M1193 524.2V526.8M1193 529.9V535.4M1193 537.9V540.3M1193 542.8V544.4M1193 547V555.2M1193 558.8v0M1193 566.7v0M1194 497.3v0M1194 508.3v0M1194 511.6v0M1194 514.9V515.9M1194 519.1V520M1194 523.1V523.9M1194 526.6V538.8M1194 541.5v0M1194 547.6V549.1M1194 557.8v0M1195 496.3v0M1195 515V520.9M1195 523.3V525.1M1195 530.3V543.4M1195 545.7v0M1195 548.4V552.2M1195 557.2V557.8M1196 511.7v0M1196 513.9V519.5M1196 523.2V524.1M1196 526.8V534.9M1196 537.1V540.4M1196 544.6V550.6M1196 558v0M1196 562.9v0M1197 501.6V506.6M1197 510.1V518.8M1197 521.2v0M1197 531v0M1197 537.3v0M1197 542.6v0M1197 545.5v0M1197 553.7V555.8M1197 558.8v0M1197 568.3v0M1198 495.1v0M1198 497.6v0M1198 501.2v0M1198 507.2V508.5M1198 517.1V519.7M1198 530.6V532.6M1198 541v0M1198 545v0M1198 551.5v0M1198 558.7v0M1199 522.2V524.4M1199 527.4V529.3M1199 531.7v0M1199 537.2V539.1M1199 541.7v0M1199 546.2V548.7M1199 551.5V560.9M1199 564.3v0M1199 566.7v0M1200 518.3v0M1200 523.9v0M1200 527.7v0M1200 530.6V532.2M1200 534.7v0M1200 538.2V541.3M1200 544.6v0M1200 548.2V559.1M1200 564.4V565.2M1201 506v0M1201 511.8v0M1201 515v0M1201 518.8V521.1M1201 524.2V537.5M1201 541.3V545M1201 548.9v0M1202 508.6v0M1202 520.9V523.4M1202 525.9V528.7M1202 531.8V540.5M1202 545.8V551.1M1202 554.5V555.1M1202 561.2v0M1203 512.4v0M1203 517.5v0M1203 522.4V525.4M1203 528.4V530.8M1203 533.1V545.4M1203 548.6V551.7M1203 554v0M1203 556.7v0M1203 559v0M1203 561.4v0M1204 524V527.7M1204 530.5V531.2M1204 533.5V538.5M1204 541.4V543M1204 546V552.8M1204 555.4v0M1204 558.1V561.1M1204 566.1v0M1205 525.7V527M1205 531.6V536.3M1205 538.7V549.9M1205 552.2V556M1205 559V560.2M1205 563.1v0M1205 568.2v0M1206 520.9v0M1206 524.7V527M1206 529.2V543.3M1206 546.9v0M1206 549.2V553.2M1206 556.7V559.3M1206 562.3V563M1207 501.6v0M1207 507.9v0M1207 521v0M1207 524.8V529.5M1207 532.6v0M1207 536.2V545.8M1207 548.4V553.3M1207 563.4v0M1208 518V529.5M1208 532V533.9M1208 536.7V539.2M1208 542.1V547.9M1208 551.2v0M1208 557.5v0M1208 562.4v0M1209 501.7v0M1209 504.1V506.2M1209 514.2V518.4M1209 521.4v0M1209 523.8V536M1209 539.4V541.7M1209 548.4V554.5M1210 494.9v0M1210 505.4V506.7M1210 512.4v0M1210 518.2V542.7M1210 546.8V547.9M1210 551V553.9M1211 513.8V516M1211 518.7V519.8M1211 524V532.4M1211 534.6V539.9M1211 543.3V546.3M1211 550V551.3M1211 554.6V557.5M1211 564.6v0M1211 570.8v0M1212 523.9V526.1M1212 530.5V534.6M1212 537.2V549.8M1212 553.5V554.2M1212 557.9v0M1212 560.9V561.9M1212 565.9v0M1212 571.5v0M1213 524.8v0M1213 530.3v0M1213 532.7v0M1213 535V540.7M1213 543.4V547M1213 549.2V550.8M1213 554.1V561.2M1213 565.2v0M1213 568.1v0M1214 522.3V523.2M1214 526.5V529.8M1214 532.1V537.5M1214 542V551.7M1214 555.5v0M1214 560.6V565M1214 569.4v0M1215 519v0M1215 521.7v0M1215 524.1V552M1216 519.3V520.4M1216 524.8v0M1216 527.1V528M1216 530.5V532.6M1216 535.9V544.9M1216 548.2V554M1216 557V558.5M1217 504.6V508.6M1217 512v0M1217 515.8V518.1M1217 522.2V524M1217 526.8V527.5M1217 531.6v0M1217 534V535.4M1217 541.5V548.7M1217 557.8v0M1218 498.1V502.9M1218 520V520.7M1218 529v0M1218 533V533.8M1219 497.4V498M1219 501.9V505M1219 513.9v0M1219 516.6v0M1219 522.9V525.4M1219 528.1v0M1219 530.8V538.9M1219 542.5V543.4M1219 550.2v0M1219 555.4v0M1219 559.3v0M1220 504.6v0M1220 511.5v0M1220 516v0M1220 525.6v0M1220 528.1V531.1M1220 533.6v0M1220 535.9V543.9M1220 546.2V548.5M1220 550.8v0M1220 554.9v0M1220 558.4v0M1220 561.3V563.1M1221 513.2v0M1221 516.9v0M1221 521.2V527.3M1221 529.7V541.1M1221 544.1V546.7M1221 549.3V553.6M1221 561.2v0M1221 568.4v0M1222 516.4v0M1222 525.3V528.1M1222 530.4V536.9M1222 539.5V540.3M1222 542.6V546.4M1222 552.9V553.5M1222 557.8v0M1223 515.1V516.1M1223 519.2v0M1223 522.4v0M1223 527.4V529.2M1223 531.4V538.3M1223 544.6V549.3M1223 552.5v0M1223 555.3V558.3M1223 565.8v0M1224 516.8v0M1224 522.4v0M1224 526.1V527.2M1224 529.4V539.1M1224 542.4v0M1224 548.3V551.1M1224 554v0M1224 558.2V558.8M1224 563v0M1225 515.3V517.3M1225 520.3v0M1225 525.8v0M1225 528.5V529.8M1225 533.4V544.7M1225 549.9V552.5M1225 554.9v0M1225 557.6v0M1225 560.6V561.9M1225 567.6v0M1226 500.7V505M1226 507.7V509.3M1226 513.8V516.2M1226 520.7v0M1226 523.3V530.7M1226 535.4V540.6M1226 545.5v0M1226 549.1V550.1M1227 495.2V497.2M1227 503.2v0M1227 511.6V512.7M1227 515v0M1227 517.4v0M1227 520v0M1227 524.4V529.5M1227 534.4v0M1227 538.8V541.2M1227 543.9v0M1227 557.9v0M1228 495.6v0M1228 502.1v0M1228 512v0M1228 515.7v0M1228 519.5V520.2M1228 526.8v0M1228 530.1v0M1228 534.2v0M1228 536.6V538.9M1228 541.7v0M1228 545.7v0M1228 555.3V559.1M1228 569.2v0M1229 506.5V510.7M1229 513.3v0M1229 516.9V519.1M1229 523.3V526.3M1229 528.8v0M1229 532.9V535.1M1229 538v0M1229 541.8V547.3M1229 549.6V551.2M1230 518.1v0M1230 526V527.1M1230 530.5V546.4M1230 549.3V550.3M1230 554.7V559.1M1230 565.7V567.1M1230 571v0M1231 513.6v0M1231 525.4v0M1231 527.6V531.5M1231 534.1V536.6M1231 538.8V540.9M1231 543.3V554.4M1231 557.1v0M1231 561.2v0M1231 565.5V567.3M1231 581v0M1232 497.3V499.5M1232 501.8v0M1232 504.3v0M1232 512.1V513.3M1232 516.3V524.5M1232 528V534.2M1232 538.7V540.1M1232 543.3v0M1232 550V551.7M1232 562.1v0M1232 573v0M1233 500.5v0M1233 506.5v0M1233 508.8V516.4M1233 520.1V521.9M1233 528.2V534.6M1233 537.2v0M1233 544.9V546.1M1233 552.8v0M1233 555v0M1233 559.5v0M1234 511.1V513.1M1234 518.5V519.8M1234 522.1v0M1234 527V534.3M1234 538.2V539.2M1234 541.5V553.5M1234 560.1v0M1234 575.4v0M1235 523.5v0M1235 535.9V553.2M1235 555.5V562.1M1235 564.4V566.7M1236 518.7v0M1236 523.1v0M1236 528.9V534.7M1236 537.5v0M1236 542V562.1M1237 516.2v0M1237 519.2V520.7M1237 525.2v0M1237 527.5V528.8M1237 531.7V537.2M1237 539.9V543.9M1237 546.8V552.2M1237 555.3V559.7M1238 514.7v0M1238 517.5V519.7M1238 527.6V529.9M1238 533V536.5M1238 539.6v0M1238 542.2V548.6M1238 551.1v0M1238 554.1V558.2M1239 520.9v0M1239 527.9V540.1M1239 543.4v0M1239 545.8v0M1239 549.1V556M1240 511.8v0M1240 519.4V520.3M1240 522.9v0M1240 529.3v0M1240 532V541.3M1240 543.5V544.6M1240 547.4v0M1240 549.7V557.5M1240 563v0M1241 516.5v0M1241 525.1v0M1241 527.9v0M1241 531.9V537.3M1241 541.2V551M1241 553.8v0M1241 556.1v0M1241 559.4v0M1241 562.6V564.2M1241 567.4v0M1242 510.9v0M1242 518.1v0M1242 521.6V523.2M1242 525.7V539.6M1242 542.8V553.5M1242 557.2v0M1242 560v0M1243 504.6v0M1243 506.9V507.5M1243 511.7V513.4M1243 516.1V519.7M1243 522v0M1243 524.4v0M1243 526.7V532.6M1243 537.7v0M1243 543.6v0M1243 546.7v0M1243 549.4V550.4M1243 554.4V556.4M1244 515.8v0M1244 519.9V522.4M1244 525.1v0M1244 528.4V532.8M1244 537.5V541.9M1244 544.4v0M1244 546.6V548.3M1244 550.9v0M1244 553.4V557.1M1244 563.1v0M1245 523V527.1M1245 532.4V533.6M1245 537v0M1245 540.3V549.2M1245 551.8V558.5M1245 564.1V567.8M1246 519.7v0M1246 525.8v0M1246 528V533.1M1246 536.5V538.1M1246 541.7V562M1246 566.2v0M1247 522.8V524.6M1247 530.4V535.1M1247 537.9V539.1M1247 541.8V548.2M1247 550.6V553.1M1247 555.6V559.2M1247 562.7V565.8M1248 518V518.8M1248 528V535.6M1248 538V545.3M1248 548.2v0M1248 550.9V553.2M1248 556.7v0M1248 561.2v0M1248 567.8v0M1248 573.3v0M1249 505.3v0M1249 512.2v0M1249 520.2V527.7M1249 532.1V535.8M1249 538.3V542.8M1249 545.8v0M1249 548.5v0M1249 551.9V554.4M1250 505.7V512.9M1250 517.9v0M1250 520.6V524.6M1250 527V533.5M1250 536V538.7M1250 544.1v0M1250 546.5V547.6M1251 520.6V522M1251 524.3V525.9M1251 528.7V533.1M1251 538.3V554.7M1251 561.7v0M1252 516.3v0M1252 520.5V521.7M1252 527.7V531.3M1252 535.6V556.1M1252 559.4V561.3M1252 565.9v0M1253 495.8v0M1253 503.3v0M1253 506.6v0M1253 508.8v0M1253 511.7V518.6M1253 521.3V527.4M1253 532.3V535.5M1253 538.8V540.6M1253 544.8v0M1253 551.4V553.5M1254 503.9v0M1254 508.6v0M1254 512.4v0M1254 514.8V516.3M1254 519.2V520.1M1254 522.7v0M1254 526.1V533.3M1254 535.8V540.1M1254 544.2V546.3M1254 549.2v0M1254 553.1v0M1254 557.2v0M1255 504.8v0M1255 508.5v0M1255 514.1v0M1255 517.7V520.1M1255 523v0M1255 527.8V539.1M1255 541.4V543.8M1255 558.3V559M1256 524.4V525.6M1256 528.7v0M1256 531.3V538.9M1256 543.3V553.3M1256 557.3v0M1256 559.7V560.9M1256 564.5v0M1257 521v0M1257 524.6v0M1257 528V529.1M1257 531.6V536M1257 538.5V543.2M1257 545.8V548.2M1257 550.8V552.8M1257 555.7V557M1257 560.7v0M1257 564.4v0M1257 568.2v0M1258 495.8v0M1258 506.7V507.9M1258 512.4v0M1258 516.8v0M1258 521.6V522.7M1258 526.2V533M1258 536.3V539.5M1258 542.9V546.1M1258 548.6V550.7M1258 555.5v0M1258 561.6V563.2M1259 510.8v0M1259 523.8v0M1259 526.1V527.3M1259 530V532M1259 534.2V540.6M1259 544.4V549M1259 551.7v0M1259 557.4v0M1259 559.8v0M1259 562.4v0M1259 565.8V566.6M1259 571.8V573.5M1260 520.5V522.7M1260 530.9V534.1M1260 537.9V539.7M1260 542.5V543.8M1260 546.1V550.1M1260 552.6V556.2M1260 558.7v0M1260 561.4V562.6M1261 527V529.3M1261 533.3V534.8M1261 537.1V543.6M1261 546.7V550.7M1261 554.1v0M1261 556.5V561.6M1261 568.6v0M1261 573.9V575.7M1262 503.3v0M1262 507.5V509.4M1262 512.6V513.9M1262 516.2V518.8M1262 523v0M1262 525.3V530.7M1262 533.6V538.5M1262 541.5v0M1262 546.2V547.3M1262 550.1V551.3M1262 555v0M1262 557.8v0M1263 514v0M1263 519.3V520.7M1263 523.4v0M1263 526.4v0M1263 528.6V538.8M1263 541.9V545.3M1263 549.3v0M1263 553.4V554.6M1263 557.3v0M1263 559.8v0M1264 518.2v0M1264 527.8V529.1M1264 532.3v0M1264 534.6V542.8M1264 545.5V547.3M1264 550.4V558.2M1265 509.7v0M1265 515.3v0M1265 522.8V523.7M1265 527.5V529.7M1265 534.7V535.4M1265 538.6V540.2M1265 542.6V544.9M1265 547.8V551.5M1265 555.2v0M1265 559V561M1266 522.7V525.9M1266 529.9V532.4M1266 535.9v0M1266 538.1V544.2M1266 546.5V557.1M1266 566.5v0M1267 504.5v0M1267 513.5v0M1267 519.2v0M1267 523.1V528.7M1267 531V551.1M1267 558.9v0M1267 564.1v0M1268 509.9v0M1268 513.4V515.5M1268 520.6V522M1268 524.6v0M1268 528.2v0M1268 530.9V535.2M1268 538.3V540M1268 542.5V551.4M1268 554.9v0M1269 498.5V500M1269 506.2V508.8M1269 513.1V516.7M1269 518.9v0M1269 528.9v0M1269 547V551.4M1269 553.8v0M1269 557.6v0M1270 495.7v0M1270 497.9v0M1270 504V507.9M1270 510.6V513.4M1270 516.5V518.8M1270 521.4V525.4M1270 529.4V531.2M1270 535V537.5M1270 540.8v0M1270 544.6V547.4M1270 554.8v0M1271 517v0M1271 520.3V522.3M1271 528.4v0M1271 532.7v0M1271 535V544.1M1271 546.4V548.7M1271 552.7V554.9M1271 557.2V559M1271 573.8v0M1271 578.6v0M1272 516.1v0M1272 520.3V521.5M1272 523.7v0M1272 527.8v0M1272 530.9V532.3M1272 535.1V537.6M1272 540.2V549.5M1272 553.3V556.5M1272 561.2V563.3M1273 526.8v0M1273 531.1v0M1273 533.3v0M1273 536.9V537.7M1273 541.4V544.6M1273 547.6V559.2M1273 561.7V571.6M1273 577v0M1274 522.9v0M1274 526.9v0M1274 530.8v0M1274 534.6V540.7M1274 543.5V547.9M1274 551.4V552.3M1274 555.3v0M1274 557.7V559.3M1274 561.9V564.1M1274 567.6v0M1275 518V518.6M1275 521.7V525M1275 527.4V529.3M1275 531.5V540.1M1275 542.6V544.5M1275 547.6v0M1275 549.9V554.5M1275 558.3v0M1275 561.4v0M1275 565.1v0M1276 504.1v0M1276 513.7V517.6M1276 521.5V522.7M1276 526.6V531M1276 533.3V536.8M1276 539.1V540.9M1276 543.4V547.8M1276 550.3v0M1276 557.4v0M1276 561.7v0M1277 494.6v0M1277 501.7v0M1277 506.4v0M1277 511v0M1277 513.9V516.9M1277 520.6v0M1277 523.5V527.3M1277 531.1V534.2M1277 536.8v0M1277 540v0M1277 545.4v0M1277 548.6v0M1277 551v0M1277 558.8v0M1277 562.3v0M1278 495v0M1278 507.8v0M1278 510.9v0M1278 516.1v0M1278 522.6V524.6M1278 527.8V530.8M1278 533.7v0M1278 536.8v0M1278 542.3V553.6M1278 559.7V561.7M1279 514.4v0M1279 524.5V531.5M1279 535.1v0M1279 537.6v0M1279 540.8V542.2M1279 544.6v0M1279 546.9V559.3M1279 565.3v0M1280 520.4V522.6M1280 529.8V532.1M1280 534.8v0M1280 538.1V546M1280 548.6V554.5M1280 559.8V561.8M1281 518.3v0M1281 527.3v0M1281 529.9v0M1281 532.6v0M1281 535.7V537.4M1281 541.4V543.4M1281 545.9V559.8M1281 562.3V565.3M1281 570.6v0M1282 516v0M1282 519V528M1282 530.4V537.9M1282 541.3V541.9M1282 544.3V547.3M1282 550.3V551.1M1283 494.2V496.1M1283 499.9v0M1283 504.2V507.9M1283 516.3V519.8M1283 525.1v0M1283 528.2v0M1283 531.1V533.2M1283 535.7v0M1283 540.9V542.8M1283 546.8V548.2M1283 553.9v0M1283 557.3v0M1283 564.9v0M1284 494.7V496M1284 499V504.4M1284 508V510.9M1284 513.1v0M1284 519.5V526M1284 529.3v0M1284 532.4v0M1284 539.8v0M1284 549.9v0M1284 555.1v0M1285 501.9v0M1285 506.5v0M1285 510.1v0M1285 513.1V527.8M1285 532.5V536.3M1285 538.8V543.8M1285 549.3V550.9M1285 556.5V557.1M1285 563.9V565M1286 513.3v0M1286 519.5v0M1286 525V542.5M1286 545.1V549.6M1286 554.4V558.2M1287 517.5v0M1287 520.5V521.3M1287 523.7V524.6M1287 529.4V530.1M1287 532.7V535.3M1287 537.6V541.7M1287 545V545.8M1287 548.3V549.4M1287 553.8v0M1287 559.3V560.6M1287 566.5v0M1288 496.4v0M1288 500.5v0M1288 504.2v0M1288 510v0M1288 516.4v0M1288 521.3V522M1288 525.6V526.4M1288 528.9v0M1288 531.3V534M1288 536.7v0M1288 545.4V550.3M1288 553.3V554.7M1288 562.1v0M1289 496.1v0M1289 501.6v0M1289 507.6V509.5M1289 513.2v0M1289 520v0M1289 527.8v0M1289 532V534.8M1289 554.7v0M1290 501v0M1290 507.2v0M1290 511.4V513.2M1290 515.8V524.8M1290 527.4v0M1290 531.9v0M1290 535.2V543.2M1290 545.6V548M1290 550.2v0M1290 553.2v0M1290 557.6v0M1290 569.1V570.7M1291 520.5v0M1291 534.4V543.4M1291 546.3v0M1291 549.7v0M1291 553.7V563.9M1291 566.1V567.8M1291 570.8V571.9M1291 584.7v0M1292 520.5v0M1292 526.7V529.1M1292 532.3V535.9M1292 538.2V545M1292 547.5V550.8M1292 554.1V556.9M1292 559.3v0M1292 564.2v0M1292 567.2v0M1293 514.4v0M1293 529.6v0M1293 532.4V549.3M1293 556.5V558.4M1294 517.3v0M1294 521v0M1294 526.2v0M1294 530.5v0M1294 534.2V551.3M1294 553.5V554.8M1294 557.3v0M1294 561v0M1295 514.8v0M1295 521.3V523.2M1295 527.7V533.1M1295 538V541M1295 543.3V546.7M1295 550V553.3M1295 558.9v0M1295 561.8v0M1295 564.1v0M1296 514v0M1296 518.8v0M1296 521.2V524.5M1296 527V538.3M1296 540.8V546.1M1296 549.3V553.5M1296 562.6v0M1296 565.8v0M1297 502.1V504.1M1297 510.2V514.9M1297 517.3v0M1297 523.2V526.5M1297 529.8V534.8M1297 537V538.9M1297 541.2V542M1297 545.9v0M1297 548.2v0M1298 495.4v0M1298 498.1V499.4M1298 511.6V512.9M1298 518V522M1298 524.2V524.9M1298 528.3V531.6M1298 535.5v0M1298 538.6V540.1M1298 545.6v0M1298 548.8v0M1298 551.8V553.7M1298 557.5v0M1299 505.4V507.6M1299 515.1V517M1299 525.8v0M1299 531.1V532.9M1299 535.3v0M1299 544.6v0M1299 546.8v0M1299 552.5v0M1300 508.9V510.4M1300 514.2v0M1300 518.7V522.2M1300 524.5V526.6M1300 529.7V540.3M1300 542.6V543.3M1300 547.8v0M1300 550.4V552.3M1300 555.8v0M1300 562.6v0M1301 513.2v0M1301 515.9v0M1301 521.8V523.1M1301 527.9V530.6M1301 533.4v0M1301 537.1V545.8M1301 548.1V554.6M1301 562.6v0M1302 523.8V524.7M1302 533.8V542.1M1302 545.1V545.8M1302 548.6V549.3M1302 551.7V555.1M1302 557.3V563.4M1302 568.2V569.9M1302 579.6v0M1303 522.1V522.7M1303 525.2V527.6M1303 532.4v0M1303 535.2v0M1303 538.2v0M1303 540.5V542.9M1303 545.5V547.2M1303 550.3V552.3M1303 554.8V557M180.4 595.5v0M290.5 596.5v0M294.3 587.5v0M252.4 565.5v0M284.4 570v0M288.9 575v0M651.3 578.4v0M644.7 571.5v0M680.4 573.3v0M709 573v0M729.5 573.3v0M845.5 574.4v0M886.5 571.5v0M906 572v0M1218.4 581.3v0M1239.5 586.4v0M1244 584.3v0M1247.5 581.3v0M810 566v0M881.5 568v0" stroke="#000"/>
</g>
<g clip-path="url(#c2)">
<path d="M164 380.9l2.9 5.8h-5.8zM185 380.9l2.9 5.8h-5.8zM187 380.9l2.9 5.8h-5.8zM206 380.9l2.9 5.8h-5.8zM215 380.9l2.9 5.8h-5.8zM277 380.9l2.9 5.8h-5.8zM306 380.9l2.9 5.8h-5.8zM210.5 666.1l2.9 -5.8h-5.8zM244.4 666.1l2.9 -5.8h-5.8zM256.4 666.1l2.9 -5.8h-5.8zM317.5 666.1l2.9 -5.8h-5.8zM367.3 666.1l2.9 -5.8h-5.8zM389.5 666.1l2.9 -5.8h-5.8zM403.3 666.1l2.9 -5.8h-5.8zM448.4 666.1l2.9 -5.8h-5.8zM451.3 666.1l2.9 -5.8h-5.8zM450.3 666.1l2.9 -5.8h-5.8zM452.4 666.1l2.9 -5.8h-5.8zM501.5 666.1l2.9 -5.8h-5.8zM535.3 666.1l2.9 -5.8h-5.8zM557.5 666.1l2.9 -5.8h-5.8zM563.3 666.1l2.9 -5.8h-5.8zM575.3 666.1l2.9 -5.8h-5.8zM716.4 666.1l2.9 -5.8h-5.8zM743.3 666.1l2.9 -5.8h-5.8zM758.3 666.1l2.9 -5.8h-5.8zM835.3 666.1l2.9 -5.8h-5.8zM994.4 666.1l2.9 -5.8h-5.8zM1138.4 666.1l2.9 -5.8h-5.8zM1176.3 666.1l2.9 -5.8h-5.8zM1198.4 666.1l2.9 -5.8h-5.8z" fill="#ffa500"/>
<rect x="162.2" y="462.6" width="156.6" height="76" fill="#ffa500" fill-opacity="0.1" stroke="#ffa500" stroke-opacity="0.1" stroke-width="1.39"/>
<rect x="318.8" y="516.9" width="102.9" height="30.7" fill="#ffa500" fill-opacity="0.1" stroke="#ffa500" stroke-opacity="0.1" stroke-width="1.39"/>
<rect x="421.7" y="509.3" width="102.2" height="27.5" fill="#ffa500" fill-opacity="0.1" stroke="#ffa500" stroke-opacity="0.1" stroke-width="1.39"/>
<rect x="523.9" y="484" width="103.2" height="55" fill="#ffa500" fill-opacity="0.1" stroke="#ffa500" stroke-opacity="0.1" stroke-width="1.39"/>
<rect x="627.1" y="498" width="101.8" height="49" fill="#ffa500" fill-opacity="0.1" stroke="#ffa500" stroke-opacity="0.1" stroke-width="1.39"/>
<rect x="728.9" y="499.4" width="103.2" height="41.6" fill="#ffa500" fill-opacity="0.1" stroke="#ffa500" stroke-opacity="0.1" stroke-width="1.39"/>
<rect x="832.1" y="491.7" width="102.7" height="47.3" fill="#ffa500" fill-opacity="0.1" stroke="#ffa500" stroke-opacity="0.1" stroke-width="1.39"/>
<rect x="934.8" y="510" width="137.3" height="42" fill="#ffa500" fill-opacity="0.1" stroke="#ffa500" stroke-opacity="0.1" stroke-width="1.39"/>
<rect x="1072.1" y="515.8" width="115" height="31.8" fill="#ffa500" fill-opacity="0.1" stroke="#ffa500" stroke-opacity="0.1" stroke-width="1.39"/>
<rect x="1187.1" y="518" width="116" height="41.6" fill="#ffa500" fill-opacity="0.1" stroke="#ffa500" stroke-opacity="0.1" stroke-width="1.39"/>
<rect x="105.5" y="498.7" width="1255.5" height="48.9" fill="#f00" fill-opacity="0.1" stroke="#f00" stroke-opacity="0.1" stroke-width="1.39"/>
<path d="M162.2 500.4H318.8" stroke="#ffa500" stroke-width="2.78" stroke-linecap="square" fill="none"/>
<path d="M318.8 532.6H421.7" stroke="#ffa500" stroke-width="2.78" stroke-linecap="square" fill="none"/>
<path d="M421.7 521.7H523.9" stroke="#ffa500" stroke-width="2.78" stroke-linecap="square" fill="none"/>
<path d="M523.9 511.4H627.1" stroke="#ffa500" stroke-width="2.78" stroke-linecap="square" fill="none"/>
<path d="M627.1 521.6H728.9" stroke="#ffa500" stroke-width="2.78" stroke-linecap="square" fill="none"/>
<path d="M728.9 520.2H832.1" stroke="#ffa500" stroke-width="2.78" stroke-linecap="square" fill="none"/>
<path d="M832.1 515.4H934.8" stroke="#ffa500" stroke-width="2.78" stroke-linecap="square" fill="none"/>
<path d="M934.8 531H1072.1" stroke="#ffa500" stroke-width="2.78" stroke-linecap="square" fill="none"/>
<path d="M1072.1 531.2H1187.1" stroke="#ffa500" stroke-width="2.78" stroke-linecap="square" fill="none"/>
<path d="M1187.1 538.2H1303.1" stroke="#ffa500" stroke-width="2.78" stroke-linecap="square" fill="none"/>
<path d="M105.5 522.7H1361" stroke="#f00" stroke-width="2.08" fill="none"/>
<path d="M162.2 666.5V380.5M318.8 666.5V380.5M421.7 666.5V380.5M523.9 666.5V380.5M627.1 666.5V380.5M728.9 666.5V380.5M832.1 666.5V380.5M934.8 666.5V380.5M1072.1 666.5V380.5M1187.1 666.5V380.5M1303.1 666.5V380.5" stroke="#800080" stroke-width="2.08" stroke-dasharray="2.08 3.44" stroke-dashoffset="-0.6" fill="none"/>
</g>
<text x="240.5" y="657" font-size="13.889" text-anchor="middle">6325</text>
<text x="370.2" y="637" font-size="13.889" text-anchor="middle">6319</text>
<text x="472.8" y="617" font-size="13.889" text-anchor="middle">6320</text>
<text x="575.5" y="657" font-size="13.889" text-anchor="middle">6321</text>
<text x="678" y="637" font-size="13.889" text-anchor="middle">6322</text>
<text x="780.5" y="617" font-size="13.889" text-anchor="middle">6323</text>
<text x="883.5" y="657" font-size="13.889" text-anchor="middle">6324</text>
<text x="1003.4" y="637" font-size="13.889" text-anchor="middle">6281</text>
<text x="1129.6" y="617" font-size="13.889" text-anchor="middle">6330</text>
<text x="1245.1" y="657" font-size="13.889" text-anchor="middle">6331</text>
<rect x="105.5" y="380.5" width="1380" height="286" fill="none" stroke="#000" stroke-width="1.11"/>
<text x="162.5" y="686.8" font-size="13.889" text-anchor="middle">0</text>
<text x="455.3" y="686.8" font-size="13.889" text-anchor="middle">10000</text>
<text x="748" y="686.8" font-size="13.889" text-anchor="middle">20000</text>
<text x="1040.7" y="686.8" font-size="13.889" text-anchor="middle">30000</text>
<text x="1333.5" y="686.8" font-size="13.889" text-anchor="middle">40000</text>
<path d="M162.5 666.5v4.9M455.5 666.5v4.9M747.5 666.5v4.9M1040.5 666.5v4.9M1333.5 666.5v4.9" stroke="#000" stroke-width="1.11" fill="none"/>
<text x="95.8" y="663" font-size="13.889" text-anchor="end">10.2</text>
<text x="95.8" y="600.7" font-size="13.889" text-anchor="end">10.3</text>
<text x="95.8" y="538.3" font-size="13.889" text-anchor="end">10.4</text>
<text x="95.8" y="475.9" font-size="13.889" text-anchor="end">10.5</text>
<text x="95.8" y="413.6" font-size="13.889" text-anchor="end">10.6</text>
<path d="M105.5 657.5h-4.9M105.5 595.5h-4.9M105.5 533.5h-4.9M105.5 470.5h-4.9M105.5 408.5h-4.9" stroke="#000" stroke-width="1.11" fill="none"/>
<text x="795" y="372.2" font-size="16.667" text-anchor="middle">Magnitude Estimates</text>
<rect x="1348.5" y="613.5" width="130" height="45.7" rx="2.8" fill="#fff" fill-opacity="0.8" stroke="#ccc" stroke-opacity="0.8" stroke-width="1.39"/>
<circle cx="1367.5" cy="626.4" r="2.08" fill="#ffa500"/>
<circle cx="1367.5" cy="647.3" r="2.08" fill="#000"/>
<text x="1392.5" y="629.7" font-size="13.889" text-anchor="start">Highlighted</text>
<text x="1392.5" y="650.7" font-size="13.889" text-anchor="start">OK</text>
<rect x="1365.5" y="387.5" width="113" height="47.7" rx="2.8" fill="#fff" fill-opacity="0.8" stroke="#ccc" stroke-opacity="0.8" stroke-width="1.39"/>
<path d="M1370.4 399.4H1398.4" stroke="#ffa500" stroke-width="2.78" stroke-linecap="square"/>
<path d="M1370 422H1398" stroke="#f00" stroke-width="2.08" stroke-linecap="square"/>
<text x="1410" y="404" font-size="13.889">mag<tspan font-size="9.72" font-style="oblique" dx="0.3" dy="2.0">OBSID</tspan></text>
<text x="1409" y="426.5" font-size="13.889" text-anchor="start">mag</text>
<g clip-path="url(#c3)">
<path d="M180.4 856.5v0M210.5 856.5v0M244.4 856.5v0M256.4 856.5v0M294.3 856.5v0M317.5 856.5v0M367.3 856.5v0M377.5 856.5v0M389.5 856.5v0M404.4 856.5v0M424.1 856.5v0M425.7 856.5v0M448.7 856.5v0M450.5 856.5v0M452.1 856.5v0M479.3 856.5v0M501.5 856.5v0M509.2 856.5v0M535.3 856.5v0M547.3 856.5v0M557.5 856.5v0M563.3 856.5v0M574 856.5v0M575.6 856.5v0M588.4 856.5v0M598.5 856.5v0M626.5 856.5v0M664.1 856.5v0M716.7 856.5v0M732.1 856.5v0M741.7 856.5v0M743.3 856.5v0M758.3 856.5v0M768.4 856.5v0M802.3 856.5v0M813.5 856.5v0M815.1 856.5v0M834.8 856.5v0M849.2 856.5v0M863.6 856.5v0M881.5 856.5v0M920.4 856.5v0M961.3 856.5v0M994.1 856.5v0M1068.5 856.5v0M1138.1 856.5v0M1176.3 856.5v0M1192 856.5v0M1193.6 856.5v0M1198.4 856.5v0M1222.7 856.5v0M1224.3 856.5v0M1253.1 856.5v0M1254.7 856.5v0M1263.2 856.5v0M1264.8 856.5v0M1268 856.5v0M1293.3 856.5v0M1294.9 856.5v0M180.4 889.5v0M210.5 889.5v0M244.4 889.5v0M256.4 889.5v0M294.3 889.5v0M317.5 889.5v0M367.3 889.5v0M377.5 889.5v0M389.5 889.5v0M404.4 889.5v0M424.1 889.5v0M425.7 889.5v0M448.7 889.5v0M450.5 889.5v0M452.1 889.5v0M479.3 889.5v0M501.5 889.5v0M509.2 889.5v0M535.3 889.5v0M547.3 889.5v0M557.5 889.5v0M563.3 889.5v0M574 889.5v0M575.6 889.5v0M588.4 889.5v0M598.5 889.5v0M626.5 889.5v0M664.1 889.5v0M716.7 889.5v0M732.1 889.5v0M741.7 889.5v0M743.3 889.5v0M758.3 889.5v0M768.4 889.5v0M802.3 889.5v0M813.5 889.5v0M815.1 889.5v0M834.8 889.5v0M849.2 889.5v0M863.6 889.5v0M881.5 889.5v0M920.4 889.5v0M961.3 889.5v0M994.1 889.5v0M1068.5 889.5v0M1138.1 889.5v0M1176.3 889.5v0M1192 889.5v0M1193.6 889.5v0M1198.4 889.5v0M1222.7 889.5v0M1224.3 889.5v0M1253.1 889.5v0M1254.7 889.5v0M1263.2 889.5v0M1264.8 889.5v0M1268 889.5v0M1293.3 889.5v0M1294.9 889.5v0M801.5 889.5v0M803.1 889.5v0M802 791.5v0M803.6 791.5v0M805.2 791.5v0M860.4 791.5v0M889.8 791.5v0M891.4 791.5v0M892.4 791.5v0M976 791.5v0M1038.4 791.5v0M1046.9 791.5v0M1048.5 791.5v0M1068.5 791.5v0M1195.5 791.5v0M1202.1 791.5v0M1225.1 791.5v0M1226.7 791.5v0M1255.5 791.5v0M1266.1 791.5v0M1272.8 791.5v0M1274.4 791.5v0M1296.3 791.5v0M831.9 758.5v0M1072.5 758.5v0M1051.5 758.5v0M1052.5 758.5v0M1053.5 758.5v0M1054.5 758.5v0M1055.5 758.5v0M1056.5 758.5v0M1057.5 758.5v0M1058.5 758.5v0M1059.5 758.5v0M1060.5 758.5v0M1061.5 758.5v0M1062.5 758.5v0M1063.5 758.5v0M1064.5 758.5v0M1065.5 758.5v0M1066.5 758.5v0M1067.5 758.5v0" stroke="#000" stroke-width="2.9" stroke-linecap="round" fill="none"/>
<path d="M105.5 921.5H1485.5M105.5 889.5H1485.5M105.5 856.5H1485.5M105.5 823.5H1485.5M105.5 791.5H1485.5M105.5 758.5H1485.5" stroke="#b0b0b0" stroke-width="1.11" stroke-dasharray="1.11 1.83" fill="none"/>
<path d="M162.2 954.5V725.5M318.8 954.5V725.5M421.7 954.5V725.5M523.9 954.5V725.5M627.1 954.5V725.5M728.9 954.5V725.5M832.1 954.5V725.5M934.8 954.5V725.5M1072.1 954.5V725.5M1187.1 954.5V725.5M1303.1 954.5V725.5" stroke="#800080" stroke-width="2.08" stroke-dasharray="2.08 3.44" stroke-dashoffset="-0.6" fill="none"/>
</g>
<rect x="105.5" y="725.5" width="1380" height="229" fill="none" stroke="#000" stroke-width="1.11"/>
<text x="95.8" y="927.3" font-size="13.889" text-anchor="end">OBS not OK</text>
<text x="95.8" y="894.6" font-size="13.889" text-anchor="end">dr &gt; 5</text>
<text x="95.8" y="861.9" font-size="13.889" text-anchor="end">Ion. rad.</text>
<text x="95.8" y="829.1" font-size="13.889" text-anchor="end">Sat. pixel.</text>
<text x="95.8" y="796.4" font-size="13.889" text-anchor="end">not track</text>
<text x="95.8" y="763.7" font-size="13.889" text-anchor="end">not Kalman</text>
<path d="M105.5 921.5h-4.9M105.5 889.5h-4.9M105.5 856.5h-4.9M105.5 823.5h-4.9M105.5 791.5h-4.9M105.5 758.5h-4.9" stroke="#000" stroke-width="1.11" fill="none"/>
<g clip-path="url(#c4)">
<path d="M162 1003.4V1007.4M163 1000.1V1008.2M164 1001.4V1008.1M165 996.9v0M165 1001.7V1008.3M166 997.6V1007.4M167 1000.9V1008.5M168 1006.3V1008.2M169 1005.8V1008.2M170 1002.3V1008.2M171 1001.8V1008.1M172 1004.1V1008.2M173 1003.2V1008.4M174 1004.9V1008.2M175 1003.9V1008.2M176 1002.7v0M176 1004.6V1008.3M177 1001.6V1008.1M178 1002.3V1008.3M179 1002V1007.6M180 999.4v0M180 1001.1v0M180 1004.2V1007.9M181 1003.9V1008.4M182 1003.5V1008.2M183 1002.6V1008M184 1004.6V1008.2M185 1005.2V1008.2M186 1003.8V1008.3M187 1005.4V1008.2M188 1004.3V1008.1M189 1004.6V1008.2M190 1005V1008.2M191 1005.3V1008.4M192 1005V1008.2M193 999.5V1007.9M194 999V1007.9M195 1001.2V1008.2M196 1003V1007.9M197 1000.7v0M197 1002.8V1007.9M198 1000.8V1008.1M199 1001.5V1007.6M200 1002.9V1008.2M201 1003.3V1008.4M202 1003.1V1008.1M203 1002.8V1008.2M204 999.5v0M204 1002.5V1008M205 1005.5V1008.3M206 1003.9V1008M207 1004.8V1008.4M208 1004.1V1008.3M209 1001.3V1008.3M210 1000.2V1007.5M211 998.8v0M211 1002.9V1008.1M212 1000.9v0M212 1003.2V1007.4M213 1004.6V1008.2M214 1004.4V1008.2M215 1002.6V1008.3M216 1001.2V1008.1M217 1001.1V1007.7M218 1003.2v0M218 1005.2V1008.3M219 1004.8V1008.1M220 1004.9V1008.5M221 1000.6V1001.3M221 1003V1008M222 1001V1008.2M223 1002.5V1007.7M224 1004.5V1008.2M225 996.9v0M225 999.9v0M225 1002.4v0M225 1004.2V1008.1M226 996.9V1006.9M227 996.9v0M227 998.9v0M227 1002.3V1008.1M228 1004V1008.1M229 1004.7V1008.4M230 1003.5V1008.5M231 1002.1v0M231 1003.8V1008.2M232 1004.1V1008.1M233 1002.1V1008.1M234 1001V1007.9M235 1003.9V1008.4M236 1003.9V1008.3M237 1001.2V1007.5M238 996.9V1007.9M239 996.9v0M239 999.3V1007.5M240 998.4v0M240 1001.1V1007.8M241 999.4V1008.3M242 1002.9V1007.9M243 1002.5V1008M244 999.5V1008.2M245 1000.5v0M245 1003.4V1008.3M246 1004.8V1008M247 1004.1V1008M248 1002.7V1008.2M249 1003.1V1008.2M250 1003.5V1008M251 1004.5V1008.4M252 1005.2V1008.4M253 1004.8V1008.4M254 1003.3V1008.1M255 997.9V998.8M255 1002.6V1008.1M256 996.9v0M256 999.5V1008.3M257 1001V1008.3M258 1003.3V1008M259 1006.1V1008.3M260 1001.9V1008.4M261 1000.9v0M261 1002.9V1007.7M262 1003V1008.4M263 1001.2V1007.8M264 1002.2V1008.2M265 1005.3V1008.3M266 1005V1008.5M267 1004.8V1008.4M268 1002.3V1008M269 1001.6V1008M270 996.9v0M270 1000.3V1007.8M271 996.9V998.1M271 999.9V1007.8M272 997.2V997.9M272 999.7v0M272 1002.3V1008.1M273 999.2v0M273 1001.2V1008.3M274 999.9V1008.3M275 1002.4V1008.4M276 1002V1008.2M277 996.9v0M277 999.5V1007.5M278 998.7v0M278 1000.4V1008.2M279 1001.3V1007.8M280 1002.7V1008.4M281 1006V1008.5M282 1005.6V1008.1M283 1001.9V1008.4M284 996.9V997.7M284 1000.5V1008.1M285 996.9V998.1M285 1000.2V1007.9M286 1004.3V1008.3M287 1001.8V1008.3M288 1002.4V1008.1M289 1002.4V1008.1M290 1001.5V1008.2M291 1002.2V1007.6M292 1002.1v0M292 1004.4V1008.3M293 1003.4V1008.3M294 1001.2V1008M295 1001.2V1008.1M296 1002.6V1008.3M297 1004.6V1008.2M298 1002.9V1008.1M299 1002.5V1008.2M300 1001.2V1008.3M301 999.3V1000.7M301 1003V1007.4M302 1000.9V1002.4M302 1004V1008.1M303 1004.5V1008.3M304 1005.6V1008M305 1004.7V1008.2M306 1003.3v0M306 1005.2V1007.8M307 1002.6V1008.3M308 999.5V1000.1M308 1002.1V1008.2M309 1003.1V1007.9M310 1005.9V1008.3M311 1005.5V1008.1M312 1003.5V1008.3M313 1005.8V1008.3M314 1004V1008.3M315 1001.2V1007.9M316 998.8v0M316 1000.8v0M316 1002.4V1007.7M317 1000.2v0M317 1002.4V1007.6M318 1000.8V1007.9M319 1003.8V1008.3M320 1006.6V1008.4M321 1006.5V1008.3M322 1006.1V1008.4M323 1006.5V1008.4M324 1005.6V1008.3M325 1006.1V1008.2M326 1004.8V1008.2M327 1005.4V1008.4M328 1004.1V1008.2M329 1005.4V1008.3M330 1004.8V1008.3M331 1006.2V1008.5M332 1006.5V1008.4M333 1004.3V1008.4M334 1003.6V1008.5M335 1005V1008.2M336 1004.8V1007.9M337 1006.6V1008.4M338 1007V1008.5M339 1006.1V1008.3M340 1002.1V1007.7M341 1002.9V1008.4M342 1001.2v0M342 1003.9V1007.8M343 1004V1008.3M344 1005.4V1008.2M345 1004.4V1008.2M346 1003.7V1008.3M347 1006.1V1008.3M348 1005.8V1008.1M349 1005.3V1008.5M350 1005.8V1008.2M351 1005V1008.1M352 1005.5V1008.5M353 1005.9V1008.1M354 1007.1V1008.4M355 1005.7V1008.5M356 1005.3V1008.1M357 1004.6V1008.4M358 1004.6V1008.4M359 1004.9V1008.2M360 1005.6V1008.2M361 1006.4V1008.4M362 1005.8V1008.2M363 1004.6V1008.4M364 1005.1V1008.4M365 1006.7V1008.3M366 1007.3V1008.4M367 1007.4V1008.4M368 1005.4V1008.4M369 1006.2V1008.2M370 1005.6V1008.3M371 1005V1008.1M372 1006.1V1008.3M373 1005.6V1008.3M374 1005.5V1008.2M375 1006.2V1008.3M376 1005.9V1008.3M377 1006.4V1008.5M378 1007.1V1008.4M379 1005.2V1008.4M380 1005.7V1008.2M381 1005.8V1008.4M382 1006.4V1008.4M383 1007.2V1008.4M384 1006V1008.4M385 1006.1V1008.3M386 1005.8V1008.2M387 1005.6V1008.4M388 1005.2V1008.2M389 1004.7V1008.4M390 1006.3V1008.2M391 1005.3V1008.4M392 1005.5V1008.4M393 1005.8V1008.3M394 1005.9V1008.5M395 1006V1008.1M396 1005.7V1008.3M397 1005.4V1007.9M398 1005.8V1008.4M399 1005.9V1008.5M400 1005.9V1008.2M401 1003.3V1008.2M402 1004.2V1008.4M403 1004.9V1008.1M404 1005.5V1008.4M405 1006.6V1008.3M406 1006.7V1008.5M407 1006.6V1008.4M408 1005.3V1008.4M409 1006.5V1008.2M410 1006.4V1008.4M411 1005.9V1008.3M412 1006.2V1008.4M413 1005.9V1008.5M414 1004.3V1008.5M415 1005.3V1008.4M416 1006.3V1008.2M417 1006V1008.4M418 1002.7v0M418 1004.4V1008.1M419 1003.7V1007.8M420 1004.8V1008.2M421 1005.1V1008.5M422 1005.4V1008.4M423 1005.6V1008.4M424 1006.1V1008M425 1005.5V1008.2M426 1005.7V1008.4M427 1005.1V1008.3M428 1006.6V1008.2M429 1006.5V1008.4M430 1005.7V1008.3M431 1006.1V1008.4M432 1006.3V1008.5M433 1006.7V1008.4M434 1006.1V1008.2M435 1005.2V1008.4M436 1005.1V1008.4M437 1003.5V1007.7M438 1005V1008.4M439 1006.8V1008.4M440 1004.7V1008.2M441 1004.1V1008.2M442 1004.7V1008.3M443 1005.1V1008.3M444 1005.1V1008.4M445 1007.7V1008.5M446 1006.9V1008.5M447 1005.6V1008.4M448 1004.5V1008M449 1004.9V1007.9M450 1005.3V1008.3M451 1006.2V1008.2M452 1005.5V1008.1M453 1005.4V1008.2M454 1005V1008.3M455 1005.1V1008.3M456 1005.7V1008.4M457 1004.6V1008.1M458 1003.1V1008M459 1003.6V1008.2M460 1005.6V1008.1M461 1006.7V1008.5M462 1007.1V1008.5M463 1005.9V1008.4M464 1004.5V1008.2M465 1003.8V1008.3M466 1005.9V1008.2M467 1006.5V1008.4M468 1006.3V1008.4M469 1004.1V1008M470 1004.2V1008.2M471 1003V1008.2M472 1002.1V1008.3M473 1003.9V1008M474 1005.5V1008.3M475 1007.2V1008.5M476 1006.8V1008.3M477 1006.5V1008.3M478 1005.8V1008.3M479 1005.2V1008.3M480 1005.2V1008.3M481 1002V1008.5M482 1003.2V1008.5M483 1003.9V1008.4M484 1005.4V1008.3M485 1006.2V1008.4M486 1004.2V1008.4M487 1004.8V1008.3M488 1004.1V1008.3M489 1003.3V1008.3M490 1007.1V1008.4M491 1006.6V1008.5M492 1004.7V1008.3M493 1004.4V1008.3M494 1004.4V1008.4M495 1004.6V1008.2M496 1005.4V1008.1M497 1006.1V1008.5M498 1005.4V1008.4M499 1005V1008.2M500 1005.3V1008.1M501 1005.5V1008.3M502 1005.3V1008.4M503 1004.8V1008.4M504 1005.2V1008.1M505 1006.2V1008.2M506 1007.1V1008.4M507 1007V1008.5M508 1006.7V1008.3M509 1006.6V1008.5M510 1003.7V1008.2M511 1005.1V1008.2M512 1006.3V1008.4M513 1006V1008.3M514 1006.4V1008.5M515 1004.1V1008.2M516 1004.2V1008.3M517 1004.4V1007.9M518 1006.2V1008.5M519 1006.4V1008.3M520 1006.3V1008.2M521 1006V1008.4M522 1005.8V1008.3M523 1006.1V1008.5M524 1002.8V1008.2M525 1003.9V1008.1M526 1001.9V1008M527 1001v0M527 1003.2V1008.5M528 1000.2v0M528 1002V1008.2M529 1004.1V1008.3M530 1005V1008.4M531 1003.4V1008.3M532 1005.3V1008.2M533 1003.6V1008.2M534 1005.1V1008.2M535 1006.9V1008.4M536 1004V1008.4M537 1003V1008M538 1004.9V1008.4M539 1001.5v0M539 1003.8V1008.4M540 1003.5V1008M541 1005.2V1008.2M542 1005.4V1008.3M543 1004.3V1008.3M544 1003V1007.4M545 1002.8V1007.9M546 1003.4V1007.8M547 1004.9V1008.3M548 1006V1008.3M549 1003.6V1008.5M550 1003.3V1008.2M551 1005.2V1008.2M552 1005.1V1008.5M553 1005V1008.2M554 999.5v0M554 1001.4V1008.3M555 998.8v0M555 1000.5V1007.7M556 1002.3V1008.1M557 1004.3V1008.3M558 1004V1008.4M559 1005.5V1008.5M560 999.8V1008M561 997.7v0M561 999.7V1008.3M562 1004.8V1008.4M563 1003.3v0M563 1005.8V1008.4M564 1005.3V1008.4M565 1006.1V1008.4M566 1001.2V1008.1M567 1001V1007.2M568 998.7v0M568 1000.5V1007M569 1003.7V1007.8M570 1005.2V1008.4M571 1004V1008.2M572 999.5V1001.2M572 1003.2V1008M573 1001V1007.9M574 1002.2V1007.3M575 1003.9V1008.3M576 1004.2V1008.1M577 1002.2V1007.8M578 1001.6V1008M579 1002.6V1008.1M580 1004V1008.3M581 1004.5V1008.3M582 1004.6V1008.3M583 1002.7V1007.8M584 1002.2V1008M585 1004.4V1007.8M586 1003.3V1008.1M587 1003.9V1008.2M588 999.7v0M588 1001.5V1008.1M589 1004.4V1008.2M590 1003.7V1008.1M591 1003.5V1008.3M592 1006.6V1008.2M593 1005.2V1008.4M594 1002.1v0M594 1004.5V1008.2M595 1003.7V1008.2M596 1003.1V1008.5M597 1005.9V1008.5M598 1005V1008.2M599 1004.6V1008.3M600 1003.3V1007.9M601 1004V1008.1M602 1003.2V1008.3M603 1001.9V1007.7M604 1002.9V1007.7M605 1002.5V1008.2M606 1002.3V1008.3M607 1002.8V1008.3M608 1003.6V1008.4M609 1005.4V1008.1M610 1006.8V1008.5M611 1001.8v0M611 1003.6V1008.1M612 999.1v0M612 1000.8V1008M613 1004.3V1008.4M614 1003.2V1008.5M615 1003.5V1007.7M616 1005.5V1008.3M617 1003.8V1008M618 1003.2V1008.4M619 1003.8V1008.1M620 1003.4V1007.6M621 1003.4V1008.1M622 1003.9V1008.2M623 1004.9V1008.5M624 1004.6V1008.4M625 1006.9V1008.4M626 1005.9V1008.4M627 1002.9V1008.2M628 1000.3V1007.9M629 1002.7V1008M630 1000.9V1008.4M631 999.1v0M631 1000.9V1008.3M632 1002.6V1008.3M633 1004.6V1008.1M634 1004.2V1008.3M635 1003.8V1008.3M636 1004.4V1008.1M637 1004.9V1008.2M638 1006.4V1008.4M639 1005.4V1008.3M640 1003.5V1008.5M641 1004.8V1008.5M642 1004.7V1008.5M643 1006.1V1008.3M644 1004.5V1008.2M645 1004.5V1008.3M646 1004.6V1008.3M647 1000.9v0M647 1002.7V1008M648 1001v0M648 1003.2V1008.1M649 1000.1V1008.1M650 1000.7v0M650 1003.6V1008M651 1002.3V1008.4M652 1005.9V1008.2M653 1006.9V1008.5M654 1007.4V1008.3M655 1006.9V1008.4M656 1005.6V1007.9M657 1003.4V1008M658 1003.3V1008.4M659 1004.4V1008.4M660 1005.7V1008.4M661 1004.7V1008M662 1005.4V1008.4M663 1004.8V1008.1M664 1004.4V1008.4M665 1004.3V1008.4M666 1004.7V1008.4M667 1006.3V1008.5M668 1003.1V1008.2M669 1003.3V1008.2M670 1004.9V1008.4M671 1006.4V1008.4M672 1004.8V1008.4M673 1002.8V1008.3M674 1002.4V1008.5M675 1004V1008.2M676 1003.7V1008.1M677 1003.5V1008.2M678 1002.8V1008.3M679 1002.6V1008M680 1003V1008.1M681 1004.1V1008.2M682 1005.9V1008.3M683 1007.1V1008.4M684 1006.4V1008.2M685 1005.3V1008M686 998.8V1008M687 998.4v0M687 1001.4V1007.9M688 1002.7V1008.4M689 1004.4V1008.2M690 1004.4V1008.3M691 1003.7V1008.2M692 1002.1V1008.2M693 1003.2V1008M694 1004.9V1008.2M695 1003.6V1008.3M696 1004.2V1008M697 1003.2V1008M698 1002.9V1008.3M699 1003.4v0M699 1005.6V1008.3M700 1006.1V1008.3M701 1003.3V1008M702 1002.8V1008.1M703 1003.9V1008M704 1004.8V1007.8M705 1005.3V1008.4M706 1006.7V1008.4M707 1004.5V1008.2M708 1004.3V1008.3M709 1002.8V1008.2M710 1003V1008.1M711 1003.6V1008.2M712 1006V1008.3M713 1003.8V1008.1M714 1004V1008.4M715 1003.6V1007.8M716 1002.4V1008.1M717 1005.3V1008M718 1002.9V1007.9M719 1002.8v0M719 1004.8v0M719 1006.7V1008.4M720 1004.7V1008.5M721 1004.9V1008.4M722 1002.7V1008.1M723 1001.9v0M723 1003.7V1008.4M724 1003.5V1008.4M725 1003.9V1008M726 1001.7V1008.2M727 1002.9V1008.1M728 1006.1V1008.4M729 1004.6V1008.5M730 1004.4V1008M731 1005.6V1008.4M732 1004V1007.9M733 1004.4V1008.1M734 1005.7V1008.2M735 1005.8V1008.4M736 1005.2V1007.9M737 1005.8V1008.2M738 1006.6V1008.1M739 1006.4V1008.3M740 1005.8V1008.5M741 1005.4V1008M742 1003.7V1008.2M743 1004.9V1008.3M744 1004.9V1008.4M745 1005.9V1008.3M746 1006.3V1008.3M747 1004.8V1008.3M748 1005V1008.1M749 1005.6V1008.4M750 1006.3V1008.3M751 1006V1008.5M752 1005.8V1008.3M753 1003.5V1008.3M754 1003v0M754 1004.6V1007.8M755 1003.5V1008.2M756 1004.3V1008.3M757 1005.2V1007.9M758 1003v0M758 1004.9V1008.2M759 1004.5V1008.4M760 1005.8V1008.2M761 1005.6V1008.4M762 1005.9V1008.2M763 1004.7V1008.4M764 1004.8V1008.3M765 1004.2V1008.2M766 1002.6v0M766 1004.7V1008M767 1006V1008.3M768 1006.3V1008.4M769 1003.9V1008.4M770 1003.1V1007.6M771 1004.2V1008M772 1003.9V1008.3M773 1004.2V1008.4M774 1005.1V1008.3M775 1003.7V1008.1M776 1004.5V1008.2M777 1002.8v0M777 1004.7V1008.1M778 1005.3V1008.4M779 1006.6V1008.5M780 1005.7V1008.3M781 1004.7V1008.1M782 1006V1008.3M783 1005.3V1008.5M784 1005.4V1008.5M785 1006.7V1008.4M786 1004.2V1008.3M787 1002.1v0M787 1004.7V1008.3M788 1002V1008.2M789 1004.2V1008.4M790 1006.4V1008.3M791 1006.3V1008.3M792 1006V1008.3M793 1005.3V1008.2M794 1006V1008.3M795 1006.5V1008.5M796 1006.5V1008.5M797 1005.5V1008.3M798 1005.9V1008.4M799 1006.1V1008.4M800 1006.6V1008.3M801 1003V1008.4M802 1003.7V1008.2M803 1006.1V1008.2M804 1003.2V1008.1M805 1004.4V1008M806 1005V1008.2M807 1005.1V1008.2M808 1005.3V1008.1M809 1003.2V1007.8M810 1004V1008.4M811 1004.6V1008.3M812 1006.8V1008.4M813 1007V1008.3M814 1006.3V1008.4M815 1006V1008.2M816 1003.7V1007.9M817 1004.6V1007.8M818 1004.9V1008.3M819 1002V1008M820 1003.9V1008.3M821 1005.5V1008.4M822 1001.9v0M822 1003.6V1008.3M823 1003.2V1007.6M824 1005.1V1008.4M825 1004.5V1008.3M826 1006.4V1008.4M827 1004.9V1008.2M828 1006V1008.4M829 1007.2V1008.5M830 1006.8V1008.3M831 1004.1V1008.2M832 1003V1008.1M833 1003.9V1008.2M834 1004.8V1008.5M835 1005.4V1008.3M836 1004.5V1008.4M837 1003.1v0M837 1005.2V1008.4M838 1003.5V1008.3M839 1003.8V1008.2M840 1002.7V1007.7M841 1004.2V1008.2M842 1004.9V1008.4M843 1003.5V1008.4M844 1002.9V1008.4M845 1003.6V1008.3M846 1002v0M846 1004.8V1008.5M847 1003.3V1008.1M848 1003.7V1008M849 1003.3V1008.4M850 1002.4V1008M851 1005.9V1008.2M852 1005.3V1008.2M853 1002.2V1008.4M854 1003.3V1008.2M855 1001.8V1008.2M856 1004.2V1008.4M857 1006.4V1008.2M858 1003.8V1008.3M859 1001.5V1008.1M860 999.9V1007.9M861 1003.3V1008M862 1002.4V1007.9M863 1005.2V1008.4M864 1006.7V1008.4M865 1004.2V1008.1M866 1002.8V1008M867 1004.7V1008.2M868 1004.9V1007.9M869 1004.9V1008.5M870 1006.2V1008.4M871 1003.5V1008.3M872 1001.1v0M872 1003.1V1008.4M873 1002v0M873 1004V1007.7M874 1003.9V1008.3M875 1004.9V1008M876 1001V1008.3M877 1001.5V1008M878 1001.6V1008.4M879 1000.9v0M879 1002.6V1008M880 1003.8V1008M881 1004.2V1008.2M882 1003.2v0M882 1005V1008.2M883 1001.8v0M883 1004.1V1008.4M884 1003.6V1008.3M885 1001.9v0M885 1004.6V1008.1M886 1005.1V1008.3M887 1003.7V1008.4M888 998.3V999.7M888 1003.4V1007.8M889 998.4V1007.5M890 1002V1008M891 1002.3V1008.2M892 1004.7V1008.2M893 1005.1V1008.4M894 1005V1008.2M895 1003.1V1008.2M896 1004.6V1008M897 1004.1V1008.3M898 1004.2V1008.2M899 1003.9V1008.3M900 1003.2V1007.9M901 1003.4V1008.1M902 1004.8V1008.3M903 1003.3V1008M904 1002.1v0M904 1003.8V1008.3M905 1002.6V1008.1M906 1000.3v0M906 1002.1V1008.1M907 1003.1V1007.8M908 1004.7V1008.4M909 1004.1V1008.2M910 1002v0M910 1004.4V1008.3M911 1004V1008.4M912 1002.2V1008.2M913 1004.1V1008.2M914 1005.8V1008.3M915 1006.7V1008.4M916 1006V1008.4M917 1004.3V1008.3M918 1003.9V1008.2M919 1004.2V1008.2M920 1004.4V1008M921 1005.2V1008.3M922 1004.3V1008.5M923 1004.4V1008.4M924 1001.7v0M924 1003.3V1008.3M925 1005.3V1008.2M926 1006.7V1008.2M927 1006.6V1008.2M928 1002.5V1008.4M929 1002.6V1008.3M930 1004.6V1008.1M931 1004.9V1008.5M932 1005.3V1008.5M933 1003.6V1008.1M934 1000.4V1007.6M935 1000.9V1008.1M936 1004.1V1008.2M937 1005.7V1008.1M938 1005.8V1008.4M939 1003.3v0M939 1005V1008.2M940 1000.9V1007.9M941 1001.8V1008.4M942 1004.2V1008.3M943 1005.6V1008.2M944 1006.2V1008.2M945 1004.9V1008.3M946 1002.5V1008.3M947 1003.2V1008M948 1003.5V1008.2M949 1003.8V1008.1M950 1003.7V1008.2M951 1001.6v0M951 1003.7V1008.5M952 1003.7V1008.1M953 1004.4V1007.9M954 1004.9V1008.3M955 1004.9V1008.2M956 1004.3V1008.2M957 1002.4V1008.3M958 1004.4V1007.9M959 1003.8V1008.2M960 1005.7V1008.2M961 1005.7V1008.5M962 1000.2v0M962 1003.8V1008.2M963 998.2V1000.9M963 1002.7V1008.1M964 996.9V1007.1M965 999.7v0M965 1001.9v0M965 1003.7V1008.2M966 1005.3V1008.4M967 1003.6V1008.2M968 997.8v0M968 1003.2V1008.1M969 998V1008M970 1004.3V1008.2M971 1004.5V1008.3M972 1003.4V1008.2M973 1003.2V1008.1M974 1002.6v0M974 1004.8V1008.3M975 1005.2V1008.2M976 1004.7V1008.1M977 1004.7V1008.3M978 1003V1008.2M979 1002.7V1007.9M980 999.8v0M980 1003.1V1007.7M981 1004.9V1008.2M982 1005.1V1008.4M983 1005.9V1008.3M984 1003.9V1008.5M985 1003.6V1008.1M986 1004.6V1008M987 1005.5V1008M988 1006.6V1008.4M989 1005.5V1008.1M990 1005V1008.4M991 1005.1V1008.5M992 1002.9V1008.2M993 1002.8V1008.4M994 1004.5V1008.2M995 1003.8V1008.1M996 1002.8V1007.9M997 1002.4V1008.1M998 1004V1008M999 1004.3V1008.1M1000 1002.7V1008.2M1001 1002.6V1007.6M1002 1001.7V1007.9M1003 1002.6V1008M1004 1003.5v0M1004 1005.3V1008.5M1005 1005.9V1008.4M1006 1005.6V1008.3M1007 1002.8V1008.2M1008 1000.2V1008.1M1009 1001v0M1009 1003V1007.9M1010 1004.9V1008.3M1011 1006V1008.2M1012 1003.6V1008.2M1013 1001.4V1007.8M1014 1002.1V1007.4M1015 1005.6V1008.4M1016 1004.3V1008.3M1017 1003.5V1008.1M1018 999.5v0M1018 1001.1V1007.5M1019 1001.7V1008.4M1020 1005.1V1008.4M1021 1006.5V1008.4M1022 1003.5V1008.4M1023 1002.4V1008.3M1024 1000.2V1008.1M1025 1000.8V1008M1026 1003V1008.5M1027 1004.3V1008.2M1028 1004.7V1008.4M1029 1003.8V1008M1030 1004.4V1008.5M1031 999.8v0M1031 1002V1007.9M1032 1003.1V1008M1033 1004.8V1008.3M1034 1005.3V1008.4M1035 1003.7V1008.1M1036 1002.6V1007.8M1037 1001.8V1007.5M1038 1003.3V1008.1M1039 1005.3V1008.3M1040 1003.1V1008.4M1041 1001.4V1007.7M1042 1001.9V1008.5M1043 1003.5V1007.9M1044 1003.2V1008.1M1045 1004.2V1008.5M1046 1003.7V1008.4M1047 1004.6V1008M1048 1005.7V1008.5M1049 1004.5V1008.3M1050 1005.8V1008.4M1051 1004.4V1008.3M1052 1002.8V1008.1M1053 1003.2V1008.2M1065 1005.9V1007.9M1066 1005.6V1008.2M1067 1004.8V1007.9M1068 1004.5V1008M1069 1003.1V1008M1070 1001.8V1008.5M1071 1004.2V1008M1072 1005.1V1008.2M1073 1006.2V1008.4M1074 1005.6V1008.2M1075 1003.3V1008.1M1076 1003.2V1008.3M1077 1005.1V1008.4M1078 1006.9V1008.5M1079 1007V1008.4M1080 1006.4V1008.4M1081 1004.5V1008.5M1082 1003.5V1008.3M1083 1000.3V1007.9M1084 1002.1V1008.4M1085 1005.4V1008.3M1086 1005.5V1008.3M1087 1004.1V1007.5M1088 1004.3V1007.7M1089 1005.7V1008.4M1090 1006.6V1008.4M1091 1006V1008.2M1092 1005.7V1008.4M1093 1002.8V1004.1M1093 1005.8V1008.2M1094 1004.9V1007.8M1095 1005.9V1008.3M1096 1004.4V1008.3M1097 1000.1V1001.6M1097 1004V1008.1M1098 1002V1008M1099 1002.7V1008.2M1100 1005.4V1008.3M1101 1006.4V1008.4M1102 1003.9V1008.3M1103 1002.8v0M1103 1004.4V1008.2M1104 1003.1V1007.8M1105 1004.3V1008.4M1106 1004.8V1008.4M1107 1005.8V1008.3M1108 1005.3V1008.4M1109 1005.7V1008.4M1110 1005.3V1008.2M1111 1004.4V1008.2M1112 1002.9V1008.2M1113 1004.3V1007.8M1114 1003V1008.3M1115 1004.4V1008.3M1116 1002V1007.7M1117 1003.8V1008.2M1118 1006.4V1008.3M1119 1004.5V1008.4M1120 1004.4V1008.2M1121 1004.2V1008.4M1122 1005.8V1008.5M1123 1006.2V1008.3M1124 1005.4V1008.2M1125 1004.2V1008M1126 1002.2v0M1126 1004.1V1008M1127 1003.4V1007.9M1128 1004.7V1008.3M1129 1003.9V1008.1M1130 1004.2V1008.1M1131 1002.9V1008.1M1132 1002V1008.2M1133 1005.7V1008.4M1134 1005.5V1008.4M1135 1006V1008.4M1136 1006.1V1008.3M1137 1003.8V1008.3M1138 1003.7V1008.2M1139 1005V1008.3M1140 1004.4V1008.3M1141 1003.7V1008.4M1142 1006.4V1008.4M1143 999.9V1000.9M1143 1002.7V1007.9M1144 1000.4V1008.4M1145 1006.1V1008.3M1146 1004.6V1008.4M1147 1004.6V1008.3M1148 1002.1v0M1148 1004.7V1008.3M1149 1000.6V1007.8M1150 998.8v0M1150 1002.5V1007.7M1151 1004.8V1008.3M1152 1002.8V1008.1M1153 1005V1008.3M1154 1005.5V1008.4M1155 1004.2V1008.2M1156 1004.5V1008.4M1157 1004.3V1008.2M1158 1005.2V1008.3M1159 1003.9V1008M1160 1004.6V1008.3M1161 1004V1008M1162 1003.9V1008.3M1163 1003.6v0M1163 1005.7V1008M1164 1005.4V1008.4M1165 1004.9V1008.1M1166 1004.9V1008.3M1167 1004.2V1008M1168 1006.4V1008.4M1169 1007.3V1008.4M1170 1005V1008.3M1171 997v0M1171 1003.3V1008M1172 997.4v0M1172 999.3V1007.4M1173 999.5v0M1173 1002.6V1008.1M1174 1004.6V1008.2M1175 1004.5V1008.3M1176 1005V1008.2M1177 1004.9V1008.3M1178 1004.7V1008.3M1179 1006.2V1008.5M1180 1003.5V1008.3M1181 1003.3V1008.3M1182 1003.4V1008M1183 1003V1008.3M1184 1006.4V1008.4M1185 1006.8V1008.3M1186 1006.2V1008.2M1187 1004.3V1008.2M1188 1001v0M1188 1002.7V1007.8M1189 1000.1v0M1189 1004.7V1008.3M1190 1005.1V1008.4M1191 1005.1V1008.4M1192 1003.2V1008.3M1193 1003.9V1008.2M1194 1004.9V1008.1M1195 1002.3V1008.1M1196 1003.2V1008.4M1197 1006V1008.2M1198 1005.6V1008.4M1199 1004.4V1008.2M1200 1004V1007.9M1201 1001.5v0M1201 1003.4V1008.3M1202 1003.4V1008.1M1203 1005.1V1008.2M1204 1004.6V1008.2M1205 1002.9V1008.3M1206 1003.3V1008.4M1207 1004.1V1008.1M1208 1004.3V1008.3M1209 1006.8V1008.3M1210 1003.8V1008.5M1211 1002v0M1211 1004.2V1007.9M1212 1002.5V1008.1M1213 1005.3V1008.3M1214 1004.2V1008.4M1215 1003.7V1008.3M1216 1003.2V1008.3M1217 1002.8V1007.8M1218 1003.6V1008.1M1219 1003.7v0M1219 1005.6V1008.5M1220 1006.3V1008.4M1221 1004.7V1008.3M1222 1004.5V1008.2M1223 1002.5V1008.1M1224 1003.2v0M1224 1005.1V1008.1M1225 1006.1V1008.3M1226 1005.4V1008.4M1227 1004.5V1007.8M1228 1003.2V1008.1M1229 1001.7V1008.2M1230 999.7v0M1230 1002.3V1008.2M1231 1002.6v0M1231 1004.5V1008.4M1232 1004.5V1008M1233 1004.3V1008.3M1234 1003.4V1008M1235 1004.2V1008.4M1236 1005.8V1008.2M1237 1006.7V1008.5M1238 1005.1V1008.5M1239 1004.1V1008.1M1240 1003.5V1008.3M1241 1003.7V1008.5M1242 1005.9V1008.3M1243 1004.9V1008.2M1244 1000.9V1008.2M1245 1000.7V1007.5M1246 1001.3V1002.7M1246 1004.7V1008.2M1247 1004.1V1008.1M1248 1004.4V1008.1M1249 1004.7V1008.3M1250 1004V1008.4M1251 1005.9V1008.4M1252 1004.8V1008.2M1253 1006.1V1008.1M1254 1006.4V1008.4M1255 1006V1008.3M1256 1005V1008.1M1257 1003.2V1008.5M1258 1003.2V1008M1259 1003.9V1008.2M1260 1003.7V1008.1M1261 1002.9V1008.4M1262 1002.8V1008M1263 1003.5V1008.1M1264 1005.6V1008M1265 1005.5V1008.3M1266 1005.5V1008.4M1267 1003.6V1008.2M1268 1003.7V1008.2M1269 1003.9V1008.4M1270 1005.4V1008.2M1271 1006.4V1008.2M1272 1005.1V1008.4M1273 1000.4V1008.3M1274 998.9v0M1274 1001.1V1008.1M1275 1003.6V1008M1276 1004.2V1007.8M1277 1005.2V1008.4M1278 1003.6V1008.3M1279 1004.2V1008.3M1280 1004.1V1007.9M1281 1004V1008.3M1282 1005.5V1008.2M1283 1005.8V1008.1M1284 1004.3V1008.2M1285 1005.2V1008M1286 1005.4V1008.3M1287 1006V1008.4M1288 1005V1008.3M1289 1003.2V1008.1M1290 1002.6V1008.1M1291 1003.7V1008.3M1292 1004.4V1008.4M1293 1004.3V1008.3M1294 1004.6V1008.4M1295 1004.5V1008.4M1296 1002.4V1007.9M1297 1004.7V1008M1298 1005.3V1008.1M1299 1005V1008.2M1300 1005.5V1008.2M1301 1003.1V1008.5M1302 1004.5V1008.3M1303 1005.2V1008.1M180.4 998.4v0M210.5 998.4v0M377.5 999.5v0M389.5 999.5v0M403.3 999.5v0M424.4 1001.3v0M448.7 998.4v0M452.4 994.4v0M508.4 1001.3v0" stroke="#000" stroke-width="2.9" stroke-linecap="round" fill="none"/>
<path d="M425.5 971.5v0M367.3 992.5v0M450 989.2v0M451.2 988.4v0M501.5 993.3v0M535.3 992.5v0M588.4 976.5v0M626.5 980.5v0M664.1 975.5v0M743.3 993.3v0M758.3 989.3v0M1176.3 987.5v0M1268 982.4v0" stroke="#f00" stroke-width="2.9" stroke-linecap="round" fill="none"/>
<path d="M180.4 955.3l2.2 4.4h-4.4zM210.5 955.3l2.2 4.4h-4.4zM244.4 955.3l2.2 4.4h-4.4zM256.4 955.3l2.2 4.4h-4.4zM294.3 955.3l2.2 4.4h-4.4zM317.5 955.3l2.2 4.4h-4.4zM367.3 955.3l2.2 4.4h-4.4zM377.5 955.3l2.2 4.4h-4.4zM389.5 955.3l2.2 4.4h-4.4zM404.4 955.3l2.2 4.4h-4.4zM424.1 955.3l2.2 4.4h-4.4zM425.7 955.3l2.2 4.4h-4.4zM448.7 955.3l2.2 4.4h-4.4zM450.5 955.3l2.2 4.4h-4.4zM452.1 955.3l2.2 4.4h-4.4zM479.3 955.3l2.2 4.4h-4.4zM501.5 955.3l2.2 4.4h-4.4zM509.2 955.3l2.2 4.4h-4.4zM535.3 955.3l2.2 4.4h-4.4zM547.3 955.3l2.2 4.4h-4.4zM557.5 955.3l2.2 4.4h-4.4zM563.3 955.3l2.2 4.4h-4.4zM574 955.3l2.2 4.4h-4.4zM575.6 955.3l2.2 4.4h-4.4zM588.4 955.3l2.2 4.4h-4.4zM598.5 955.3l2.2 4.4h-4.4zM626.5 955.3l2.2 4.4h-4.4zM664.1 955.3l2.2 4.4h-4.4zM716.7 955.3l2.2 4.4h-4.4zM732.1 955.3l2.2 4.4h-4.4zM741.7 955.3l2.2 4.4h-4.4zM743.3 955.3l2.2 4.4h-4.4zM758.3 955.3l2.2 4.4h-4.4zM768.4 955.3l2.2 4.4h-4.4zM801.5 955.3l2.2 4.4h-4.4zM802 955.3l2.2 4.4h-4.4zM802.3 955.3l2.2 4.4h-4.4zM803.1 955.3l2.2 4.4h-4.4zM803.6 955.3l2.2 4.4h-4.4zM805.2 955.3l2.2 4.4h-4.4zM813.5 955.3l2.2 4.4h-4.4zM815.1 955.3l2.2 4.4h-4.4zM834.8 955.3l2.2 4.4h-4.4zM849.2 955.3l2.2 4.4h-4.4zM860.4 955.3l2.2 4.4h-4.4zM863.6 955.3l2.2 4.4h-4.4zM881.5 955.3l2.2 4.4h-4.4zM889.8 955.3l2.2 4.4h-4.4zM891.4 955.3l2.2 4.4h-4.4zM892.4 955.3l2.2 4.4h-4.4zM920 955.3l2.2 4.4h-4.4zM920.4 955.3l2.2 4.4h-4.4zM961.3 955.3l2.2 4.4h-4.4zM976 955.3l2.2 4.4h-4.4zM994.1 955.3l2.2 4.4h-4.4zM1038.4 955.3l2.2 4.4h-4.4zM1045 955.3l2.2 4.4h-4.4zM1046.9 955.3l2.2 4.4h-4.4zM1048.5 955.3l2.2 4.4h-4.4zM1052 955.3l2.2 4.4h-4.4zM1053.5 955.3l2.2 4.4h-4.4zM1055 955.3l2.2 4.4h-4.4zM1056.5 955.3l2.2 4.4h-4.4zM1058 955.3l2.2 4.4h-4.4zM1059.5 955.3l2.2 4.4h-4.4zM1061 955.3l2.2 4.4h-4.4zM1062.5 955.3l2.2 4.4h-4.4zM1064 955.3l2.2 4.4h-4.4zM1065.5 955.3l2.2 4.4h-4.4zM1067 955.3l2.2 4.4h-4.4zM1068.5 955.3l2.2 4.4h-4.4zM1070 955.3l2.2 4.4h-4.4zM1072 955.3l2.2 4.4h-4.4zM1138.1 955.3l2.2 4.4h-4.4zM1176.3 955.3l2.2 4.4h-4.4zM1192 955.3l2.2 4.4h-4.4zM1193.6 955.3l2.2 4.4h-4.4zM1195.5 955.3l2.2 4.4h-4.4zM1198.4 955.3l2.2 4.4h-4.4zM1202.1 955.3l2.2 4.4h-4.4zM1222.7 955.3l2.2 4.4h-4.4zM1224.3 955.3l2.2 4.4h-4.4zM1225.1 955.3l2.2 4.4h-4.4zM1226.7 955.3l2.2 4.4h-4.4zM1253.1 955.3l2.2 4.4h-4.4zM1254.7 955.3l2.2 4.4h-4.4zM1255.5 955.3l2.2 4.4h-4.4zM1263.2 955.3l2.2 4.4h-4.4zM1264.8 955.3l2.2 4.4h-4.4zM1266.1 955.3l2.2 4.4h-4.4zM1268 955.3l2.2 4.4h-4.4zM1272.8 955.3l2.2 4.4h-4.4zM1274.4 955.3l2.2 4.4h-4.4zM1293.3 955.3l2.2 4.4h-4.4zM1294.9 955.3l2.2 4.4h-4.4zM1296.3 955.3l2.2 4.4h-4.4z" fill="#f00"/>
<path d="M105.5 1009.5H1485.5M105.5 983.5H1485.5M105.5 957.5H1485.5" stroke="#b0b0b0" stroke-width="1.11" stroke-dasharray="1.11 1.83" fill="none"/>
<path d="M162.2 1011.5V954.5M318.8 1011.5V954.5M421.7 1011.5V954.5M523.9 1011.5V954.5M627.1 1011.5V954.5M728.9 1011.5V954.5M832.1 1011.5V954.5M934.8 1011.5V954.5M1072.1 1011.5V954.5M1187.1 1011.5V954.5M1303.1 1011.5V954.5" stroke="#800080" stroke-width="2.08" stroke-dasharray="2.08 3.44" stroke-dashoffset="-0.6" fill="none"/>
</g>
<rect x="105.5" y="954.5" width="1380" height="57" fill="none" stroke="#000" stroke-width="1.11"/>
<text x="162.5" y="1031.8" font-size="13.889" text-anchor="middle">0</text>
<text x="455.3" y="1031.8" font-size="13.889" text-anchor="middle">10000</text>
<text x="748" y="1031.8" font-size="13.889" text-anchor="middle">20000</text>
<text x="1040.7" y="1031.8" font-size="13.889" text-anchor="middle">30000</text>
<text x="1333.5" y="1031.8" font-size="13.889" text-anchor="middle">40000</text>
<path d="M162.5 1011.5v4.9M455.5 1011.5v4.9M747.5 1011.5v4.9M1040.5 1011.5v4.9M1333.5 1011.5v4.9" stroke="#000" stroke-width="1.11" fill="none"/>
<text x="95.8" y="1014.6" font-size="13.889" text-anchor="end">0</text>
<text x="95.8" y="988.7" font-size="13.889" text-anchor="end">5</text>
<text x="95.8" y="962.8" font-size="13.889" text-anchor="end">10</text>
<path d="M105.5 1009.5h-4.9M105.5 983.5h-4.9M105.5 957.5h-4.9M105.5 996.5h-2.8M105.5 970.5h-2.8" stroke="#000" stroke-width="1.11" fill="none"/>
<text transform="translate(69.5 983) rotate(-90)" font-size="13.889" text-anchor="middle">dr</text>
</svg>
</body></html>
